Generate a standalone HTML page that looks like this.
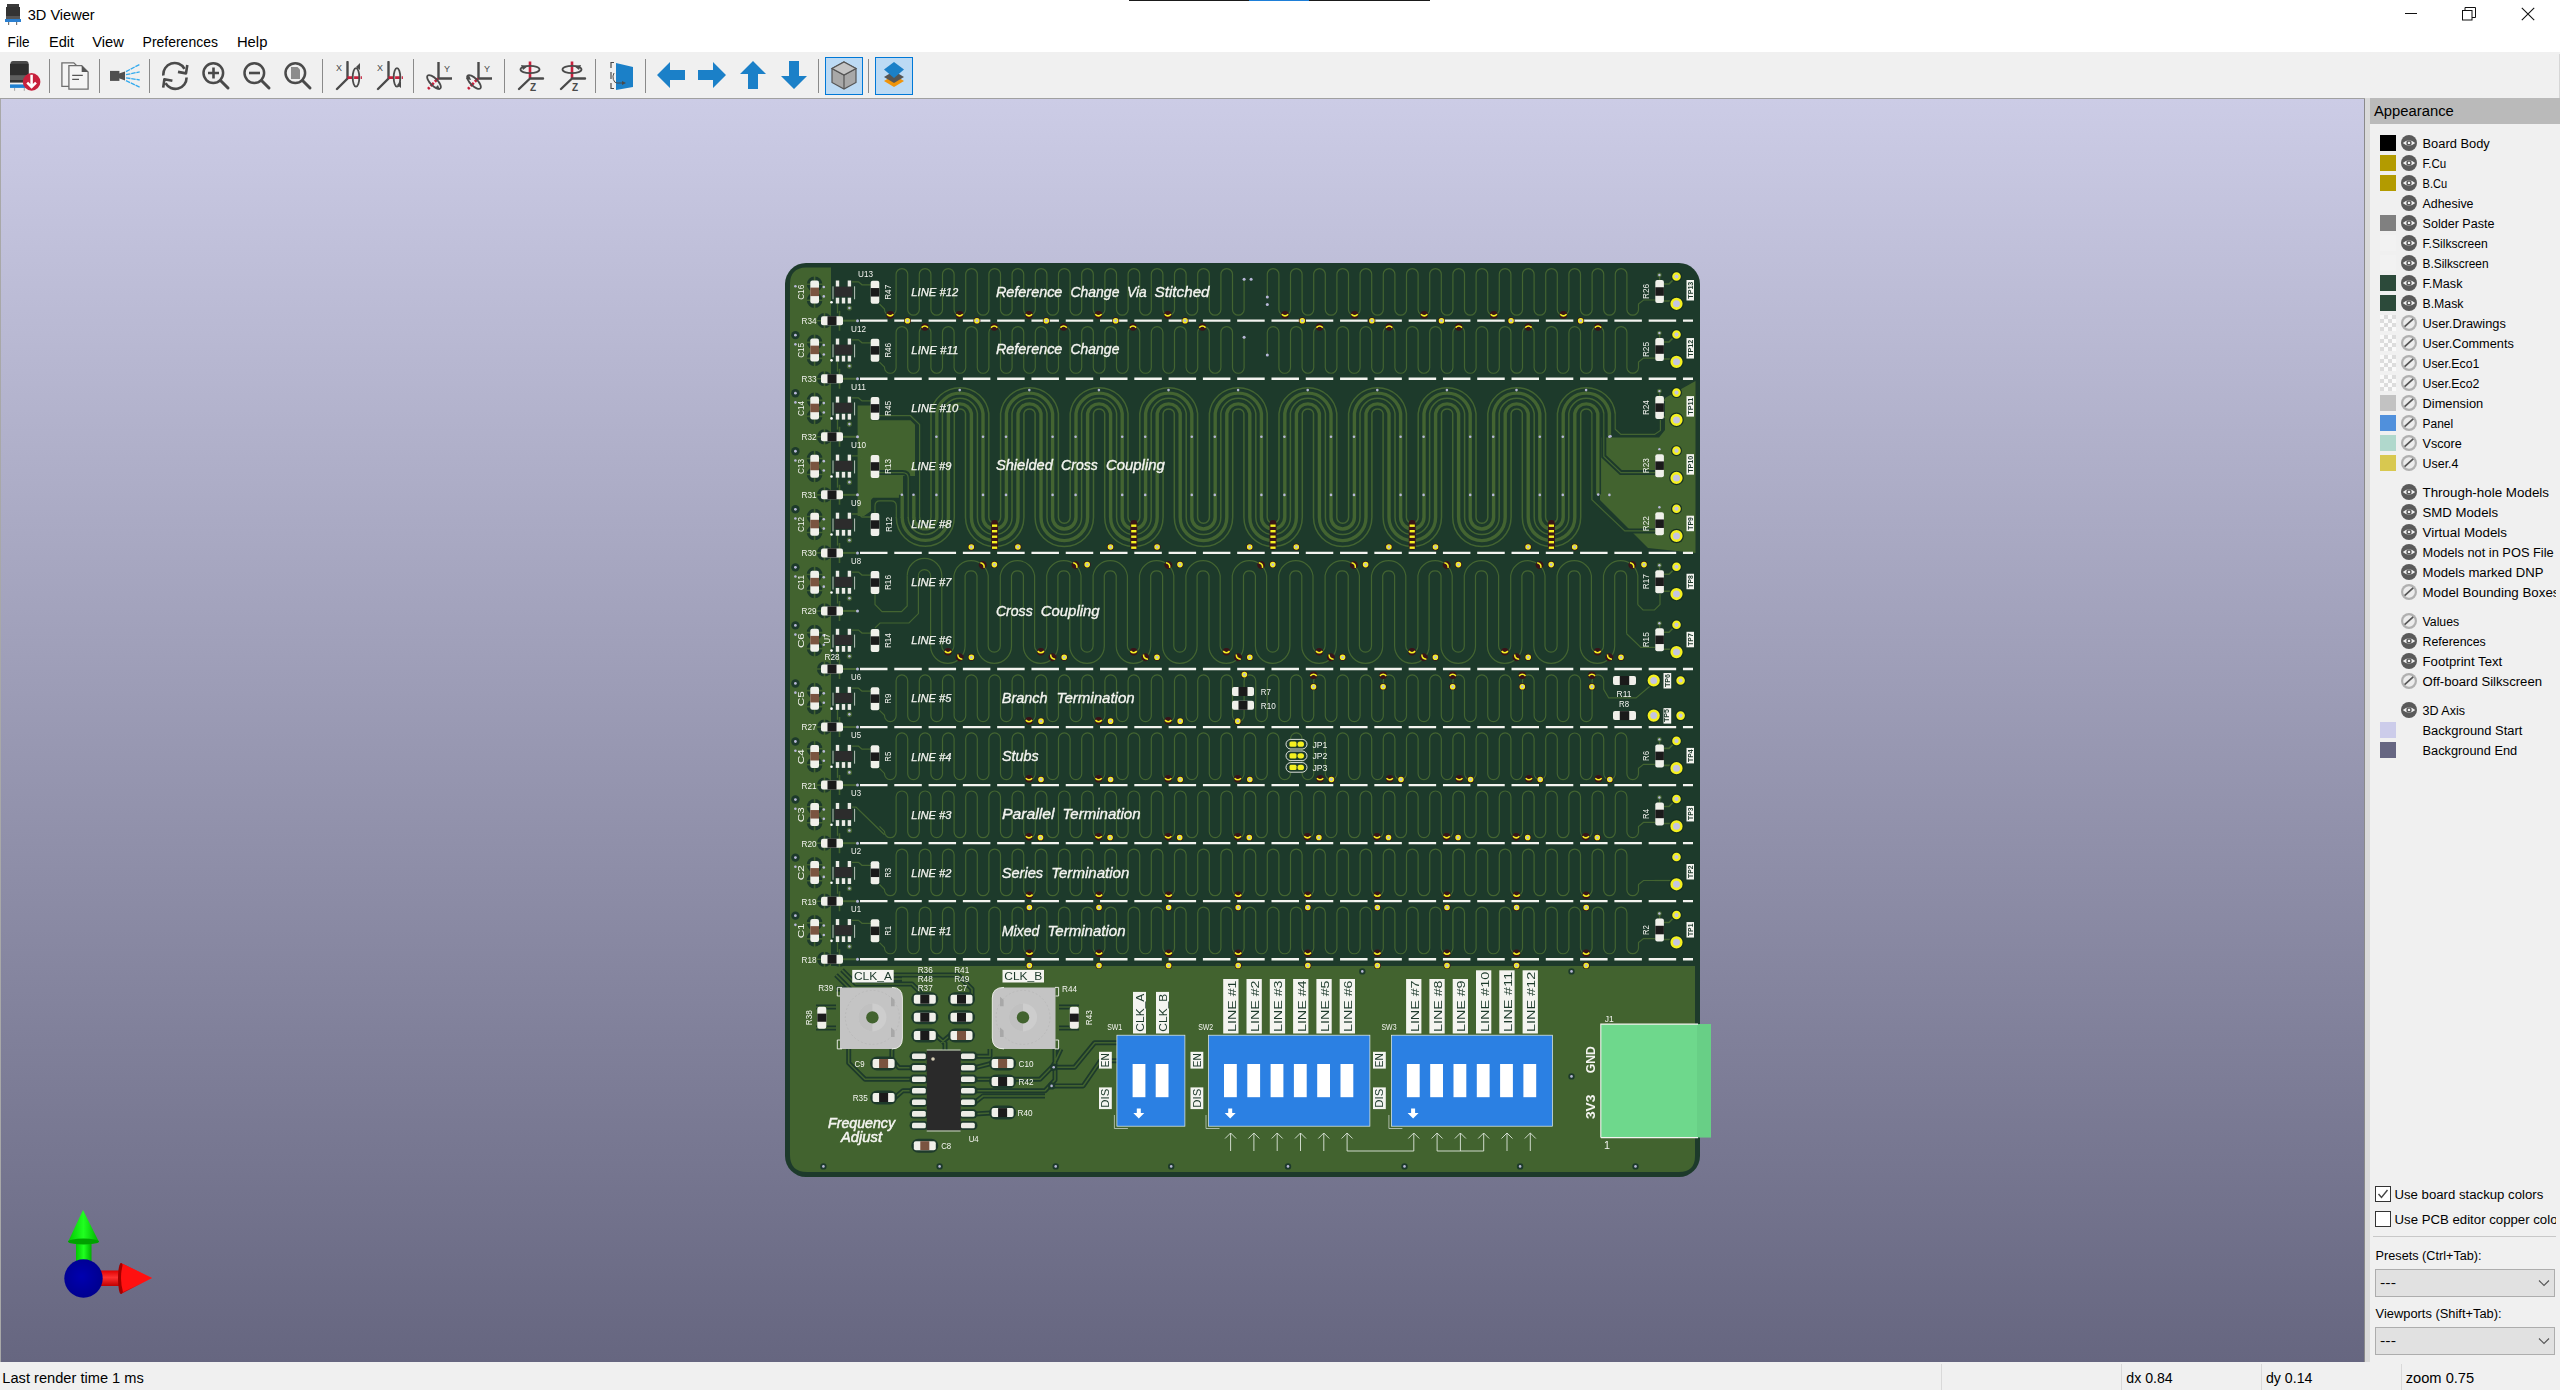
<!DOCTYPE html>
<html><head><meta charset="utf-8"><title>3D Viewer</title>
<style>
html,body{margin:0;padding:0;width:2560px;height:1390px;overflow:hidden;background:#fff}
.ab{position:absolute}
body{font-family:"Liberation Sans", sans-serif;color:#000}
.t16{font-size:16px;line-height:20px;white-space:nowrap}
.t15{font-size:15px;line-height:18px;white-space:nowrap}
</style></head><body>
<div class="ab" style="left:0;top:0;width:2560px;height:52px;background:#fff"></div>
<div class="ab" style="left:1129px;top:0;width:301px;height:1px;background:#1a1a1a"></div>
<div class="ab" style="left:1249px;top:0;width:60px;height:1px;background:#1e7fd8"></div>
<svg class="ab" style="left:4px;top:3px" width="18" height="22" viewBox="0 0 18 22"><rect x="3" y="1" width="12" height="4" fill="#3a3a3a"/><rect x="2" y="4" width="14" height="9" fill="#333"/><rect x="2" y="13" width="14" height="3" fill="#555"/><rect x="1" y="16" width="16" height="3" fill="#2a7fd0"/><rect x="4" y="19" width="1.2" height="3" fill="#777"/><rect x="12" y="19" width="1.2" height="3" fill="#777"/></svg>
<div class="ab" style="left:2405px;top:13px;width:12px;height:1px;background:#111"></div>
<svg class="ab" style="left:2462px;top:7px" width="14" height="14" viewBox="0 0 14 14"><rect x="0.5" y="3.5" width="9.5" height="9.5" fill="none" stroke="#111" stroke-width="1"/><path d="M3,3.5 V0.5 H13.5 V10.5 H10" fill="none" stroke="#111" stroke-width="1"/></svg>
<svg class="ab" style="left:2521px;top:7px" width="14" height="14" viewBox="0 0 14 14"><path d="M0.8,0.8 L13.2,13.2 M13.2,0.8 L0.8,13.2" stroke="#111" stroke-width="1.1"/></svg>
<div class="ab" style="left:0;top:52px;width:2560px;height:46px;background:#f0f0f0"></div>
<div class="ab" style="left:0;top:98px;width:2365px;height:1px;background:#a0a0a0"></div>
<div class="ab" style="left:49px;top:59px;width:1px;height:34px;background:#8a8a8a"></div>
<div class="ab" style="left:99px;top:59px;width:1px;height:34px;background:#8a8a8a"></div>
<div class="ab" style="left:149px;top:59px;width:1px;height:34px;background:#8a8a8a"></div>
<div class="ab" style="left:322px;top:59px;width:1px;height:34px;background:#8a8a8a"></div>
<div class="ab" style="left:413px;top:59px;width:1px;height:34px;background:#8a8a8a"></div>
<div class="ab" style="left:504px;top:59px;width:1px;height:34px;background:#8a8a8a"></div>
<div class="ab" style="left:595px;top:59px;width:1px;height:34px;background:#8a8a8a"></div>
<div class="ab" style="left:645px;top:59px;width:1px;height:34px;background:#8a8a8a"></div>
<div class="ab" style="left:818px;top:59px;width:1px;height:34px;background:#8a8a8a"></div>
<div class="ab" style="left:868px;top:59px;width:1px;height:34px;background:#8a8a8a"></div>
<div class="ab" style="left:2559px;top:54px;width:1px;height:44px;background:#d6d6d6"></div>
<svg class="ab" style="left:10px;top:61px" width="31" height="31" viewBox="0 0 31 31"><path d="M0.5,2.5 Q0.5,0 3,0 H16 Q18.5,0 18.5,2.5 V3 H0.5Z" fill="#4a4a4a"/><rect x="0" y="2.8" width="18.8" height="12" fill="#2e2e2e"/><rect x="0" y="15" width="18.8" height="4.2" fill="#5e5e5e"/><rect x="0" y="19" width="18.8" height="2.6" fill="#333"/><rect x="0" y="23.4" width="18.8" height="3.5" fill="#1f7fd0"/><rect x="4.2" y="27" width="0.9" height="2.8" fill="#999"/><rect x="13.8" y="27" width="0.9" height="2.8" fill="#999"/><circle cx="21.6" cy="20.9" r="8.8" fill="#c8203c"/><path d="M21.6,13.8 V25.8 M17.2,21.6 L21.6,26 L26,21.6" fill="none" stroke="#fff" stroke-width="2.5"/></svg>
<svg class="ab" style="left:61px;top:61px" width="29" height="30" viewBox="0 0 29 30"><path d="M0.9,1.8 H12.8 L15.8,4.8 V25.3 H0.9 Z" fill="#f4f4f4" stroke="#6e6e6e" stroke-width="1.3"/><path d="M7.9,4.6 H20.7 L27.1,11 V28.1 H7.9 Z" fill="#f4f4f4" stroke="#6e6e6e" stroke-width="1.3"/><path d="M20.7,4.6 L27.1,11 H20.7 Z" fill="#555"/><path d="M11.2,14.3 H21.8 M11.2,18.4 H18" stroke="#555" stroke-width="1.2"/></svg>
<svg class="ab" style="left:110px;top:61px" width="30" height="30" viewBox="0 0 30 30"><rect x="0" y="9.9" width="9.4" height="10" fill="#505050"/><path d="M9,12.6 L15,10.6 V19.6 L9,17.2 Z" fill="#505050"/><path d="M16,10.6 L29.7,3.4 M16,13.7 L29.7,10.9 M16,16.8 L29.7,19 M16,19.6 L29.7,26.2" stroke="#33aaee" stroke-width="1.3" stroke-dasharray="4.5,0.8"/></svg>
<svg class="ab" style="left:161px;top:61px" width="29" height="30" viewBox="0 0 29 30"><path d="M2.4,14.5 A11.3,11.3 0 0 1 23.5,7.8" fill="none" stroke="#4a4a4a" stroke-width="2.6"/><path d="M26.3,4 L25,12.4 L17,10.9" fill="none" stroke="#4a4a4a" stroke-width="2.6" stroke-linejoin="round"/><path d="M25.6,16.5 A11.3,11.3 0 0 1 4.5,22.2" fill="none" stroke="#4a4a4a" stroke-width="2.6"/><path d="M2.2,26.6 L3.4,18.2 L11.4,19.7" fill="none" stroke="#4a4a4a" stroke-width="2.6" stroke-linejoin="round"/></svg>
<svg class="ab" style="left:202px;top:62px" width="29" height="29" viewBox="0 0 29 29"><circle cx="11.3" cy="11.1" r="9.8" fill="none" stroke="#4a4a4a" stroke-width="2.5"/><path d="M18.5,18.5 L26,26" stroke="#4a4a4a" stroke-width="3" stroke-linecap="round"/><path d="M11.5,5.5 V16.5 M6,11 H17" stroke="#4a4a4a" stroke-width="2.6"/></svg>
<svg class="ab" style="left:243px;top:62px" width="29" height="29" viewBox="0 0 29 29"><circle cx="11.3" cy="11.1" r="9.8" fill="none" stroke="#4a4a4a" stroke-width="2.5"/><path d="M18.5,18.5 L26,26" stroke="#4a4a4a" stroke-width="3" stroke-linecap="round"/><path d="M6,11 H17" stroke="#4a4a4a" stroke-width="2.6"/></svg>
<svg class="ab" style="left:284px;top:62px" width="29" height="29" viewBox="0 0 29 29"><circle cx="11.3" cy="11.1" r="9.8" fill="none" stroke="#4a4a4a" stroke-width="2.5"/><path d="M18.5,18.5 L26,26" stroke="#4a4a4a" stroke-width="3" stroke-linecap="round"/><path d="M7,5 H13.5 L16,7.5 V17 H7 Z" fill="#8c8c8c"/></svg>
<svg class="ab" style="left:335px;top:61px" width="28" height="30" viewBox="0 0 28 30"><text x="1" y="10" font-family="Liberation Sans" font-size="9" fill="#4a4a4a">X</text><path d="M12.5,1 V17.5 L2,28" fill="none" stroke="#4a4a4a" stroke-width="2.4" stroke-linecap="round"/><path d="M12.5,16.6 H26.9" stroke="#c8203c" stroke-width="2.6" stroke-dasharray="5,1.6"/><ellipse cx="21" cy="16.4" rx="3.3" ry="9.3" fill="none" stroke="#4a4a4a" stroke-width="1.8"/><path d="M21,6 L25,2 L25,9 Z" fill="#4a4a4a"/></svg>
<svg class="ab" style="left:376px;top:61px" width="28" height="30" viewBox="0 0 28 30"><text x="1" y="10" font-family="Liberation Sans" font-size="9" fill="#4a4a4a">X</text><path d="M12.5,1 V17.5 L2,28" fill="none" stroke="#4a4a4a" stroke-width="2.4" stroke-linecap="round"/><path d="M12.5,16.6 H26.9" stroke="#c8203c" stroke-width="2.6" stroke-dasharray="5,1.6"/><ellipse cx="21" cy="16.4" rx="3.3" ry="9.3" fill="none" stroke="#4a4a4a" stroke-width="1.8"/><path d="M21,24 L25,27 L25,20 Z" fill="#4a4a4a"/></svg>
<svg class="ab" style="left:426px;top:61px" width="28" height="30" viewBox="0 0 28 30"><text x="18" y="11" font-family="Liberation Sans" font-size="9" fill="#4a4a4a">Y</text><path d="M12.5,1 V17.5 H26" fill="none" stroke="#4a4a4a" stroke-width="2.4"/><path d="M12,17.5 L2,28" stroke="#c8203c" stroke-width="2.6" stroke-dasharray="4.5,1.6"/><ellipse cx="8" cy="21" rx="9" ry="3.6" transform="rotate(45 8 21)" fill="none" stroke="#4a4a4a" stroke-width="1.8"/><path d="M9,27 L14,29 L12,24 Z" fill="#4a4a4a"/></svg>
<svg class="ab" style="left:466px;top:61px" width="28" height="30" viewBox="0 0 28 30"><text x="18" y="11" font-family="Liberation Sans" font-size="9" fill="#4a4a4a">Y</text><path d="M12.5,1 V17.5 H26" fill="none" stroke="#4a4a4a" stroke-width="2.4"/><path d="M12,17.5 L2,28" stroke="#c8203c" stroke-width="2.6" stroke-dasharray="4.5,1.6"/><ellipse cx="8" cy="21" rx="9" ry="3.6" transform="rotate(45 8 21)" fill="none" stroke="#4a4a4a" stroke-width="1.8"/><path d="M0,18 L3,14 L5,19 Z" fill="#4a4a4a"/></svg>
<svg class="ab" style="left:517px;top:61px" width="28" height="30" viewBox="0 0 28 30"><path d="M13,0.5 V17" stroke="#c8203c" stroke-width="2.6"/><path d="M13,17.5 H26 M13,17.5 L2,28" fill="none" stroke="#4a4a4a" stroke-width="2.4" stroke-linecap="round"/><ellipse cx="13" cy="8.5" rx="9.5" ry="3.6" fill="none" stroke="#4a4a4a" stroke-width="1.8"/><text x="13" y="29.5" font-family="Liberation Sans" font-weight="bold" font-size="10" fill="#4a4a4a">Z</text><path d="M4,4 L11,5 L6,9 Z" fill="#4a4a4a"/></svg>
<svg class="ab" style="left:559px;top:61px" width="28" height="30" viewBox="0 0 28 30"><path d="M13,0.5 V17" stroke="#c8203c" stroke-width="2.6"/><path d="M13,17.5 H26 M13,17.5 L2,28" fill="none" stroke="#4a4a4a" stroke-width="2.4" stroke-linecap="round"/><ellipse cx="13" cy="8.5" rx="9.5" ry="3.6" fill="none" stroke="#4a4a4a" stroke-width="1.8"/><text x="13" y="29.5" font-family="Liberation Sans" font-weight="bold" font-size="10" fill="#4a4a4a">Z</text><path d="M22,4 L15,5 L20,9 Z" fill="#4a4a4a"/></svg>
<svg class="ab" style="left:610px;top:61px" width="24" height="30" viewBox="0 0 24 30"><path d="M6,2 L23,6 V26 L6,29 Z" fill="#1b80c8"/><path d="M4,1.5 H1 V7 M1,11 V18 M1,22 V27.5 H4" fill="none" stroke="#4a4a4a" stroke-width="1.2"/><path d="M4,12 A4,6 0 0 0 7,22 H12" fill="none" stroke="#4a4a4a" stroke-width="1"/><path d="M12,20 L16,22 L12,24Z" fill="#4a4a4a"/></svg>
<svg class="ab" style="left:657px;top:61px" width="28" height="28" viewBox="0 0 28 28"><path d="M0,14 L13,1 V9 H28 V19 H13 V27 Z" fill="#1b80c8"/></svg>
<svg class="ab" style="left:698px;top:61px" width="28" height="28" viewBox="0 0 28 28"><path d="M28,14 L15,1 V9 H0 V19 H15 V27 Z" fill="#1b80c8"/></svg>
<svg class="ab" style="left:739px;top:61px" width="28" height="28" viewBox="0 0 28 28"><path d="M14,0 L27,13 H19 V28 H9 V13 H1 Z" fill="#1b80c8"/></svg>
<svg class="ab" style="left:780px;top:61px" width="28" height="28" viewBox="0 0 28 28"><path d="M14,28 L27,15 H19 V0 H9 V15 H1 Z" fill="#1b80c8"/></svg>
<div class="ab" style="left:825px;top:57px;width:36px;height:36px;background:#bcdaf4;border:1px solid #0078d7"></div>
<div class="ab" style="left:875px;top:57px;width:36px;height:36px;background:#bcdaf4;border:1px solid #0078d7"></div>
<svg class="ab" style="left:830px;top:61px" width="28" height="29" viewBox="0 0 28 29"><path d="M14,1 L26,7.5 V21.5 L14,28 L2,21.5 V7.5 Z" fill="#a8a8a8" stroke="#555" stroke-width="1.2"/><path d="M2,7.5 L14,14 L26,7.5 M14,14 V28" fill="none" stroke="#555" stroke-width="1.2"/><path d="M14,1 L26,7.5 L14,14 L2,7.5 Z" fill="#c4c4c4" stroke="#555" stroke-width="1.2"/></svg>
<svg class="ab" style="left:880px;top:61px" width="28" height="30" viewBox="0 0 28 30"><path d="M14,14 L24,20 L14,26 L4,20 Z" fill="#f0940a"/><path d="M14,10 L24,16 L14,22 L4,16 Z" fill="#555"/><path d="M14,1 L24,8.5 L14,17 L4,8.5 Z" fill="#1b80c8"/></svg>
<div class="ab" style="left:0;top:99px;width:2365px;height:1263px;background:linear-gradient(#cccce6 0px,#666680 100%)"></div>
<div class="ab" style="left:0;top:99px;width:1px;height:1263px;background:#a8a8a8"></div>
<div class="ab" style="left:2364px;top:99px;width:1px;height:1263px;background:#8a8a8a"></div>
<div class="ab" style="left:2365px;top:98px;width:5px;height:1264px;background:#dadada"></div>
<div class="ab" style="left:2370px;top:98px;width:190px;height:1264px;background:#f0f0f0"></div>
<div class="ab" style="left:2370px;top:98px;width:190px;height:26px;background:#bababa"></div>
<div class="ab" style="left:2380px;top:135px;width:16px;height:16px;background:#000000"></div>
<svg class="ab" style="left:2401px;top:135px" width="16" height="16" viewBox="0 0 16 16"><circle cx="8" cy="8" r="8" fill="#5a5a5a"/><path d="M1.8,8 Q8,2.6 14.2,8 Q8,13.4 1.8,8Z" fill="#f0f0f0"/><circle cx="8" cy="7.9" r="2.7" fill="#5a5a5a"/><rect x="6.9" y="6.8" width="2.2" height="2.2" fill="#f0f0f0"/></svg>
<div class="ab" style="left:2380px;top:155px;width:16px;height:16px;background:#b39b00"></div>
<svg class="ab" style="left:2401px;top:155px" width="16" height="16" viewBox="0 0 16 16"><circle cx="8" cy="8" r="8" fill="#5a5a5a"/><path d="M1.8,8 Q8,2.6 14.2,8 Q8,13.4 1.8,8Z" fill="#f0f0f0"/><circle cx="8" cy="7.9" r="2.7" fill="#5a5a5a"/><rect x="6.9" y="6.8" width="2.2" height="2.2" fill="#f0f0f0"/></svg>
<div class="ab" style="left:2380px;top:175px;width:16px;height:16px;background:#b39b00"></div>
<svg class="ab" style="left:2401px;top:175px" width="16" height="16" viewBox="0 0 16 16"><circle cx="8" cy="8" r="8" fill="#5a5a5a"/><path d="M1.8,8 Q8,2.6 14.2,8 Q8,13.4 1.8,8Z" fill="#f0f0f0"/><circle cx="8" cy="7.9" r="2.7" fill="#5a5a5a"/><rect x="6.9" y="6.8" width="2.2" height="2.2" fill="#f0f0f0"/></svg>
<svg class="ab" style="left:2401px;top:195px" width="16" height="16" viewBox="0 0 16 16"><circle cx="8" cy="8" r="8" fill="#5a5a5a"/><path d="M1.8,8 Q8,2.6 14.2,8 Q8,13.4 1.8,8Z" fill="#f0f0f0"/><circle cx="8" cy="7.9" r="2.7" fill="#5a5a5a"/><rect x="6.9" y="6.8" width="2.2" height="2.2" fill="#f0f0f0"/></svg>
<div class="ab" style="left:2380px;top:215px;width:16px;height:16px;background:#808080"></div>
<svg class="ab" style="left:2401px;top:215px" width="16" height="16" viewBox="0 0 16 16"><circle cx="8" cy="8" r="8" fill="#5a5a5a"/><path d="M1.8,8 Q8,2.6 14.2,8 Q8,13.4 1.8,8Z" fill="#f0f0f0"/><circle cx="8" cy="7.9" r="2.7" fill="#5a5a5a"/><rect x="6.9" y="6.8" width="2.2" height="2.2" fill="#f0f0f0"/></svg>
<div class="ab" style="left:2380px;top:235px;width:16px;height:16px;background:#f2f2f2"></div>
<svg class="ab" style="left:2401px;top:235px" width="16" height="16" viewBox="0 0 16 16"><circle cx="8" cy="8" r="8" fill="#5a5a5a"/><path d="M1.8,8 Q8,2.6 14.2,8 Q8,13.4 1.8,8Z" fill="#f0f0f0"/><circle cx="8" cy="7.9" r="2.7" fill="#5a5a5a"/><rect x="6.9" y="6.8" width="2.2" height="2.2" fill="#f0f0f0"/></svg>
<div class="ab" style="left:2380px;top:255px;width:16px;height:16px;background:#f2f2f2"></div>
<svg class="ab" style="left:2401px;top:255px" width="16" height="16" viewBox="0 0 16 16"><circle cx="8" cy="8" r="8" fill="#5a5a5a"/><path d="M1.8,8 Q8,2.6 14.2,8 Q8,13.4 1.8,8Z" fill="#f0f0f0"/><circle cx="8" cy="7.9" r="2.7" fill="#5a5a5a"/><rect x="6.9" y="6.8" width="2.2" height="2.2" fill="#f0f0f0"/></svg>
<div class="ab" style="left:2380px;top:275px;width:16px;height:16px;background:#2c4a3a"></div>
<svg class="ab" style="left:2401px;top:275px" width="16" height="16" viewBox="0 0 16 16"><circle cx="8" cy="8" r="8" fill="#5a5a5a"/><path d="M1.8,8 Q8,2.6 14.2,8 Q8,13.4 1.8,8Z" fill="#f0f0f0"/><circle cx="8" cy="7.9" r="2.7" fill="#5a5a5a"/><rect x="6.9" y="6.8" width="2.2" height="2.2" fill="#f0f0f0"/></svg>
<div class="ab" style="left:2380px;top:295px;width:16px;height:16px;background:#2c4a3a"></div>
<svg class="ab" style="left:2401px;top:295px" width="16" height="16" viewBox="0 0 16 16"><circle cx="8" cy="8" r="8" fill="#5a5a5a"/><path d="M1.8,8 Q8,2.6 14.2,8 Q8,13.4 1.8,8Z" fill="#f0f0f0"/><circle cx="8" cy="7.9" r="2.7" fill="#5a5a5a"/><rect x="6.9" y="6.8" width="2.2" height="2.2" fill="#f0f0f0"/></svg>
<svg class="ab" style="left:2380px;top:315px" width="16" height="16"><rect width="16" height="16" fill="#fafafa"/><rect x="4" y="0" width="4" height="4" fill="#dcdcdc"/><rect x="0" y="4" width="4" height="4" fill="#dcdcdc"/><rect x="8" y="4" width="4" height="4" fill="#dcdcdc"/><rect x="12" y="0" width="4" height="4" fill="#dcdcdc"/><rect x="4" y="8" width="4" height="4" fill="#dcdcdc"/><rect x="12" y="8" width="4" height="4" fill="#dcdcdc"/><rect x="0" y="12" width="4" height="4" fill="#dcdcdc"/><rect x="8" y="12" width="4" height="4" fill="#dcdcdc"/></svg>
<svg class="ab" style="left:2401px;top:315px" width="16" height="16" viewBox="0 0 16 16"><circle cx="8" cy="8" r="8" fill="#b0b0b0"/><circle cx="8" cy="8" r="5.8" fill="#ececec"/><path d="M3.6,11.6 L12.2,3.8" stroke="#555" stroke-width="1.7"/></svg>
<svg class="ab" style="left:2380px;top:335px" width="16" height="16"><rect width="16" height="16" fill="#fafafa"/><rect x="4" y="0" width="4" height="4" fill="#dcdcdc"/><rect x="0" y="4" width="4" height="4" fill="#dcdcdc"/><rect x="8" y="4" width="4" height="4" fill="#dcdcdc"/><rect x="12" y="0" width="4" height="4" fill="#dcdcdc"/><rect x="4" y="8" width="4" height="4" fill="#dcdcdc"/><rect x="12" y="8" width="4" height="4" fill="#dcdcdc"/><rect x="0" y="12" width="4" height="4" fill="#dcdcdc"/><rect x="8" y="12" width="4" height="4" fill="#dcdcdc"/></svg>
<svg class="ab" style="left:2401px;top:335px" width="16" height="16" viewBox="0 0 16 16"><circle cx="8" cy="8" r="8" fill="#b0b0b0"/><circle cx="8" cy="8" r="5.8" fill="#ececec"/><path d="M3.6,11.6 L12.2,3.8" stroke="#555" stroke-width="1.7"/></svg>
<svg class="ab" style="left:2380px;top:355px" width="16" height="16"><rect width="16" height="16" fill="#fafafa"/><rect x="4" y="0" width="4" height="4" fill="#dcdcdc"/><rect x="0" y="4" width="4" height="4" fill="#dcdcdc"/><rect x="8" y="4" width="4" height="4" fill="#dcdcdc"/><rect x="12" y="0" width="4" height="4" fill="#dcdcdc"/><rect x="4" y="8" width="4" height="4" fill="#dcdcdc"/><rect x="12" y="8" width="4" height="4" fill="#dcdcdc"/><rect x="0" y="12" width="4" height="4" fill="#dcdcdc"/><rect x="8" y="12" width="4" height="4" fill="#dcdcdc"/></svg>
<svg class="ab" style="left:2401px;top:355px" width="16" height="16" viewBox="0 0 16 16"><circle cx="8" cy="8" r="8" fill="#b0b0b0"/><circle cx="8" cy="8" r="5.8" fill="#ececec"/><path d="M3.6,11.6 L12.2,3.8" stroke="#555" stroke-width="1.7"/></svg>
<svg class="ab" style="left:2380px;top:375px" width="16" height="16"><rect width="16" height="16" fill="#fafafa"/><rect x="4" y="0" width="4" height="4" fill="#dcdcdc"/><rect x="0" y="4" width="4" height="4" fill="#dcdcdc"/><rect x="8" y="4" width="4" height="4" fill="#dcdcdc"/><rect x="12" y="0" width="4" height="4" fill="#dcdcdc"/><rect x="4" y="8" width="4" height="4" fill="#dcdcdc"/><rect x="12" y="8" width="4" height="4" fill="#dcdcdc"/><rect x="0" y="12" width="4" height="4" fill="#dcdcdc"/><rect x="8" y="12" width="4" height="4" fill="#dcdcdc"/></svg>
<svg class="ab" style="left:2401px;top:375px" width="16" height="16" viewBox="0 0 16 16"><circle cx="8" cy="8" r="8" fill="#b0b0b0"/><circle cx="8" cy="8" r="5.8" fill="#ececec"/><path d="M3.6,11.6 L12.2,3.8" stroke="#555" stroke-width="1.7"/></svg>
<div class="ab" style="left:2380px;top:395px;width:16px;height:16px;background:#c2c2c2"></div>
<svg class="ab" style="left:2401px;top:395px" width="16" height="16" viewBox="0 0 16 16"><circle cx="8" cy="8" r="8" fill="#b0b0b0"/><circle cx="8" cy="8" r="5.8" fill="#ececec"/><path d="M3.6,11.6 L12.2,3.8" stroke="#555" stroke-width="1.7"/></svg>
<div class="ab" style="left:2380px;top:415px;width:16px;height:16px;background:#5090dc"></div>
<svg class="ab" style="left:2401px;top:415px" width="16" height="16" viewBox="0 0 16 16"><circle cx="8" cy="8" r="8" fill="#b0b0b0"/><circle cx="8" cy="8" r="5.8" fill="#ececec"/><path d="M3.6,11.6 L12.2,3.8" stroke="#555" stroke-width="1.7"/></svg>
<div class="ab" style="left:2380px;top:435px;width:16px;height:16px;background:#b0d8cc"></div>
<svg class="ab" style="left:2401px;top:435px" width="16" height="16" viewBox="0 0 16 16"><circle cx="8" cy="8" r="8" fill="#b0b0b0"/><circle cx="8" cy="8" r="5.8" fill="#ececec"/><path d="M3.6,11.6 L12.2,3.8" stroke="#555" stroke-width="1.7"/></svg>
<div class="ab" style="left:2380px;top:455px;width:16px;height:16px;background:#d8c850"></div>
<svg class="ab" style="left:2401px;top:455px" width="16" height="16" viewBox="0 0 16 16"><circle cx="8" cy="8" r="8" fill="#b0b0b0"/><circle cx="8" cy="8" r="5.8" fill="#ececec"/><path d="M3.6,11.6 L12.2,3.8" stroke="#555" stroke-width="1.7"/></svg>
<svg class="ab" style="left:2401px;top:484px" width="16" height="16" viewBox="0 0 16 16"><circle cx="8" cy="8" r="8" fill="#5a5a5a"/><path d="M1.8,8 Q8,2.6 14.2,8 Q8,13.4 1.8,8Z" fill="#f0f0f0"/><circle cx="8" cy="7.9" r="2.7" fill="#5a5a5a"/><rect x="6.9" y="6.8" width="2.2" height="2.2" fill="#f0f0f0"/></svg>
<svg class="ab" style="left:2401px;top:504px" width="16" height="16" viewBox="0 0 16 16"><circle cx="8" cy="8" r="8" fill="#5a5a5a"/><path d="M1.8,8 Q8,2.6 14.2,8 Q8,13.4 1.8,8Z" fill="#f0f0f0"/><circle cx="8" cy="7.9" r="2.7" fill="#5a5a5a"/><rect x="6.9" y="6.8" width="2.2" height="2.2" fill="#f0f0f0"/></svg>
<svg class="ab" style="left:2401px;top:524px" width="16" height="16" viewBox="0 0 16 16"><circle cx="8" cy="8" r="8" fill="#5a5a5a"/><path d="M1.8,8 Q8,2.6 14.2,8 Q8,13.4 1.8,8Z" fill="#f0f0f0"/><circle cx="8" cy="7.9" r="2.7" fill="#5a5a5a"/><rect x="6.9" y="6.8" width="2.2" height="2.2" fill="#f0f0f0"/></svg>
<svg class="ab" style="left:2401px;top:544px" width="16" height="16" viewBox="0 0 16 16"><circle cx="8" cy="8" r="8" fill="#5a5a5a"/><path d="M1.8,8 Q8,2.6 14.2,8 Q8,13.4 1.8,8Z" fill="#f0f0f0"/><circle cx="8" cy="7.9" r="2.7" fill="#5a5a5a"/><rect x="6.9" y="6.8" width="2.2" height="2.2" fill="#f0f0f0"/></svg>
<svg class="ab" style="left:2401px;top:564px" width="16" height="16" viewBox="0 0 16 16"><circle cx="8" cy="8" r="8" fill="#5a5a5a"/><path d="M1.8,8 Q8,2.6 14.2,8 Q8,13.4 1.8,8Z" fill="#f0f0f0"/><circle cx="8" cy="7.9" r="2.7" fill="#5a5a5a"/><rect x="6.9" y="6.8" width="2.2" height="2.2" fill="#f0f0f0"/></svg>
<svg class="ab" style="left:2401px;top:584px" width="16" height="16" viewBox="0 0 16 16"><circle cx="8" cy="8" r="8" fill="#b0b0b0"/><circle cx="8" cy="8" r="5.8" fill="#ececec"/><path d="M3.6,11.6 L12.2,3.8" stroke="#555" stroke-width="1.7"/></svg>
<svg class="ab" style="left:2401px;top:613px" width="16" height="16" viewBox="0 0 16 16"><circle cx="8" cy="8" r="8" fill="#b0b0b0"/><circle cx="8" cy="8" r="5.8" fill="#ececec"/><path d="M3.6,11.6 L12.2,3.8" stroke="#555" stroke-width="1.7"/></svg>
<svg class="ab" style="left:2401px;top:633px" width="16" height="16" viewBox="0 0 16 16"><circle cx="8" cy="8" r="8" fill="#5a5a5a"/><path d="M1.8,8 Q8,2.6 14.2,8 Q8,13.4 1.8,8Z" fill="#f0f0f0"/><circle cx="8" cy="7.9" r="2.7" fill="#5a5a5a"/><rect x="6.9" y="6.8" width="2.2" height="2.2" fill="#f0f0f0"/></svg>
<svg class="ab" style="left:2401px;top:653px" width="16" height="16" viewBox="0 0 16 16"><circle cx="8" cy="8" r="8" fill="#5a5a5a"/><path d="M1.8,8 Q8,2.6 14.2,8 Q8,13.4 1.8,8Z" fill="#f0f0f0"/><circle cx="8" cy="7.9" r="2.7" fill="#5a5a5a"/><rect x="6.9" y="6.8" width="2.2" height="2.2" fill="#f0f0f0"/></svg>
<svg class="ab" style="left:2401px;top:673px" width="16" height="16" viewBox="0 0 16 16"><circle cx="8" cy="8" r="8" fill="#b0b0b0"/><circle cx="8" cy="8" r="5.8" fill="#ececec"/><path d="M3.6,11.6 L12.2,3.8" stroke="#555" stroke-width="1.7"/></svg>
<svg class="ab" style="left:2401px;top:702px" width="16" height="16" viewBox="0 0 16 16"><circle cx="8" cy="8" r="8" fill="#5a5a5a"/><path d="M1.8,8 Q8,2.6 14.2,8 Q8,13.4 1.8,8Z" fill="#f0f0f0"/><circle cx="8" cy="7.9" r="2.7" fill="#5a5a5a"/><rect x="6.9" y="6.8" width="2.2" height="2.2" fill="#f0f0f0"/></svg>
<div class="ab" style="left:2380px;top:722px;width:16px;height:16px;background:#ccccea"></div>
<div class="ab" style="left:2380px;top:742px;width:16px;height:16px;background:#666682"></div>
<div class="ab" style="left:2375px;top:1186px;width:14px;height:14px;border:1px solid #333;background:#fff"></div>
<svg class="ab" style="left:2377px;top:1188px" width="12" height="12" viewBox="0 0 12 12"><path d="M1.5,6 L4.5,9.5 L10.5,2" fill="none" stroke="#444" stroke-width="1.4"/></svg>
<div class="ab" style="left:2375px;top:1211px;width:14px;height:14px;border:1px solid #333;background:#fff"></div>
<div class="ab" style="left:2373px;top:1236px;width:183px;height:1px;background:#c8c8c8"></div>
<div class="ab" style="left:2375px;top:1269px;width:178px;height:26px;border:1px solid #adadad;background:#e1e1e1"></div>
<svg class="ab" style="left:2538px;top:1279px" width="12" height="8" viewBox="0 0 12 8"><path d="M1,1.5 L6,6.5 L11,1.5" fill="none" stroke="#555" stroke-width="1.1"/></svg>
<div class="ab" style="left:2375px;top:1327px;width:178px;height:26px;border:1px solid #adadad;background:#e1e1e1"></div>
<svg class="ab" style="left:2538px;top:1337px" width="12" height="8" viewBox="0 0 12 8"><path d="M1,1.5 L6,6.5 L11,1.5" fill="none" stroke="#555" stroke-width="1.1"/></svg>
<div class="ab" style="left:0;top:1362px;width:2560px;height:28px;background:#f0f0f0"></div>
<div class="ab" style="left:1941px;top:1364px;width:1px;height:26px;background:#d9d9d9"></div>
<div class="ab" style="left:2121px;top:1364px;width:1px;height:26px;background:#d9d9d9"></div>
<div class="ab" style="left:2261px;top:1364px;width:1px;height:26px;background:#d9d9d9"></div>
<div class="ab" style="left:2401px;top:1364px;width:1px;height:26px;background:#d9d9d9"></div>
<svg class="ab" style="left:50px;top:1200px" width="120" height="110" viewBox="50 1200 120 110"><defs><linearGradient id="gsh" x1="0" x2="1"><stop offset="0" stop-color="#00c800"/><stop offset="0.5" stop-color="#20ff20"/><stop offset="1" stop-color="#00b000"/></linearGradient><linearGradient id="rsh" x1="0" x2="0" y1="0" y2="1"><stop offset="0" stop-color="#e00000"/><stop offset="0.45" stop-color="#ff3030"/><stop offset="1" stop-color="#c00000"/></linearGradient><radialGradient id="bsh" cx="0.45" cy="0.45" r="0.6"><stop offset="0" stop-color="#0000b0"/><stop offset="1" stop-color="#00008c"/></radialGradient></defs><rect x="76" y="1239" width="15.5" height="32" fill="url(#gsh)"/><path d="M83,1210 L99,1242 Q83,1247 68,1242 Z" fill="url(#gsh)"/><ellipse cx="83.5" cy="1241.5" rx="15.5" ry="3" fill="#00a000"/><rect x="95" y="1270.5" width="28" height="15.5" fill="url(#rsh)"/><path d="M152,1278 L121,1263 Q117,1278 121,1294 Z" fill="url(#rsh)"/><ellipse cx="121" cy="1278.5" rx="3" ry="15.5" fill="#a00000"/><path d="M152,1278 L123,1264 Q119,1278 123,1292 Z" fill="#ff1010"/><circle cx="83.5" cy="1278.5" r="19.2" fill="url(#bsh)"/></svg>
<svg class="ab" style="left:0;top:0" width="2560" height="1390" font-family="Liberation Sans"><defs><clipPath id="pclip"><rect x="0" y="0" width="2556" height="1390"/></clipPath></defs><g clip-path="url(#pclip)"><text x="27.7" y="20.1" font-size="15.5" fill="#000" textLength="67" lengthAdjust="spacingAndGlyphs">3D Viewer</text><text x="7.6" y="46.8" font-size="15.2" fill="#000" textLength="21.9" lengthAdjust="spacingAndGlyphs">File</text><text x="49" y="46.8" font-size="15.2" fill="#000" textLength="25.1" lengthAdjust="spacingAndGlyphs">Edit</text><text x="92.2" y="46.8" font-size="15.2" fill="#000" textLength="31.7" lengthAdjust="spacingAndGlyphs">View</text><text x="142.6" y="46.8" font-size="15.2" fill="#000" textLength="75.3" lengthAdjust="spacingAndGlyphs">Preferences</text><text x="236.9" y="46.8" font-size="15.2" fill="#000" textLength="30.5" lengthAdjust="spacingAndGlyphs">Help</text><text x="2374" y="115.7" font-size="15.5" fill="#000" textLength="79.8" lengthAdjust="spacingAndGlyphs">Appearance</text><text x="2422.5" y="147.7" font-size="12.5" fill="#000" textLength="67.3" lengthAdjust="spacingAndGlyphs">Board Body</text><text x="2422.5" y="167.7" font-size="12.5" fill="#000" textLength="23.8" lengthAdjust="spacingAndGlyphs">F.Cu</text><text x="2422.5" y="187.7" font-size="12.5" fill="#000" textLength="24.6" lengthAdjust="spacingAndGlyphs">B.Cu</text><text x="2422.5" y="207.7" font-size="12.5" fill="#000" textLength="51" lengthAdjust="spacingAndGlyphs">Adhesive</text><text x="2422.5" y="227.7" font-size="12.5" fill="#000" textLength="72" lengthAdjust="spacingAndGlyphs">Solder Paste</text><text x="2422.5" y="247.7" font-size="12.5" fill="#000" textLength="65.3" lengthAdjust="spacingAndGlyphs">F.Silkscreen</text><text x="2422.5" y="267.7" font-size="12.5" fill="#000" textLength="66" lengthAdjust="spacingAndGlyphs">B.Silkscreen</text><text x="2422.5" y="287.7" font-size="12.5" fill="#000" textLength="40" lengthAdjust="spacingAndGlyphs">F.Mask</text><text x="2422.5" y="307.7" font-size="12.5" fill="#000" textLength="41" lengthAdjust="spacingAndGlyphs">B.Mask</text><text x="2422.5" y="327.7" font-size="12.5" fill="#000" textLength="83.3" lengthAdjust="spacingAndGlyphs">User.Drawings</text><text x="2422.5" y="347.7" font-size="12.5" fill="#000" textLength="91.3" lengthAdjust="spacingAndGlyphs">User.Comments</text><text x="2422.5" y="367.7" font-size="12.5" fill="#000" textLength="57" lengthAdjust="spacingAndGlyphs">User.Eco1</text><text x="2422.5" y="387.7" font-size="12.5" fill="#000" textLength="57" lengthAdjust="spacingAndGlyphs">User.Eco2</text><text x="2422.5" y="407.7" font-size="12.5" fill="#000" textLength="60.7" lengthAdjust="spacingAndGlyphs">Dimension</text><text x="2422.5" y="427.7" font-size="12.5" fill="#000" textLength="30.6" lengthAdjust="spacingAndGlyphs">Panel</text><text x="2422.5" y="447.7" font-size="12.5" fill="#000" textLength="39.3" lengthAdjust="spacingAndGlyphs">Vscore</text><text x="2422.5" y="467.7" font-size="12.5" fill="#000" textLength="36" lengthAdjust="spacingAndGlyphs">User.4</text><text x="2422.5" y="496.7" font-size="12.5" fill="#000" textLength="126.5" lengthAdjust="spacingAndGlyphs">Through-hole Models</text><text x="2422.5" y="516.7" font-size="12.5" fill="#000" textLength="75.6" lengthAdjust="spacingAndGlyphs">SMD Models</text><text x="2422.5" y="536.7" font-size="12.5" fill="#000" textLength="84.5" lengthAdjust="spacingAndGlyphs">Virtual Models</text><text x="2422.5" y="556.7" font-size="12.5" fill="#000" textLength="131.2" lengthAdjust="spacingAndGlyphs">Models not in POS File</text><text x="2422.5" y="576.7" font-size="12.5" fill="#000" textLength="121" lengthAdjust="spacingAndGlyphs">Models marked DNP</text><text x="2422.5" y="596.7" font-size="12.5" fill="#000" textLength="137" lengthAdjust="spacingAndGlyphs">Model Bounding Boxes</text><text x="2422.5" y="625.7" font-size="12.5" fill="#000" textLength="36.7" lengthAdjust="spacingAndGlyphs">Values</text><text x="2422.5" y="645.7" font-size="12.5" fill="#000" textLength="63.3" lengthAdjust="spacingAndGlyphs">References</text><text x="2422.5" y="665.7" font-size="12.5" fill="#000" textLength="79.8" lengthAdjust="spacingAndGlyphs">Footprint Text</text><text x="2422.5" y="685.7" font-size="12.5" fill="#000" textLength="119.5" lengthAdjust="spacingAndGlyphs">Off-board Silkscreen</text><text x="2422.5" y="714.7" font-size="12.5" fill="#000" textLength="42.5" lengthAdjust="spacingAndGlyphs">3D Axis</text><text x="2422.5" y="734.7" font-size="12.5" fill="#000" textLength="99.8" lengthAdjust="spacingAndGlyphs">Background Start</text><text x="2422.5" y="754.7" font-size="12.5" fill="#000" textLength="94.7" lengthAdjust="spacingAndGlyphs">Background End</text><text x="2394.5" y="1198.9" font-size="12.5" fill="#000" textLength="148.8" lengthAdjust="spacingAndGlyphs">Use board stackup colors</text><text x="2394.5" y="1223.8" font-size="12.5" fill="#000" textLength="174" lengthAdjust="spacingAndGlyphs">Use PCB editor copper colors</text><text x="2375.6" y="1259.9" font-size="12.5" fill="#000" textLength="106" lengthAdjust="spacingAndGlyphs">Presets (Ctrl+Tab):</text><text x="2375.6" y="1317.9" font-size="12.5" fill="#000" textLength="126" lengthAdjust="spacingAndGlyphs">Viewports (Shift+Tab):</text><text x="2380" y="1287" font-size="12.5" fill="#000" textLength="16" lengthAdjust="spacingAndGlyphs">---</text><text x="2380" y="1345" font-size="12.5" fill="#000" textLength="16" lengthAdjust="spacingAndGlyphs">---</text><text x="2.3" y="1383" font-size="15.4" fill="#000" textLength="141.5" lengthAdjust="spacingAndGlyphs">Last render time 1 ms</text><text x="2126.3" y="1383" font-size="15.4" fill="#000" textLength="46.4" lengthAdjust="spacingAndGlyphs">dx 0.84</text><text x="2266" y="1383" font-size="15.4" fill="#000" textLength="46.4" lengthAdjust="spacingAndGlyphs">dy 0.14</text><text x="2405.7" y="1383" font-size="15.4" fill="#000" textLength="68.5" lengthAdjust="spacingAndGlyphs">zoom 0.75</text></g></svg>
<svg class="ab" style="left:0;top:0;will-change:transform" width="2560" height="1390" viewBox="0 0 2560 1390">
<rect x="785" y="263" width="915" height="914" rx="21" fill="#1d3a2b"/>
<path d="M790,284 Q790,268 806,267.5 L831,267.5 L831,966 L790,966 Z" fill="#42632f"/>
<path d="M790,966 L790,1155 Q790,1172 807,1172 L1679,1172 Q1695,1172 1695,1156 L1695,966 Z" fill="#42632f"/>
<path d="M857.6,405.6 L871,405.6 L871,420.2 L910.5,420.2 L915,424.7 L915,476 L903,476 L903,497.8 L873,497.8 L871,500 L871,511 L864,516 L857.6,516 Z" fill="#42632f"/>
<path d="M1695.5,381 L1665,398 L1665,430 L1659,437.5 L1600,437.5 L1600,500 L1648,548 L1695.5,553 Z" fill="#42632f"/>
<line x1="860" y1="320.7" x2="1693" y2="320.7" stroke="#f4f4f0" stroke-width="2.3" stroke-dasharray="27.5,6.79"/>
<line x1="860" y1="378.75" x2="1693" y2="378.75" stroke="#f4f4f0" stroke-width="2.3" stroke-dasharray="27.5,6.79"/>
<line x1="860" y1="552.9" x2="1693" y2="552.9" stroke="#f4f4f0" stroke-width="2.3" stroke-dasharray="27.5,6.79"/>
<line x1="860" y1="669" x2="1693" y2="669" stroke="#f4f4f0" stroke-width="2.3" stroke-dasharray="27.5,6.79"/>
<line x1="860" y1="727.05" x2="1693" y2="727.05" stroke="#f4f4f0" stroke-width="2.3" stroke-dasharray="27.5,6.79"/>
<line x1="860" y1="785.1" x2="1693" y2="785.1" stroke="#f4f4f0" stroke-width="2.3" stroke-dasharray="27.5,6.79"/>
<line x1="860" y1="843.15" x2="1693" y2="843.15" stroke="#f4f4f0" stroke-width="2.3" stroke-dasharray="27.5,6.79"/>
<line x1="860" y1="901.2" x2="1693" y2="901.2" stroke="#f4f4f0" stroke-width="2.3" stroke-dasharray="27.5,6.79"/>
<line x1="860" y1="959.25" x2="1693" y2="959.25" stroke="#f4f4f0" stroke-width="2.3" stroke-dasharray="27.5,6.79"/>
<path d="M879.5,304 L884.5,309 L884.5,309.4 A5.8,5.8 0 0 0 896.1,309.4 L896.1,274.35 A5.8,5.8 0 0 1 907.7,274.35 L907.7,309.4 A5.8,5.8 0 0 0 919.3,309.4 L919.3,274.35 A5.8,5.8 0 0 1 930.9,274.35 L930.9,309.4 A5.8,5.8 0 0 0 942.5,309.4 L942.5,274.35 A5.8,5.8 0 0 1 954.1,274.35 L954.1,309.4 A5.8,5.8 0 0 0 965.7,309.4 L965.7,274.35 A5.8,5.8 0 0 1 977.3,274.35 L977.3,309.4 A5.8,5.8 0 0 0 988.9,309.4 L988.9,274.35 A5.8,5.8 0 0 1 1000.5,274.35 L1000.5,309.4 A5.8,5.8 0 0 0 1012.1,309.4 L1012.1,274.35 A5.8,5.8 0 0 1 1023.7,274.35 L1023.7,309.4 A5.8,5.8 0 0 0 1035.3,309.4 L1035.3,274.35 A5.8,5.8 0 0 1 1046.9,274.35 L1046.9,309.4 A5.8,5.8 0 0 0 1058.5,309.4 L1058.5,274.35 A5.8,5.8 0 0 1 1070.1,274.35 L1070.1,309.4 A5.8,5.8 0 0 0 1081.7,309.4 L1081.7,274.35 A5.8,5.8 0 0 1 1093.3,274.35 L1093.3,309.4 A5.8,5.8 0 0 0 1104.9,309.4 L1104.9,274.35 A5.8,5.8 0 0 1 1116.5,274.35 L1116.5,309.4 A5.8,5.8 0 0 0 1128.1,309.4 L1128.1,274.35 A5.8,5.8 0 0 1 1139.7,274.35 L1139.7,309.4 A5.8,5.8 0 0 0 1151.3,309.4 L1151.3,274.35 A5.8,5.8 0 0 1 1162.9,274.35 L1162.9,309.4 A5.8,5.8 0 0 0 1174.5,309.4 L1174.5,274.35 A5.8,5.8 0 0 1 1186.1,274.35 L1186.1,309.4 A5.8,5.8 0 0 0 1197.7,309.4 L1197.7,274.35 A5.8,5.8 0 0 1 1209.3,274.35 L1209.3,309.4 A5.8,5.8 0 0 0 1220.9,309.4 L1220.9,274.35 A5.8,5.8 0 0 1 1232.5,274.35 L1232.5,309.4 A5.8,5.8 0 0 0 1244.1,309.4 L1244.1,279.3 M1267.3,297 L1267.3,274.35 A5.8,5.8 0 0 1 1278.9,274.35 L1278.9,309.4 A5.8,5.8 0 0 0 1290.5,309.4 L1290.5,274.35 A5.8,5.8 0 0 1 1302.1,274.35 L1302.1,309.4 A5.8,5.8 0 0 0 1313.7,309.4 L1313.7,274.35 A5.8,5.8 0 0 1 1325.3,274.35 L1325.3,309.4 A5.8,5.8 0 0 0 1336.9,309.4 L1336.9,274.35 A5.8,5.8 0 0 1 1348.5,274.35 L1348.5,309.4 A5.8,5.8 0 0 0 1360.1,309.4 L1360.1,274.35 A5.8,5.8 0 0 1 1371.7,274.35 L1371.7,309.4 A5.8,5.8 0 0 0 1383.3,309.4 L1383.3,274.35 A5.8,5.8 0 0 1 1394.9,274.35 L1394.9,309.4 A5.8,5.8 0 0 0 1406.5,309.4 L1406.5,274.35 A5.8,5.8 0 0 1 1418.1,274.35 L1418.1,309.4 A5.8,5.8 0 0 0 1429.7,309.4 L1429.7,274.35 A5.8,5.8 0 0 1 1441.3,274.35 L1441.3,309.4 A5.8,5.8 0 0 0 1452.9,309.4 L1452.9,274.35 A5.8,5.8 0 0 1 1464.5,274.35 L1464.5,309.4 A5.8,5.8 0 0 0 1476.1,309.4 L1476.1,274.35 A5.8,5.8 0 0 1 1487.7,274.35 L1487.7,309.4 A5.8,5.8 0 0 0 1499.3,309.4 L1499.3,274.35 A5.8,5.8 0 0 1 1510.9,274.35 L1510.9,309.4 A5.8,5.8 0 0 0 1522.5,309.4 L1522.5,274.35 A5.8,5.8 0 0 1 1534.1,274.35 L1534.1,309.4 A5.8,5.8 0 0 0 1545.7,309.4 L1545.7,274.35 A5.8,5.8 0 0 1 1557.3,274.35 L1557.3,309.4 A5.8,5.8 0 0 0 1568.9,309.4 L1568.9,274.35 A5.8,5.8 0 0 1 1580.5,274.35 L1580.5,309.4 A5.8,5.8 0 0 0 1592.1,309.4 L1592.1,274.35 A5.8,5.8 0 0 1 1603.7,274.35 L1603.7,309.4 A5.8,5.8 0 0 0 1615.3,309.4 L1615.3,274.35 A5.8,5.8 0 0 1 1626.9,274.35 L1626.9,309.4 A5.8,5.8 0 0 0 1638.5,309.4 L1638.5,304 L1643.5,300 L1655.5,300" fill="none" stroke="#436431" stroke-width="1.2"/><circle cx="1244.1" cy="279.3" r="1.5" fill="#b8b8d8"/><circle cx="1251.1" cy="279.3" r="1.5" fill="#b8b8d8"/><circle cx="1267.3" cy="297" r="1.5" fill="#b8b8d8"/><circle cx="1267.3" cy="304.5" r="1.5" fill="#b8b8d8"/>
<path d="M879.5,362.05 L884.5,367.05 L884.5,367.45 A5.8,5.8 0 0 0 896.1,367.45 L896.1,332.4 A5.8,5.8 0 0 1 907.7,332.4 L907.7,367.45 A5.8,5.8 0 0 0 919.3,367.45 L919.3,332.4 A5.8,5.8 0 0 1 930.9,332.4 L930.9,367.45 A5.8,5.8 0 0 0 942.5,367.45 L942.5,332.4 A5.8,5.8 0 0 1 954.1,332.4 L954.1,367.45 A5.8,5.8 0 0 0 965.7,367.45 L965.7,332.4 A5.8,5.8 0 0 1 977.3,332.4 L977.3,367.45 A5.8,5.8 0 0 0 988.9,367.45 L988.9,332.4 A5.8,5.8 0 0 1 1000.5,332.4 L1000.5,367.45 A5.8,5.8 0 0 0 1012.1,367.45 L1012.1,332.4 A5.8,5.8 0 0 1 1023.7,332.4 L1023.7,367.45 A5.8,5.8 0 0 0 1035.3,367.45 L1035.3,332.4 A5.8,5.8 0 0 1 1046.9,332.4 L1046.9,367.45 A5.8,5.8 0 0 0 1058.5,367.45 L1058.5,332.4 A5.8,5.8 0 0 1 1070.1,332.4 L1070.1,367.45 A5.8,5.8 0 0 0 1081.7,367.45 L1081.7,332.4 A5.8,5.8 0 0 1 1093.3,332.4 L1093.3,367.45 A5.8,5.8 0 0 0 1104.9,367.45 L1104.9,332.4 A5.8,5.8 0 0 1 1116.5,332.4 L1116.5,367.45 A5.8,5.8 0 0 0 1128.1,367.45 L1128.1,332.4 A5.8,5.8 0 0 1 1139.7,332.4 L1139.7,367.45 A5.8,5.8 0 0 0 1151.3,367.45 L1151.3,332.4 A5.8,5.8 0 0 1 1162.9,332.4 L1162.9,367.45 A5.8,5.8 0 0 0 1174.5,367.45 L1174.5,332.4 A5.8,5.8 0 0 1 1186.1,332.4 L1186.1,367.45 A5.8,5.8 0 0 0 1197.7,367.45 L1197.7,332.4 A5.8,5.8 0 0 1 1209.3,332.4 L1209.3,367.45 A5.8,5.8 0 0 0 1220.9,367.45 L1220.9,332.4 A5.8,5.8 0 0 1 1232.5,332.4 L1232.5,367.45 A5.8,5.8 0 0 0 1244.1,367.45 L1244.1,337.35 M1267.3,355.05 L1267.3,332.4 A5.8,5.8 0 0 1 1278.9,332.4 L1278.9,367.45 A5.8,5.8 0 0 0 1290.5,367.45 L1290.5,332.4 A5.8,5.8 0 0 1 1302.1,332.4 L1302.1,367.45 A5.8,5.8 0 0 0 1313.7,367.45 L1313.7,332.4 A5.8,5.8 0 0 1 1325.3,332.4 L1325.3,367.45 A5.8,5.8 0 0 0 1336.9,367.45 L1336.9,332.4 A5.8,5.8 0 0 1 1348.5,332.4 L1348.5,367.45 A5.8,5.8 0 0 0 1360.1,367.45 L1360.1,332.4 A5.8,5.8 0 0 1 1371.7,332.4 L1371.7,367.45 A5.8,5.8 0 0 0 1383.3,367.45 L1383.3,332.4 A5.8,5.8 0 0 1 1394.9,332.4 L1394.9,367.45 A5.8,5.8 0 0 0 1406.5,367.45 L1406.5,332.4 A5.8,5.8 0 0 1 1418.1,332.4 L1418.1,367.45 A5.8,5.8 0 0 0 1429.7,367.45 L1429.7,332.4 A5.8,5.8 0 0 1 1441.3,332.4 L1441.3,367.45 A5.8,5.8 0 0 0 1452.9,367.45 L1452.9,332.4 A5.8,5.8 0 0 1 1464.5,332.4 L1464.5,367.45 A5.8,5.8 0 0 0 1476.1,367.45 L1476.1,332.4 A5.8,5.8 0 0 1 1487.7,332.4 L1487.7,367.45 A5.8,5.8 0 0 0 1499.3,367.45 L1499.3,332.4 A5.8,5.8 0 0 1 1510.9,332.4 L1510.9,367.45 A5.8,5.8 0 0 0 1522.5,367.45 L1522.5,332.4 A5.8,5.8 0 0 1 1534.1,332.4 L1534.1,367.45 A5.8,5.8 0 0 0 1545.7,367.45 L1545.7,332.4 A5.8,5.8 0 0 1 1557.3,332.4 L1557.3,367.45 A5.8,5.8 0 0 0 1568.9,367.45 L1568.9,332.4 A5.8,5.8 0 0 1 1580.5,332.4 L1580.5,367.45 A5.8,5.8 0 0 0 1592.1,367.45 L1592.1,332.4 A5.8,5.8 0 0 1 1603.7,332.4 L1603.7,367.45 A5.8,5.8 0 0 0 1615.3,367.45 L1615.3,332.4 A5.8,5.8 0 0 1 1626.9,332.4 L1626.9,367.45 A5.8,5.8 0 0 0 1638.5,367.45 L1638.5,362.05 L1643.5,358.05 L1655.5,358.05" fill="none" stroke="#436431" stroke-width="1.2"/><circle cx="1244.1" cy="337.35" r="1.5" fill="#b8b8d8"/><circle cx="1267.3" cy="355.05" r="1.5" fill="#b8b8d8"/>
<path d="M879.5,768.4 L884.5,773.4 L884.5,773.8 A5.8,5.8 0 0 0 896.1,773.8 L896.1,738.75 A5.8,5.8 0 0 1 907.7,738.75 L907.7,773.8 A5.8,5.8 0 0 0 919.3,773.8 L919.3,738.75 A5.8,5.8 0 0 1 930.9,738.75 L930.9,773.8 A5.8,5.8 0 0 0 942.5,773.8 L942.5,738.75 A5.8,5.8 0 0 1 954.1,738.75 L954.1,773.8 A5.8,5.8 0 0 0 965.7,773.8 L965.7,738.75 A5.8,5.8 0 0 1 977.3,738.75 L977.3,773.8 A5.8,5.8 0 0 0 988.9,773.8 L988.9,738.75 A5.8,5.8 0 0 1 1000.5,738.75 L1000.5,773.8 A5.8,5.8 0 0 0 1012.1,773.8 L1012.1,738.75 A5.8,5.8 0 0 1 1023.7,738.75 L1023.7,773.8 A5.8,5.8 0 0 0 1035.3,773.8 L1035.3,738.75 A5.8,5.8 0 0 1 1046.9,738.75 L1046.9,773.8 A5.8,5.8 0 0 0 1058.5,773.8 L1058.5,738.75 A5.8,5.8 0 0 1 1070.1,738.75 L1070.1,773.8 A5.8,5.8 0 0 0 1081.7,773.8 L1081.7,738.75 A5.8,5.8 0 0 1 1093.3,738.75 L1093.3,773.8 A5.8,5.8 0 0 0 1104.9,773.8 L1104.9,738.75 A5.8,5.8 0 0 1 1116.5,738.75 L1116.5,773.8 A5.8,5.8 0 0 0 1128.1,773.8 L1128.1,738.75 A5.8,5.8 0 0 1 1139.7,738.75 L1139.7,773.8 A5.8,5.8 0 0 0 1151.3,773.8 L1151.3,738.75 A5.8,5.8 0 0 1 1162.9,738.75 L1162.9,773.8 A5.8,5.8 0 0 0 1174.5,773.8 L1174.5,738.75 A5.8,5.8 0 0 1 1186.1,738.75 L1186.1,773.8 A5.8,5.8 0 0 0 1197.7,773.8 L1197.7,738.75 A5.8,5.8 0 0 1 1209.3,738.75 L1209.3,773.8 A5.8,5.8 0 0 0 1220.9,773.8 L1220.9,738.75 A5.8,5.8 0 0 1 1232.5,738.75 L1232.5,773.8 A5.8,5.8 0 0 0 1244.1,773.8 L1244.1,738.75 A5.8,5.8 0 0 1 1255.7,738.75 L1255.7,773.8 A5.8,5.8 0 0 0 1267.3,773.8 L1267.3,738.75 A5.8,5.8 0 0 1 1278.9,738.75 L1278.9,773.8 A5.8,5.8 0 0 0 1290.5,773.8 L1290.5,738.75 A5.8,5.8 0 0 1 1302.1,738.75 L1302.1,773.8 A5.8,5.8 0 0 0 1313.7,773.8 L1313.7,738.75 A5.8,5.8 0 0 1 1325.3,738.75 L1325.3,773.8 A5.8,5.8 0 0 0 1336.9,773.8 L1336.9,738.75 A5.8,5.8 0 0 1 1348.5,738.75 L1348.5,773.8 A5.8,5.8 0 0 0 1360.1,773.8 L1360.1,738.75 A5.8,5.8 0 0 1 1371.7,738.75 L1371.7,773.8 A5.8,5.8 0 0 0 1383.3,773.8 L1383.3,738.75 A5.8,5.8 0 0 1 1394.9,738.75 L1394.9,773.8 A5.8,5.8 0 0 0 1406.5,773.8 L1406.5,738.75 A5.8,5.8 0 0 1 1418.1,738.75 L1418.1,773.8 A5.8,5.8 0 0 0 1429.7,773.8 L1429.7,738.75 A5.8,5.8 0 0 1 1441.3,738.75 L1441.3,773.8 A5.8,5.8 0 0 0 1452.9,773.8 L1452.9,738.75 A5.8,5.8 0 0 1 1464.5,738.75 L1464.5,773.8 A5.8,5.8 0 0 0 1476.1,773.8 L1476.1,738.75 A5.8,5.8 0 0 1 1487.7,738.75 L1487.7,773.8 A5.8,5.8 0 0 0 1499.3,773.8 L1499.3,738.75 A5.8,5.8 0 0 1 1510.9,738.75 L1510.9,773.8 A5.8,5.8 0 0 0 1522.5,773.8 L1522.5,738.75 A5.8,5.8 0 0 1 1534.1,738.75 L1534.1,773.8 A5.8,5.8 0 0 0 1545.7,773.8 L1545.7,738.75 A5.8,5.8 0 0 1 1557.3,738.75 L1557.3,773.8 A5.8,5.8 0 0 0 1568.9,773.8 L1568.9,738.75 A5.8,5.8 0 0 1 1580.5,738.75 L1580.5,773.8 A5.8,5.8 0 0 0 1592.1,773.8 L1592.1,738.75 A5.8,5.8 0 0 1 1603.7,738.75 L1603.7,773.8 A5.8,5.8 0 0 0 1615.3,773.8 L1615.3,738.75 A5.8,5.8 0 0 1 1626.9,738.75 L1626.9,773.8 A5.8,5.8 0 0 0 1638.5,773.8 L1638.5,768.4 L1643.5,764.4 L1655.5,764.4" fill="none" stroke="#436431" stroke-width="1.2"/>
<path d="M879.5,826.45 L884.5,831.45 L884.5,831.85 A5.8,5.8 0 0 0 896.1,831.85 L896.1,796.8 A5.8,5.8 0 0 1 907.7,796.8 L907.7,831.85 A5.8,5.8 0 0 0 919.3,831.85 L919.3,796.8 A5.8,5.8 0 0 1 930.9,796.8 L930.9,831.85 A5.8,5.8 0 0 0 942.5,831.85 L942.5,796.8 A5.8,5.8 0 0 1 954.1,796.8 L954.1,831.85 A5.8,5.8 0 0 0 965.7,831.85 L965.7,796.8 A5.8,5.8 0 0 1 977.3,796.8 L977.3,831.85 A5.8,5.8 0 0 0 988.9,831.85 L988.9,796.8 A5.8,5.8 0 0 1 1000.5,796.8 L1000.5,831.85 A5.8,5.8 0 0 0 1012.1,831.85 L1012.1,796.8 A5.8,5.8 0 0 1 1023.7,796.8 L1023.7,831.85 A5.8,5.8 0 0 0 1035.3,831.85 L1035.3,796.8 A5.8,5.8 0 0 1 1046.9,796.8 L1046.9,831.85 A5.8,5.8 0 0 0 1058.5,831.85 L1058.5,796.8 A5.8,5.8 0 0 1 1070.1,796.8 L1070.1,831.85 A5.8,5.8 0 0 0 1081.7,831.85 L1081.7,796.8 A5.8,5.8 0 0 1 1093.3,796.8 L1093.3,831.85 A5.8,5.8 0 0 0 1104.9,831.85 L1104.9,796.8 A5.8,5.8 0 0 1 1116.5,796.8 L1116.5,831.85 A5.8,5.8 0 0 0 1128.1,831.85 L1128.1,796.8 A5.8,5.8 0 0 1 1139.7,796.8 L1139.7,831.85 A5.8,5.8 0 0 0 1151.3,831.85 L1151.3,796.8 A5.8,5.8 0 0 1 1162.9,796.8 L1162.9,831.85 A5.8,5.8 0 0 0 1174.5,831.85 L1174.5,796.8 A5.8,5.8 0 0 1 1186.1,796.8 L1186.1,831.85 A5.8,5.8 0 0 0 1197.7,831.85 L1197.7,796.8 A5.8,5.8 0 0 1 1209.3,796.8 L1209.3,831.85 A5.8,5.8 0 0 0 1220.9,831.85 L1220.9,796.8 A5.8,5.8 0 0 1 1232.5,796.8 L1232.5,831.85 A5.8,5.8 0 0 0 1244.1,831.85 L1244.1,796.8 A5.8,5.8 0 0 1 1255.7,796.8 L1255.7,831.85 A5.8,5.8 0 0 0 1267.3,831.85 L1267.3,796.8 A5.8,5.8 0 0 1 1278.9,796.8 L1278.9,831.85 A5.8,5.8 0 0 0 1290.5,831.85 L1290.5,796.8 A5.8,5.8 0 0 1 1302.1,796.8 L1302.1,831.85 A5.8,5.8 0 0 0 1313.7,831.85 L1313.7,796.8 A5.8,5.8 0 0 1 1325.3,796.8 L1325.3,831.85 A5.8,5.8 0 0 0 1336.9,831.85 L1336.9,796.8 A5.8,5.8 0 0 1 1348.5,796.8 L1348.5,831.85 A5.8,5.8 0 0 0 1360.1,831.85 L1360.1,796.8 A5.8,5.8 0 0 1 1371.7,796.8 L1371.7,831.85 A5.8,5.8 0 0 0 1383.3,831.85 L1383.3,796.8 A5.8,5.8 0 0 1 1394.9,796.8 L1394.9,831.85 A5.8,5.8 0 0 0 1406.5,831.85 L1406.5,796.8 A5.8,5.8 0 0 1 1418.1,796.8 L1418.1,831.85 A5.8,5.8 0 0 0 1429.7,831.85 L1429.7,796.8 A5.8,5.8 0 0 1 1441.3,796.8 L1441.3,831.85 A5.8,5.8 0 0 0 1452.9,831.85 L1452.9,796.8 A5.8,5.8 0 0 1 1464.5,796.8 L1464.5,831.85 A5.8,5.8 0 0 0 1476.1,831.85 L1476.1,796.8 A5.8,5.8 0 0 1 1487.7,796.8 L1487.7,831.85 A5.8,5.8 0 0 0 1499.3,831.85 L1499.3,796.8 A5.8,5.8 0 0 1 1510.9,796.8 L1510.9,831.85 A5.8,5.8 0 0 0 1522.5,831.85 L1522.5,796.8 A5.8,5.8 0 0 1 1534.1,796.8 L1534.1,831.85 A5.8,5.8 0 0 0 1545.7,831.85 L1545.7,796.8 A5.8,5.8 0 0 1 1557.3,796.8 L1557.3,831.85 A5.8,5.8 0 0 0 1568.9,831.85 L1568.9,796.8 A5.8,5.8 0 0 1 1580.5,796.8 L1580.5,831.85 A5.8,5.8 0 0 0 1592.1,831.85 L1592.1,796.8 A5.8,5.8 0 0 1 1603.7,796.8 L1603.7,831.85 A5.8,5.8 0 0 0 1615.3,831.85 L1615.3,796.8 A5.8,5.8 0 0 1 1626.9,796.8 L1626.9,831.85 A5.8,5.8 0 0 0 1638.5,831.85 L1638.5,826.45 L1643.5,822.45 L1655.5,822.45" fill="none" stroke="#436431" stroke-width="1.2"/>
<path d="M879.5,942.55 L884.5,947.55 L884.5,947.95 A5.8,5.8 0 0 0 896.1,947.95 L896.1,912.9 A5.8,5.8 0 0 1 907.7,912.9 L907.7,947.95 A5.8,5.8 0 0 0 919.3,947.95 L919.3,912.9 A5.8,5.8 0 0 1 930.9,912.9 L930.9,947.95 A5.8,5.8 0 0 0 942.5,947.95 L942.5,912.9 A5.8,5.8 0 0 1 954.1,912.9 L954.1,947.95 A5.8,5.8 0 0 0 965.7,947.95 L965.7,912.9 A5.8,5.8 0 0 1 977.3,912.9 L977.3,947.95 A5.8,5.8 0 0 0 988.9,947.95 L988.9,912.9 A5.8,5.8 0 0 1 1000.5,912.9 L1000.5,947.95 A5.8,5.8 0 0 0 1012.1,947.95 L1012.1,912.9 A5.8,5.8 0 0 1 1023.7,912.9 L1023.7,947.95 A5.8,5.8 0 0 0 1035.3,947.95 L1035.3,912.9 A5.8,5.8 0 0 1 1046.9,912.9 L1046.9,947.95 A5.8,5.8 0 0 0 1058.5,947.95 L1058.5,912.9 A5.8,5.8 0 0 1 1070.1,912.9 L1070.1,947.95 A5.8,5.8 0 0 0 1081.7,947.95 L1081.7,912.9 A5.8,5.8 0 0 1 1093.3,912.9 L1093.3,947.95 A5.8,5.8 0 0 0 1104.9,947.95 L1104.9,912.9 A5.8,5.8 0 0 1 1116.5,912.9 L1116.5,947.95 A5.8,5.8 0 0 0 1128.1,947.95 L1128.1,912.9 A5.8,5.8 0 0 1 1139.7,912.9 L1139.7,947.95 A5.8,5.8 0 0 0 1151.3,947.95 L1151.3,912.9 A5.8,5.8 0 0 1 1162.9,912.9 L1162.9,947.95 A5.8,5.8 0 0 0 1174.5,947.95 L1174.5,912.9 A5.8,5.8 0 0 1 1186.1,912.9 L1186.1,947.95 A5.8,5.8 0 0 0 1197.7,947.95 L1197.7,912.9 A5.8,5.8 0 0 1 1209.3,912.9 L1209.3,947.95 A5.8,5.8 0 0 0 1220.9,947.95 L1220.9,912.9 A5.8,5.8 0 0 1 1232.5,912.9 L1232.5,947.95 A5.8,5.8 0 0 0 1244.1,947.95 L1244.1,912.9 A5.8,5.8 0 0 1 1255.7,912.9 L1255.7,947.95 A5.8,5.8 0 0 0 1267.3,947.95 L1267.3,912.9 A5.8,5.8 0 0 1 1278.9,912.9 L1278.9,947.95 A5.8,5.8 0 0 0 1290.5,947.95 L1290.5,912.9 A5.8,5.8 0 0 1 1302.1,912.9 L1302.1,947.95 A5.8,5.8 0 0 0 1313.7,947.95 L1313.7,912.9 A5.8,5.8 0 0 1 1325.3,912.9 L1325.3,947.95 A5.8,5.8 0 0 0 1336.9,947.95 L1336.9,912.9 A5.8,5.8 0 0 1 1348.5,912.9 L1348.5,947.95 A5.8,5.8 0 0 0 1360.1,947.95 L1360.1,912.9 A5.8,5.8 0 0 1 1371.7,912.9 L1371.7,947.95 A5.8,5.8 0 0 0 1383.3,947.95 L1383.3,912.9 A5.8,5.8 0 0 1 1394.9,912.9 L1394.9,947.95 A5.8,5.8 0 0 0 1406.5,947.95 L1406.5,912.9 A5.8,5.8 0 0 1 1418.1,912.9 L1418.1,947.95 A5.8,5.8 0 0 0 1429.7,947.95 L1429.7,912.9 A5.8,5.8 0 0 1 1441.3,912.9 L1441.3,947.95 A5.8,5.8 0 0 0 1452.9,947.95 L1452.9,912.9 A5.8,5.8 0 0 1 1464.5,912.9 L1464.5,947.95 A5.8,5.8 0 0 0 1476.1,947.95 L1476.1,912.9 A5.8,5.8 0 0 1 1487.7,912.9 L1487.7,947.95 A5.8,5.8 0 0 0 1499.3,947.95 L1499.3,912.9 A5.8,5.8 0 0 1 1510.9,912.9 L1510.9,947.95 A5.8,5.8 0 0 0 1522.5,947.95 L1522.5,912.9 A5.8,5.8 0 0 1 1534.1,912.9 L1534.1,947.95 A5.8,5.8 0 0 0 1545.7,947.95 L1545.7,912.9 A5.8,5.8 0 0 1 1557.3,912.9 L1557.3,947.95 A5.8,5.8 0 0 0 1568.9,947.95 L1568.9,912.9 A5.8,5.8 0 0 1 1580.5,912.9 L1580.5,947.95 A5.8,5.8 0 0 0 1592.1,947.95 L1592.1,912.9 A5.8,5.8 0 0 1 1603.7,912.9 L1603.7,947.95 A5.8,5.8 0 0 0 1615.3,947.95 L1615.3,912.9 A5.8,5.8 0 0 1 1626.9,912.9 L1626.9,947.95 A5.8,5.8 0 0 0 1638.5,947.95 L1638.5,942.55 L1643.5,938.55 L1655.5,938.55" fill="none" stroke="#436431" stroke-width="1.2"/>
<path d="M879.5,884.5 L884.5,889.5 L884.5,889.9 A5.8,5.8 0 0 0 896.1,889.9 L896.1,854.85 A5.8,5.8 0 0 1 907.7,854.85 L907.7,889.9 A5.8,5.8 0 0 0 919.3,889.9 L919.3,854.85 A5.8,5.8 0 0 1 930.9,854.85 L930.9,889.9 A5.8,5.8 0 0 0 942.5,889.9 L942.5,854.85 A5.8,5.8 0 0 1 954.1,854.85 L954.1,889.9 A5.8,5.8 0 0 0 965.7,889.9 L965.7,854.85 A5.8,5.8 0 0 1 977.3,854.85 L977.3,889.9 A5.8,5.8 0 0 0 988.9,889.9 L988.9,854.85 A5.8,5.8 0 0 1 1000.5,854.85 L1000.5,889.9 A5.8,5.8 0 0 0 1012.1,889.9 L1012.1,854.85 A5.8,5.8 0 0 1 1023.7,854.85 L1023.7,889.9 A5.8,5.8 0 0 0 1035.3,889.9 L1035.3,854.85 A5.8,5.8 0 0 1 1046.9,854.85 L1046.9,889.9 A5.8,5.8 0 0 0 1058.5,889.9 L1058.5,854.85 A5.8,5.8 0 0 1 1070.1,854.85 L1070.1,889.9 A5.8,5.8 0 0 0 1081.7,889.9 L1081.7,854.85 A5.8,5.8 0 0 1 1093.3,854.85 L1093.3,889.9 A5.8,5.8 0 0 0 1104.9,889.9 L1104.9,854.85 A5.8,5.8 0 0 1 1116.5,854.85 L1116.5,889.9 A5.8,5.8 0 0 0 1128.1,889.9 L1128.1,854.85 A5.8,5.8 0 0 1 1139.7,854.85 L1139.7,889.9 A5.8,5.8 0 0 0 1151.3,889.9 L1151.3,854.85 A5.8,5.8 0 0 1 1162.9,854.85 L1162.9,889.9 A5.8,5.8 0 0 0 1174.5,889.9 L1174.5,854.85 A5.8,5.8 0 0 1 1186.1,854.85 L1186.1,889.9 A5.8,5.8 0 0 0 1197.7,889.9 L1197.7,854.85 A5.8,5.8 0 0 1 1209.3,854.85 L1209.3,889.9 A5.8,5.8 0 0 0 1220.9,889.9 L1220.9,854.85 A5.8,5.8 0 0 1 1232.5,854.85 L1232.5,889.9 A5.8,5.8 0 0 0 1244.1,889.9 L1244.1,854.85 A5.8,5.8 0 0 1 1255.7,854.85 L1255.7,889.9 A5.8,5.8 0 0 0 1267.3,889.9 L1267.3,854.85 A5.8,5.8 0 0 1 1278.9,854.85 L1278.9,889.9 A5.8,5.8 0 0 0 1290.5,889.9 L1290.5,854.85 A5.8,5.8 0 0 1 1302.1,854.85 L1302.1,889.9 A5.8,5.8 0 0 0 1313.7,889.9 L1313.7,854.85 A5.8,5.8 0 0 1 1325.3,854.85 L1325.3,889.9 A5.8,5.8 0 0 0 1336.9,889.9 L1336.9,854.85 A5.8,5.8 0 0 1 1348.5,854.85 L1348.5,889.9 A5.8,5.8 0 0 0 1360.1,889.9 L1360.1,854.85 A5.8,5.8 0 0 1 1371.7,854.85 L1371.7,889.9 A5.8,5.8 0 0 0 1383.3,889.9 L1383.3,854.85 A5.8,5.8 0 0 1 1394.9,854.85 L1394.9,889.9 A5.8,5.8 0 0 0 1406.5,889.9 L1406.5,854.85 A5.8,5.8 0 0 1 1418.1,854.85 L1418.1,889.9 A5.8,5.8 0 0 0 1429.7,889.9 L1429.7,854.85 A5.8,5.8 0 0 1 1441.3,854.85 L1441.3,889.9 A5.8,5.8 0 0 0 1452.9,889.9 L1452.9,854.85 A5.8,5.8 0 0 1 1464.5,854.85 L1464.5,889.9 A5.8,5.8 0 0 0 1476.1,889.9 L1476.1,854.85 A5.8,5.8 0 0 1 1487.7,854.85 L1487.7,889.9 A5.8,5.8 0 0 0 1499.3,889.9 L1499.3,854.85 A5.8,5.8 0 0 1 1510.9,854.85 L1510.9,889.9 A5.8,5.8 0 0 0 1522.5,889.9 L1522.5,854.85 A5.8,5.8 0 0 1 1534.1,854.85 L1534.1,889.9 A5.8,5.8 0 0 0 1545.7,889.9 L1545.7,854.85 A5.8,5.8 0 0 1 1557.3,854.85 L1557.3,889.9 A5.8,5.8 0 0 0 1568.9,889.9 L1568.9,854.85 A5.8,5.8 0 0 1 1580.5,854.85 L1580.5,889.9 A5.8,5.8 0 0 0 1592.1,889.9 L1592.1,854.85 A5.8,5.8 0 0 1 1603.7,854.85 L1603.7,889.9 A5.8,5.8 0 0 0 1615.3,889.9 L1615.3,854.85 A5.8,5.8 0 0 1 1626.9,854.85 L1626.9,889.9 A5.8,5.8 0 0 0 1638.5,889.9 L1638.5,884.5 L1643.5,880.5 L1655.5,880.5" fill="none" stroke="#436431" stroke-width="1.2"/>
<path d="M1654.5,880.5 H1672" stroke="#436431" stroke-width="1.2"/>
<path d="M879.5,710.35 L884.5,715.35 L884.5,715.75 A5.8,5.8 0 0 0 896.1,715.75 L896.1,680.7 A5.8,5.8 0 0 1 907.7,680.7 L907.7,715.75 A5.8,5.8 0 0 0 919.3,715.75 L919.3,680.7 A5.8,5.8 0 0 1 930.9,680.7 L930.9,715.75 A5.8,5.8 0 0 0 942.5,715.75 L942.5,680.7 A5.8,5.8 0 0 1 954.1,680.7 L954.1,715.75 A5.8,5.8 0 0 0 965.7,715.75 L965.7,680.7 A5.8,5.8 0 0 1 977.3,680.7 L977.3,715.75 A5.8,5.8 0 0 0 988.9,715.75 L988.9,680.7 A5.8,5.8 0 0 1 1000.5,680.7 L1000.5,715.75 A5.8,5.8 0 0 0 1012.1,715.75 L1012.1,680.7 A5.8,5.8 0 0 1 1023.7,680.7 L1023.7,715.75 A5.8,5.8 0 0 0 1035.3,715.75 L1035.3,680.7 A5.8,5.8 0 0 1 1046.9,680.7 L1046.9,715.75 A5.8,5.8 0 0 0 1058.5,715.75 L1058.5,680.7 A5.8,5.8 0 0 1 1070.1,680.7 L1070.1,715.75 A5.8,5.8 0 0 0 1081.7,715.75 L1081.7,680.7 A5.8,5.8 0 0 1 1093.3,680.7 L1093.3,715.75 A5.8,5.8 0 0 0 1104.9,715.75 L1104.9,680.7 A5.8,5.8 0 0 1 1116.5,680.7 L1116.5,715.75 A5.8,5.8 0 0 0 1128.1,715.75 L1128.1,680.7 A5.8,5.8 0 0 1 1139.7,680.7 L1139.7,715.75 A5.8,5.8 0 0 0 1151.3,715.75 L1151.3,680.7 A5.8,5.8 0 0 1 1162.9,680.7 L1162.9,715.75 A5.8,5.8 0 0 0 1174.5,715.75 L1174.5,680.7 A5.8,5.8 0 0 1 1186.1,680.7 L1186.1,715.75 A5.8,5.8 0 0 0 1197.7,715.75 L1197.7,680.7 A5.8,5.8 0 0 1 1209.3,680.7 L1209.3,715.75 A5.8,5.8 0 0 0 1220.9,715.75 L1220.9,680.7 A5.8,5.8 0 0 1 1232.5,680.7 L1232.5,715.75 A5.8,5.8 0 0 0 1244.1,715.75 L1244.1,680.7 A5.8,5.8 0 0 1 1255.7,680.7 L1255.7,715.75 A5.8,5.8 0 0 0 1267.3,715.75 L1267.3,680.7 A5.8,5.8 0 0 1 1278.9,680.7 L1278.9,715.75 A5.8,5.8 0 0 0 1290.5,715.75 L1290.5,680.7 A5.8,5.8 0 0 1 1302.1,680.7 L1302.1,715.75 A5.8,5.8 0 0 0 1313.7,715.75 L1313.7,680.7 A5.8,5.8 0 0 1 1325.3,680.7 L1325.3,715.75 A5.8,5.8 0 0 0 1336.9,715.75 L1336.9,680.7 A5.8,5.8 0 0 1 1348.5,680.7 L1348.5,715.75 A5.8,5.8 0 0 0 1360.1,715.75 L1360.1,680.7 A5.8,5.8 0 0 1 1371.7,680.7 L1371.7,715.75 A5.8,5.8 0 0 0 1383.3,715.75 L1383.3,680.7 A5.8,5.8 0 0 1 1394.9,680.7 L1394.9,715.75 A5.8,5.8 0 0 0 1406.5,715.75 L1406.5,680.7 A5.8,5.8 0 0 1 1418.1,680.7 L1418.1,715.75 A5.8,5.8 0 0 0 1429.7,715.75 L1429.7,680.7 A5.8,5.8 0 0 1 1441.3,680.7 L1441.3,715.75 A5.8,5.8 0 0 0 1452.9,715.75 L1452.9,680.7 A5.8,5.8 0 0 1 1464.5,680.7 L1464.5,715.75 A5.8,5.8 0 0 0 1476.1,715.75 L1476.1,680.7 A5.8,5.8 0 0 1 1487.7,680.7 L1487.7,715.75 A5.8,5.8 0 0 0 1499.3,715.75 L1499.3,680.7 A5.8,5.8 0 0 1 1510.9,680.7 L1510.9,715.75 A5.8,5.8 0 0 0 1522.5,715.75 L1522.5,680.7 A5.8,5.8 0 0 1 1534.1,680.7 L1534.1,715.75 A5.8,5.8 0 0 0 1545.7,715.75 L1545.7,680.7 A5.8,5.8 0 0 1 1557.3,680.7 L1557.3,715.75 A5.8,5.8 0 0 0 1568.9,715.75 L1568.9,680.7 A5.8,5.8 0 0 1 1580.5,680.7 L1580.5,715.75 A5.8,5.8 0 0 0 1592.1,715.75 L1592.1,680.7 A5.8,5.8 0 0 1 1603.7,680.7 L1603.7,689.35 L1608.7,697.95 L1620.7,697.95" fill="none" stroke="#436431" stroke-width="1.2"/>
<path d="M1620,697.95 H1636 L1652,684.5" fill="none" stroke="#436431" stroke-width="1.2"/>
<path d="M875,513 L875,506 Q875,500.8 880,500.8 L891,500.8 Q896.3,500.8 896.3,506 L896.3,518 M879,472.6 L902.5,472.6 Q908.2,472.6 908.2,478 L908.2,518 M879,415.7 L910.5,415.7 L919.6,424.6 L919.6,518 M1615.2,413 L1615.2,429.2 L1620.9,434.4 L1654.6,434.4 L1660.4,430.5 L1660.4,420 M1603.8,413 L1603.8,456.4 L1620.9,472.6 L1655,472.6 M1591.9,413 L1591.9,499.8 L1624.8,530.9 L1655,530.9" fill="none" stroke="#1d3a2b" stroke-width="5"/>
<path d="M875,513 L875,506 Q875,500.8 880,500.8 L891,500.8 Q896.3,500.8 896.3,506 L896.3,518 M879,472.6 L902.5,472.6 Q908.2,472.6 908.2,478 L908.2,518 M879,415.7 L910.5,415.7 L919.6,424.6 L919.6,518 M1615.2,413 L1615.2,429.2 L1620.9,434.4 L1654.6,434.4 L1660.4,430.5 L1660.4,420 M1603.8,413 L1603.8,456.4 L1620.9,472.6 L1655,472.6 M1591.9,413 L1591.9,499.8 L1624.8,530.9 L1655,530.9" fill="none" stroke="#436431" stroke-width="1.2"/>
<path d="M902.2,494.7 V518 M913.8,494.7 V518 M1609.4,436.3 V413 M1597.8,494.6 V413" fill="none" stroke="#1d3a2b" stroke-width="6.5"/>
<path d="M902.2,494.7 V518 M913.8,494.7 V518 M1609.4,436.3 V413 M1597.8,494.6 V413" fill="none" stroke="#436431" stroke-width="3.4"/>
<path d="M919.6,517.3 L919.6,517.3 A5.7,5.7 0 0 0 931,517.3 L931,413.4 A29.1,29.1 0 0 1 988.8,413.4 L988.8,517.3 A5.7,5.7 0 0 0 1000.6,517.3 L1000.6,413.4 A29.1,29.1 0 0 1 1058.4,413.4 L1058.4,517.3 A5.7,5.7 0 0 0 1070.2,517.3 L1070.2,413.4 A29.1,29.1 0 0 1 1128,413.4 L1128,517.3 A5.7,5.7 0 0 0 1139.8,517.3 L1139.8,413.4 A29.1,29.1 0 0 1 1197.6,413.4 L1197.6,517.3 A5.7,5.7 0 0 0 1209.4,517.3 L1209.4,413.4 A29.1,29.1 0 0 1 1267.2,413.4 L1267.2,517.3 A5.7,5.7 0 0 0 1279,517.3 L1279,413.4 A29.1,29.1 0 0 1 1336.8,413.4 L1336.8,517.3 A5.7,5.7 0 0 0 1348.6,517.3 L1348.6,413.4 A29.1,29.1 0 0 1 1406.4,413.4 L1406.4,517.3 A5.7,5.7 0 0 0 1418.2,517.3 L1418.2,413.4 A29.1,29.1 0 0 1 1476,413.4 L1476,517.3 A5.7,5.7 0 0 0 1487.8,517.3 L1487.8,413.4 A29.1,29.1 0 0 1 1545.6,413.4 L1545.6,517.3 A5.7,5.7 0 0 0 1557.4,517.3 L1557.4,413.4 A29.1,29.1 0 0 1 1615.2,413.4 L1615.2,413.4" fill="none" stroke="#436431" stroke-width="1.5"/>
<path d="M913.8,517.3 L913.8,517.3 A11.5,11.5 0 0 0 936.8,517.3 L936.8,413.4 A23.3,23.3 0 0 1 983,413.4 L983,517.3 A11.5,11.5 0 0 0 1006.4,517.3 L1006.4,413.4 A23.3,23.3 0 0 1 1052.6,413.4 L1052.6,517.3 A11.5,11.5 0 0 0 1076,517.3 L1076,413.4 A23.3,23.3 0 0 1 1122.2,413.4 L1122.2,517.3 A11.5,11.5 0 0 0 1145.6,517.3 L1145.6,413.4 A23.3,23.3 0 0 1 1191.8,413.4 L1191.8,517.3 A11.5,11.5 0 0 0 1215.2,517.3 L1215.2,413.4 A23.3,23.3 0 0 1 1261.4,413.4 L1261.4,517.3 A11.5,11.5 0 0 0 1284.8,517.3 L1284.8,413.4 A23.3,23.3 0 0 1 1331,413.4 L1331,517.3 A11.5,11.5 0 0 0 1354.4,517.3 L1354.4,413.4 A23.3,23.3 0 0 1 1400.6,413.4 L1400.6,517.3 A11.5,11.5 0 0 0 1424,517.3 L1424,413.4 A23.3,23.3 0 0 1 1470.2,413.4 L1470.2,517.3 A11.5,11.5 0 0 0 1493.6,517.3 L1493.6,413.4 A23.3,23.3 0 0 1 1539.8,413.4 L1539.8,517.3 A11.5,11.5 0 0 0 1563.2,517.3 L1563.2,413.4 A23.3,23.3 0 0 1 1609.4,413.4 L1609.4,413.4" fill="none" stroke="#436431" stroke-width="3.4"/>
<path d="M908.2,517.3 L908.2,517.3 A17.1,17.1 0 0 0 942.4,517.3 L942.4,413.4 A17.7,17.7 0 0 1 977.4,413.4 L977.4,517.3 A17.1,17.1 0 0 0 1012,517.3 L1012,413.4 A17.7,17.7 0 0 1 1047,413.4 L1047,517.3 A17.1,17.1 0 0 0 1081.6,517.3 L1081.6,413.4 A17.7,17.7 0 0 1 1116.6,413.4 L1116.6,517.3 A17.1,17.1 0 0 0 1151.2,517.3 L1151.2,413.4 A17.7,17.7 0 0 1 1186.2,413.4 L1186.2,517.3 A17.1,17.1 0 0 0 1220.8,517.3 L1220.8,413.4 A17.7,17.7 0 0 1 1255.8,413.4 L1255.8,517.3 A17.1,17.1 0 0 0 1290.4,517.3 L1290.4,413.4 A17.7,17.7 0 0 1 1325.4,413.4 L1325.4,517.3 A17.1,17.1 0 0 0 1360,517.3 L1360,413.4 A17.7,17.7 0 0 1 1395,413.4 L1395,517.3 A17.1,17.1 0 0 0 1429.6,517.3 L1429.6,413.4 A17.7,17.7 0 0 1 1464.6,413.4 L1464.6,517.3 A17.1,17.1 0 0 0 1499.2,517.3 L1499.2,413.4 A17.7,17.7 0 0 1 1534.2,413.4 L1534.2,517.3 A17.1,17.1 0 0 0 1568.8,517.3 L1568.8,413.4 A17.7,17.7 0 0 1 1603.8,413.4 L1603.8,413.4" fill="none" stroke="#436431" stroke-width="1.5"/>
<path d="M902.2,517.3 L902.2,517.3 A23.1,23.1 0 0 0 948.4,517.3 L948.4,413.4 A11.7,11.7 0 0 1 971.4,413.4 L971.4,517.3 A23.1,23.1 0 0 0 1018,517.3 L1018,413.4 A11.7,11.7 0 0 1 1041,413.4 L1041,517.3 A23.1,23.1 0 0 0 1087.6,517.3 L1087.6,413.4 A11.7,11.7 0 0 1 1110.6,413.4 L1110.6,517.3 A23.1,23.1 0 0 0 1157.2,517.3 L1157.2,413.4 A11.7,11.7 0 0 1 1180.2,413.4 L1180.2,517.3 A23.1,23.1 0 0 0 1226.8,517.3 L1226.8,413.4 A11.7,11.7 0 0 1 1249.8,413.4 L1249.8,517.3 A23.1,23.1 0 0 0 1296.4,517.3 L1296.4,413.4 A11.7,11.7 0 0 1 1319.4,413.4 L1319.4,517.3 A23.1,23.1 0 0 0 1366,517.3 L1366,413.4 A11.7,11.7 0 0 1 1389,413.4 L1389,517.3 A23.1,23.1 0 0 0 1435.6,517.3 L1435.6,413.4 A11.7,11.7 0 0 1 1458.6,413.4 L1458.6,517.3 A23.1,23.1 0 0 0 1505.2,517.3 L1505.2,413.4 A11.7,11.7 0 0 1 1528.2,413.4 L1528.2,517.3 A23.1,23.1 0 0 0 1574.8,517.3 L1574.8,413.4 A11.7,11.7 0 0 1 1597.8,413.4 L1597.8,413.4" fill="none" stroke="#436431" stroke-width="3.4"/>
<path d="M896.3,517.3 L896.3,517.3 A29,29 0 0 0 954.3,517.3 L954.3,413.4 A5.8,5.8 0 0 1 965.5,413.4 L965.5,517.3 A29,29 0 0 0 1023.9,517.3 L1023.9,413.4 A5.8,5.8 0 0 1 1035.1,413.4 L1035.1,517.3 A29,29 0 0 0 1093.5,517.3 L1093.5,413.4 A5.8,5.8 0 0 1 1104.7,413.4 L1104.7,517.3 A29,29 0 0 0 1163.1,517.3 L1163.1,413.4 A5.8,5.8 0 0 1 1174.3,413.4 L1174.3,517.3 A29,29 0 0 0 1232.7,517.3 L1232.7,413.4 A5.8,5.8 0 0 1 1243.9,413.4 L1243.9,517.3 A29,29 0 0 0 1302.3,517.3 L1302.3,413.4 A5.8,5.8 0 0 1 1313.5,413.4 L1313.5,517.3 A29,29 0 0 0 1371.9,517.3 L1371.9,413.4 A5.8,5.8 0 0 1 1383.1,413.4 L1383.1,517.3 A29,29 0 0 0 1441.5,517.3 L1441.5,413.4 A5.8,5.8 0 0 1 1452.7,413.4 L1452.7,517.3 A29,29 0 0 0 1511.1,517.3 L1511.1,413.4 A5.8,5.8 0 0 1 1522.3,413.4 L1522.3,517.3 A29,29 0 0 0 1580.7,517.3 L1580.7,413.4 A5.8,5.8 0 0 1 1591.9,413.4 L1591.9,413.4" fill="none" stroke="#436431" stroke-width="1.5"/>
<circle cx="901.9" cy="494.7" r="1.3" fill="#b8b8d8"/><circle cx="913.5" cy="494.7" r="1.3" fill="#b8b8d8"/><circle cx="1610.5" cy="436.3" r="1.3" fill="#b8b8d8"/><circle cx="1598.2" cy="494.6" r="1.3" fill="#b8b8d8"/><circle cx="959.7" cy="390.1" r="1.3" fill="#b8b8d8"/><circle cx="936.4" cy="436.7" r="1.3" fill="#b8b8d8"/><circle cx="983" cy="436.7" r="1.3" fill="#b8b8d8"/><circle cx="936.4" cy="494.9" r="1.3" fill="#b8b8d8"/><circle cx="983" cy="494.9" r="1.3" fill="#b8b8d8"/><circle cx="1029.3" cy="390.1" r="1.3" fill="#b8b8d8"/><circle cx="1006" cy="436.7" r="1.3" fill="#b8b8d8"/><circle cx="1052.6" cy="436.7" r="1.3" fill="#b8b8d8"/><circle cx="1006" cy="494.9" r="1.3" fill="#b8b8d8"/><circle cx="1052.6" cy="494.9" r="1.3" fill="#b8b8d8"/><circle cx="1098.9" cy="390.1" r="1.3" fill="#b8b8d8"/><circle cx="1075.6" cy="436.7" r="1.3" fill="#b8b8d8"/><circle cx="1122.2" cy="436.7" r="1.3" fill="#b8b8d8"/><circle cx="1075.6" cy="494.9" r="1.3" fill="#b8b8d8"/><circle cx="1122.2" cy="494.9" r="1.3" fill="#b8b8d8"/><circle cx="1168.5" cy="390.1" r="1.3" fill="#b8b8d8"/><circle cx="1145.2" cy="436.7" r="1.3" fill="#b8b8d8"/><circle cx="1191.8" cy="436.7" r="1.3" fill="#b8b8d8"/><circle cx="1145.2" cy="494.9" r="1.3" fill="#b8b8d8"/><circle cx="1191.8" cy="494.9" r="1.3" fill="#b8b8d8"/><circle cx="1238.1" cy="390.1" r="1.3" fill="#b8b8d8"/><circle cx="1214.8" cy="436.7" r="1.3" fill="#b8b8d8"/><circle cx="1261.4" cy="436.7" r="1.3" fill="#b8b8d8"/><circle cx="1214.8" cy="494.9" r="1.3" fill="#b8b8d8"/><circle cx="1261.4" cy="494.9" r="1.3" fill="#b8b8d8"/><circle cx="1307.7" cy="390.1" r="1.3" fill="#b8b8d8"/><circle cx="1284.4" cy="436.7" r="1.3" fill="#b8b8d8"/><circle cx="1331" cy="436.7" r="1.3" fill="#b8b8d8"/><circle cx="1284.4" cy="494.9" r="1.3" fill="#b8b8d8"/><circle cx="1331" cy="494.9" r="1.3" fill="#b8b8d8"/><circle cx="1377.3" cy="390.1" r="1.3" fill="#b8b8d8"/><circle cx="1354" cy="436.7" r="1.3" fill="#b8b8d8"/><circle cx="1400.6" cy="436.7" r="1.3" fill="#b8b8d8"/><circle cx="1354" cy="494.9" r="1.3" fill="#b8b8d8"/><circle cx="1400.6" cy="494.9" r="1.3" fill="#b8b8d8"/><circle cx="1446.9" cy="390.1" r="1.3" fill="#b8b8d8"/><circle cx="1423.6" cy="436.7" r="1.3" fill="#b8b8d8"/><circle cx="1470.2" cy="436.7" r="1.3" fill="#b8b8d8"/><circle cx="1423.6" cy="494.9" r="1.3" fill="#b8b8d8"/><circle cx="1470.2" cy="494.9" r="1.3" fill="#b8b8d8"/><circle cx="1516.5" cy="390.1" r="1.3" fill="#b8b8d8"/><circle cx="1493.2" cy="436.7" r="1.3" fill="#b8b8d8"/><circle cx="1539.8" cy="436.7" r="1.3" fill="#b8b8d8"/><circle cx="1493.2" cy="494.9" r="1.3" fill="#b8b8d8"/><circle cx="1539.8" cy="494.9" r="1.3" fill="#b8b8d8"/><circle cx="1586.1" cy="390.1" r="1.3" fill="#b8b8d8"/><circle cx="1562.8" cy="436.7" r="1.3" fill="#b8b8d8"/><circle cx="1609.4" cy="436.7" r="1.3" fill="#b8b8d8"/><circle cx="1562.8" cy="494.9" r="1.3" fill="#b8b8d8"/><circle cx="1609.4" cy="494.9" r="1.3" fill="#b8b8d8"/>
<path d="M907.2,575.7 L907.2,575.7 A17.3,17.3 0 0 1 941.8,575.7 L941.8,646.1 A5.9,5.9 0 0 0 953.9,646.1 L953.9,575.7 A17.3,17.3 0 0 1 988.2,575.7 L988.2,646.1 A5.9,5.9 0 0 0 1000.3,646.1 L1000.3,575.7 A17.3,17.3 0 0 1 1034.6,575.7 L1034.6,646.1 A5.9,5.9 0 0 0 1046.7,646.1 L1046.7,575.7 A17.3,17.3 0 0 1 1081,575.7 L1081,646.1 A5.9,5.9 0 0 0 1093.1,646.1 L1093.1,575.7 A17.3,17.3 0 0 1 1127.4,575.7 L1127.4,646.1 A5.9,5.9 0 0 0 1139.5,646.1 L1139.5,575.7 A17.3,17.3 0 0 1 1173.8,575.7 L1173.8,646.1 A5.9,5.9 0 0 0 1185.9,646.1 L1185.9,575.7 A17.3,17.3 0 0 1 1220.2,575.7 L1220.2,646.1 A5.9,5.9 0 0 0 1232.3,646.1 L1232.3,575.7 A17.3,17.3 0 0 1 1266.6,575.7 L1266.6,646.1 A5.9,5.9 0 0 0 1278.7,646.1 L1278.7,575.7 A17.3,17.3 0 0 1 1313,575.7 L1313,646.1 A5.9,5.9 0 0 0 1325.1,646.1 L1325.1,575.7 A17.3,17.3 0 0 1 1359.4,575.7 L1359.4,646.1 A5.9,5.9 0 0 0 1371.5,646.1 L1371.5,575.7 A17.3,17.3 0 0 1 1405.8,575.7 L1405.8,646.1 A5.9,5.9 0 0 0 1417.9,646.1 L1417.9,575.7 A17.3,17.3 0 0 1 1452.2,575.7 L1452.2,646.1 A5.9,5.9 0 0 0 1464.3,646.1 L1464.3,575.7 A17.3,17.3 0 0 1 1498.6,575.7 L1498.6,646.1 A5.9,5.9 0 0 0 1510.7,646.1 L1510.7,575.7 A17.3,17.3 0 0 1 1545,575.7 L1545,646.1 A5.9,5.9 0 0 0 1557.1,646.1 L1557.1,575.7 A17.3,17.3 0 0 1 1591.4,575.7 L1591.4,646.1 A5.9,5.9 0 0 0 1603.5,646.1 L1603.5,575.7 A17.3,17.3 0 0 1 1637.8,575.7 L1637.8,604.7" fill="none" stroke="#436431" stroke-width="1.2"/>
<path d="M918.4,575.7 L918.4,575.7 A6.1,6.1 0 0 1 930.6,575.7 L930.6,646.1 A17.1,17.1 0 0 0 965.1,646.1 L965.1,575.7 A6.1,6.1 0 0 1 977,575.7 L977,646.1 A17.1,17.1 0 0 0 1011.5,646.1 L1011.5,575.7 A6.1,6.1 0 0 1 1023.4,575.7 L1023.4,646.1 A17.1,17.1 0 0 0 1057.9,646.1 L1057.9,575.7 A6.1,6.1 0 0 1 1069.8,575.7 L1069.8,646.1 A17.1,17.1 0 0 0 1104.3,646.1 L1104.3,575.7 A6.1,6.1 0 0 1 1116.2,575.7 L1116.2,646.1 A17.1,17.1 0 0 0 1150.7,646.1 L1150.7,575.7 A6.1,6.1 0 0 1 1162.6,575.7 L1162.6,646.1 A17.1,17.1 0 0 0 1197.1,646.1 L1197.1,575.7 A6.1,6.1 0 0 1 1209,575.7 L1209,646.1 A17.1,17.1 0 0 0 1243.5,646.1 L1243.5,575.7 A6.1,6.1 0 0 1 1255.4,575.7 L1255.4,646.1 A17.1,17.1 0 0 0 1289.9,646.1 L1289.9,575.7 A6.1,6.1 0 0 1 1301.8,575.7 L1301.8,646.1 A17.1,17.1 0 0 0 1336.3,646.1 L1336.3,575.7 A6.1,6.1 0 0 1 1348.2,575.7 L1348.2,646.1 A17.1,17.1 0 0 0 1382.7,646.1 L1382.7,575.7 A6.1,6.1 0 0 1 1394.6,575.7 L1394.6,646.1 A17.1,17.1 0 0 0 1429.1,646.1 L1429.1,575.7 A6.1,6.1 0 0 1 1441,575.7 L1441,646.1 A17.1,17.1 0 0 0 1475.5,646.1 L1475.5,575.7 A6.1,6.1 0 0 1 1487.4,575.7 L1487.4,646.1 A17.1,17.1 0 0 0 1521.9,646.1 L1521.9,575.7 A6.1,6.1 0 0 1 1533.8,575.7 L1533.8,646.1 A17.1,17.1 0 0 0 1568.3,646.1 L1568.3,575.7 A6.1,6.1 0 0 1 1580.2,575.7 L1580.2,646.1 A17.1,17.1 0 0 0 1614.7,646.1 L1614.7,575.7 A6.1,6.1 0 0 1 1626.6,575.7 L1626.6,633.8" fill="none" stroke="#436431" stroke-width="1.2"/>
<path d="M875,594 L875,604.5 L882,611.7 L901.5,611.7 L907.2,606 L907.2,575.7 M875,628 L880,623 L909,623 L918.4,613.6 L918.4,575.7 M1637.8,604.7 L1643,610 L1654.5,610 L1660,604.5 L1660,594 M1626.6,633.8 L1640.8,647.4 L1655,647.4" fill="none" stroke="#436431" stroke-width="1.2"/>
<g transform="translate(890.2,314.9) rotate(0)"><circle r="3.8" fill="#3a1418"/><path d="M-3.2,-0.6 Q0,2.6 3.2,-0.6" fill="none" stroke="#f4f020" stroke-width="1.5"/></g>
<circle cx="907.5" cy="320.7" r="3.5" fill="#3a1418"/><circle cx="907.5" cy="320.7" r="2.1" fill="#b8b8d8" stroke="#f4f020" stroke-width="1.4"/>
<g transform="translate(924.8,327) rotate(180)"><circle r="3.8" fill="#3a1418"/><path d="M-3.2,-0.6 Q0,2.6 3.2,-0.6" fill="none" stroke="#f4f020" stroke-width="1.5"/></g>
<g transform="translate(959.6,314.9) rotate(0)"><circle r="3.8" fill="#3a1418"/><path d="M-3.2,-0.6 Q0,2.6 3.2,-0.6" fill="none" stroke="#f4f020" stroke-width="1.5"/></g>
<circle cx="976.9" cy="320.7" r="3.5" fill="#3a1418"/><circle cx="976.9" cy="320.7" r="2.1" fill="#b8b8d8" stroke="#f4f020" stroke-width="1.4"/>
<g transform="translate(994.2,327) rotate(180)"><circle r="3.8" fill="#3a1418"/><path d="M-3.2,-0.6 Q0,2.6 3.2,-0.6" fill="none" stroke="#f4f020" stroke-width="1.5"/></g>
<g transform="translate(1029,314.9) rotate(0)"><circle r="3.8" fill="#3a1418"/><path d="M-3.2,-0.6 Q0,2.6 3.2,-0.6" fill="none" stroke="#f4f020" stroke-width="1.5"/></g>
<circle cx="1046.3" cy="320.7" r="3.5" fill="#3a1418"/><circle cx="1046.3" cy="320.7" r="2.1" fill="#b8b8d8" stroke="#f4f020" stroke-width="1.4"/>
<g transform="translate(1063.6,327) rotate(180)"><circle r="3.8" fill="#3a1418"/><path d="M-3.2,-0.6 Q0,2.6 3.2,-0.6" fill="none" stroke="#f4f020" stroke-width="1.5"/></g>
<g transform="translate(1098.4,314.9) rotate(0)"><circle r="3.8" fill="#3a1418"/><path d="M-3.2,-0.6 Q0,2.6 3.2,-0.6" fill="none" stroke="#f4f020" stroke-width="1.5"/></g>
<circle cx="1115.7" cy="320.7" r="3.5" fill="#3a1418"/><circle cx="1115.7" cy="320.7" r="2.1" fill="#b8b8d8" stroke="#f4f020" stroke-width="1.4"/>
<g transform="translate(1133,327) rotate(180)"><circle r="3.8" fill="#3a1418"/><path d="M-3.2,-0.6 Q0,2.6 3.2,-0.6" fill="none" stroke="#f4f020" stroke-width="1.5"/></g>
<g transform="translate(1167.8,314.9) rotate(0)"><circle r="3.8" fill="#3a1418"/><path d="M-3.2,-0.6 Q0,2.6 3.2,-0.6" fill="none" stroke="#f4f020" stroke-width="1.5"/></g>
<circle cx="1185.1" cy="320.7" r="3.5" fill="#3a1418"/><circle cx="1185.1" cy="320.7" r="2.1" fill="#b8b8d8" stroke="#f4f020" stroke-width="1.4"/>
<g transform="translate(1202.4,327) rotate(180)"><circle r="3.8" fill="#3a1418"/><path d="M-3.2,-0.6 Q0,2.6 3.2,-0.6" fill="none" stroke="#f4f020" stroke-width="1.5"/></g>
<g transform="translate(1285,314.9) rotate(0)"><circle r="3.8" fill="#3a1418"/><path d="M-3.2,-0.6 Q0,2.6 3.2,-0.6" fill="none" stroke="#f4f020" stroke-width="1.5"/></g>
<circle cx="1302.3" cy="320.7" r="3.5" fill="#3a1418"/><circle cx="1302.3" cy="320.7" r="2.1" fill="#b8b8d8" stroke="#f4f020" stroke-width="1.4"/>
<g transform="translate(1319.6,327) rotate(180)"><circle r="3.8" fill="#3a1418"/><path d="M-3.2,-0.6 Q0,2.6 3.2,-0.6" fill="none" stroke="#f4f020" stroke-width="1.5"/></g>
<g transform="translate(1354.6,314.9) rotate(0)"><circle r="3.8" fill="#3a1418"/><path d="M-3.2,-0.6 Q0,2.6 3.2,-0.6" fill="none" stroke="#f4f020" stroke-width="1.5"/></g>
<circle cx="1371.9" cy="320.7" r="3.5" fill="#3a1418"/><circle cx="1371.9" cy="320.7" r="2.1" fill="#b8b8d8" stroke="#f4f020" stroke-width="1.4"/>
<g transform="translate(1389.2,327) rotate(180)"><circle r="3.8" fill="#3a1418"/><path d="M-3.2,-0.6 Q0,2.6 3.2,-0.6" fill="none" stroke="#f4f020" stroke-width="1.5"/></g>
<g transform="translate(1424.2,314.9) rotate(0)"><circle r="3.8" fill="#3a1418"/><path d="M-3.2,-0.6 Q0,2.6 3.2,-0.6" fill="none" stroke="#f4f020" stroke-width="1.5"/></g>
<circle cx="1441.5" cy="320.7" r="3.5" fill="#3a1418"/><circle cx="1441.5" cy="320.7" r="2.1" fill="#b8b8d8" stroke="#f4f020" stroke-width="1.4"/>
<g transform="translate(1458.8,327) rotate(180)"><circle r="3.8" fill="#3a1418"/><path d="M-3.2,-0.6 Q0,2.6 3.2,-0.6" fill="none" stroke="#f4f020" stroke-width="1.5"/></g>
<g transform="translate(1493.8,314.9) rotate(0)"><circle r="3.8" fill="#3a1418"/><path d="M-3.2,-0.6 Q0,2.6 3.2,-0.6" fill="none" stroke="#f4f020" stroke-width="1.5"/></g>
<circle cx="1511.1" cy="320.7" r="3.5" fill="#3a1418"/><circle cx="1511.1" cy="320.7" r="2.1" fill="#b8b8d8" stroke="#f4f020" stroke-width="1.4"/>
<g transform="translate(1528.4,327) rotate(180)"><circle r="3.8" fill="#3a1418"/><path d="M-3.2,-0.6 Q0,2.6 3.2,-0.6" fill="none" stroke="#f4f020" stroke-width="1.5"/></g>
<g transform="translate(1563.4,314.9) rotate(0)"><circle r="3.8" fill="#3a1418"/><path d="M-3.2,-0.6 Q0,2.6 3.2,-0.6" fill="none" stroke="#f4f020" stroke-width="1.5"/></g>
<circle cx="1580.7" cy="320.7" r="3.5" fill="#3a1418"/><circle cx="1580.7" cy="320.7" r="2.1" fill="#b8b8d8" stroke="#f4f020" stroke-width="1.4"/>
<g transform="translate(1598,327) rotate(180)"><circle r="3.8" fill="#3a1418"/><path d="M-3.2,-0.6 Q0,2.6 3.2,-0.6" fill="none" stroke="#f4f020" stroke-width="1.5"/></g>
<g transform="translate(1029,720.75) rotate(0)"><circle r="3.8" fill="#3a1418"/><path d="M-3.2,-0.6 Q0,2.6 3.2,-0.6" fill="none" stroke="#f4f020" stroke-width="1.5"/></g>
<circle cx="1041" cy="721.15" r="3.5" fill="#3a1418"/><circle cx="1041" cy="721.15" r="2.1" fill="#b8b8d8" stroke="#f4f020" stroke-width="1.4"/>
<g transform="translate(1098.6,720.75) rotate(0)"><circle r="3.8" fill="#3a1418"/><path d="M-3.2,-0.6 Q0,2.6 3.2,-0.6" fill="none" stroke="#f4f020" stroke-width="1.5"/></g>
<circle cx="1110.6" cy="721.15" r="3.5" fill="#3a1418"/><circle cx="1110.6" cy="721.15" r="2.1" fill="#b8b8d8" stroke="#f4f020" stroke-width="1.4"/>
<g transform="translate(1168.2,720.75) rotate(0)"><circle r="3.8" fill="#3a1418"/><path d="M-3.2,-0.6 Q0,2.6 3.2,-0.6" fill="none" stroke="#f4f020" stroke-width="1.5"/></g>
<circle cx="1180.2" cy="721.15" r="3.5" fill="#3a1418"/><circle cx="1180.2" cy="721.15" r="2.1" fill="#b8b8d8" stroke="#f4f020" stroke-width="1.4"/>
<circle cx="1237.8" cy="721.15" r="3.5" fill="#3a1418"/><circle cx="1237.8" cy="721.15" r="2.1" fill="#b8b8d8" stroke="#f4f020" stroke-width="1.4"/>
<g transform="translate(1313.5,675.3) rotate(180)"><circle r="3.8" fill="#3a1418"/><path d="M-3.2,-0.6 Q0,2.6 3.2,-0.6" fill="none" stroke="#f4f020" stroke-width="1.5"/></g>
<circle cx="1313.5" cy="686.7" r="3.5" fill="#3a1418"/><circle cx="1313.5" cy="686.7" r="2.1" fill="#b8b8d8" stroke="#f4f020" stroke-width="1.4"/>
<g transform="translate(1383.1,675.3) rotate(180)"><circle r="3.8" fill="#3a1418"/><path d="M-3.2,-0.6 Q0,2.6 3.2,-0.6" fill="none" stroke="#f4f020" stroke-width="1.5"/></g>
<circle cx="1383.1" cy="686.7" r="3.5" fill="#3a1418"/><circle cx="1383.1" cy="686.7" r="2.1" fill="#b8b8d8" stroke="#f4f020" stroke-width="1.4"/>
<g transform="translate(1452.7,675.3) rotate(180)"><circle r="3.8" fill="#3a1418"/><path d="M-3.2,-0.6 Q0,2.6 3.2,-0.6" fill="none" stroke="#f4f020" stroke-width="1.5"/></g>
<circle cx="1452.7" cy="686.7" r="3.5" fill="#3a1418"/><circle cx="1452.7" cy="686.7" r="2.1" fill="#b8b8d8" stroke="#f4f020" stroke-width="1.4"/>
<g transform="translate(1522.3,675.3) rotate(180)"><circle r="3.8" fill="#3a1418"/><path d="M-3.2,-0.6 Q0,2.6 3.2,-0.6" fill="none" stroke="#f4f020" stroke-width="1.5"/></g>
<circle cx="1522.3" cy="686.7" r="3.5" fill="#3a1418"/><circle cx="1522.3" cy="686.7" r="2.1" fill="#b8b8d8" stroke="#f4f020" stroke-width="1.4"/>
<g transform="translate(1591.9,675.3) rotate(180)"><circle r="3.8" fill="#3a1418"/><path d="M-3.2,-0.6 Q0,2.6 3.2,-0.6" fill="none" stroke="#f4f020" stroke-width="1.5"/></g>
<circle cx="1591.9" cy="686.7" r="3.5" fill="#3a1418"/><circle cx="1591.9" cy="686.7" r="2.1" fill="#b8b8d8" stroke="#f4f020" stroke-width="1.4"/>
<circle cx="1244.4" cy="674.6" r="3.5" fill="#3a1418"/><circle cx="1244.4" cy="674.6" r="2.1" fill="#b8b8d8" stroke="#f4f020" stroke-width="1.4"/>
<g transform="translate(1029,778.8) rotate(0)"><circle r="3.8" fill="#3a1418"/><path d="M-3.2,-0.6 Q0,2.6 3.2,-0.6" fill="none" stroke="#f4f020" stroke-width="1.5"/></g>
<circle cx="1041" cy="779.5" r="3.5" fill="#3a1418"/><circle cx="1041" cy="779.5" r="2.1" fill="#b8b8d8" stroke="#f4f020" stroke-width="1.4"/>
<g transform="translate(1098.6,778.8) rotate(0)"><circle r="3.8" fill="#3a1418"/><path d="M-3.2,-0.6 Q0,2.6 3.2,-0.6" fill="none" stroke="#f4f020" stroke-width="1.5"/></g>
<circle cx="1110.6" cy="779.5" r="3.5" fill="#3a1418"/><circle cx="1110.6" cy="779.5" r="2.1" fill="#b8b8d8" stroke="#f4f020" stroke-width="1.4"/>
<g transform="translate(1168.2,778.8) rotate(0)"><circle r="3.8" fill="#3a1418"/><path d="M-3.2,-0.6 Q0,2.6 3.2,-0.6" fill="none" stroke="#f4f020" stroke-width="1.5"/></g>
<circle cx="1180.2" cy="779.5" r="3.5" fill="#3a1418"/><circle cx="1180.2" cy="779.5" r="2.1" fill="#b8b8d8" stroke="#f4f020" stroke-width="1.4"/>
<g transform="translate(1237.8,778.8) rotate(0)"><circle r="3.8" fill="#3a1418"/><path d="M-3.2,-0.6 Q0,2.6 3.2,-0.6" fill="none" stroke="#f4f020" stroke-width="1.5"/></g>
<circle cx="1249.8" cy="779.5" r="3.5" fill="#3a1418"/><circle cx="1249.8" cy="779.5" r="2.1" fill="#b8b8d8" stroke="#f4f020" stroke-width="1.4"/>
<g transform="translate(1320.1,778.8) rotate(0)"><circle r="3.8" fill="#3a1418"/><path d="M-3.2,-0.6 Q0,2.6 3.2,-0.6" fill="none" stroke="#f4f020" stroke-width="1.5"/></g>
<circle cx="1331.4" cy="779.5" r="3.5" fill="#3a1418"/><circle cx="1331.4" cy="779.5" r="2.1" fill="#b8b8d8" stroke="#f4f020" stroke-width="1.4"/>
<g transform="translate(1389.7,778.8) rotate(0)"><circle r="3.8" fill="#3a1418"/><path d="M-3.2,-0.6 Q0,2.6 3.2,-0.6" fill="none" stroke="#f4f020" stroke-width="1.5"/></g>
<circle cx="1401" cy="779.5" r="3.5" fill="#3a1418"/><circle cx="1401" cy="779.5" r="2.1" fill="#b8b8d8" stroke="#f4f020" stroke-width="1.4"/>
<g transform="translate(1459.3,778.8) rotate(0)"><circle r="3.8" fill="#3a1418"/><path d="M-3.2,-0.6 Q0,2.6 3.2,-0.6" fill="none" stroke="#f4f020" stroke-width="1.5"/></g>
<circle cx="1470.6" cy="779.5" r="3.5" fill="#3a1418"/><circle cx="1470.6" cy="779.5" r="2.1" fill="#b8b8d8" stroke="#f4f020" stroke-width="1.4"/>
<g transform="translate(1528.9,778.8) rotate(0)"><circle r="3.8" fill="#3a1418"/><path d="M-3.2,-0.6 Q0,2.6 3.2,-0.6" fill="none" stroke="#f4f020" stroke-width="1.5"/></g>
<circle cx="1540.2" cy="779.5" r="3.5" fill="#3a1418"/><circle cx="1540.2" cy="779.5" r="2.1" fill="#b8b8d8" stroke="#f4f020" stroke-width="1.4"/>
<g transform="translate(1598.5,778.8) rotate(0)"><circle r="3.8" fill="#3a1418"/><path d="M-3.2,-0.6 Q0,2.6 3.2,-0.6" fill="none" stroke="#f4f020" stroke-width="1.5"/></g>
<circle cx="1609.8" cy="779.5" r="3.5" fill="#3a1418"/><circle cx="1609.8" cy="779.5" r="2.1" fill="#b8b8d8" stroke="#f4f020" stroke-width="1.4"/>
<g transform="translate(1029,836.85) rotate(0)"><circle r="3.8" fill="#3a1418"/><path d="M-3.2,-0.6 Q0,2.6 3.2,-0.6" fill="none" stroke="#f4f020" stroke-width="1.5"/></g>
<circle cx="1040.5" cy="837.55" r="3.5" fill="#3a1418"/><circle cx="1040.5" cy="837.55" r="2.1" fill="#b8b8d8" stroke="#f4f020" stroke-width="1.4"/>
<g transform="translate(1098.6,836.85) rotate(0)"><circle r="3.8" fill="#3a1418"/><path d="M-3.2,-0.6 Q0,2.6 3.2,-0.6" fill="none" stroke="#f4f020" stroke-width="1.5"/></g>
<circle cx="1110.1" cy="837.55" r="3.5" fill="#3a1418"/><circle cx="1110.1" cy="837.55" r="2.1" fill="#b8b8d8" stroke="#f4f020" stroke-width="1.4"/>
<g transform="translate(1168.2,836.85) rotate(0)"><circle r="3.8" fill="#3a1418"/><path d="M-3.2,-0.6 Q0,2.6 3.2,-0.6" fill="none" stroke="#f4f020" stroke-width="1.5"/></g>
<circle cx="1179.7" cy="837.55" r="3.5" fill="#3a1418"/><circle cx="1179.7" cy="837.55" r="2.1" fill="#b8b8d8" stroke="#f4f020" stroke-width="1.4"/>
<g transform="translate(1237.8,836.85) rotate(0)"><circle r="3.8" fill="#3a1418"/><path d="M-3.2,-0.6 Q0,2.6 3.2,-0.6" fill="none" stroke="#f4f020" stroke-width="1.5"/></g>
<circle cx="1249.3" cy="837.55" r="3.5" fill="#3a1418"/><circle cx="1249.3" cy="837.55" r="2.1" fill="#b8b8d8" stroke="#f4f020" stroke-width="1.4"/>
<g transform="translate(1307.4,836.85) rotate(0)"><circle r="3.8" fill="#3a1418"/><path d="M-3.2,-0.6 Q0,2.6 3.2,-0.6" fill="none" stroke="#f4f020" stroke-width="1.5"/></g>
<circle cx="1318.9" cy="837.55" r="3.5" fill="#3a1418"/><circle cx="1318.9" cy="837.55" r="2.1" fill="#b8b8d8" stroke="#f4f020" stroke-width="1.4"/>
<g transform="translate(1377,836.85) rotate(0)"><circle r="3.8" fill="#3a1418"/><path d="M-3.2,-0.6 Q0,2.6 3.2,-0.6" fill="none" stroke="#f4f020" stroke-width="1.5"/></g>
<circle cx="1388.5" cy="837.55" r="3.5" fill="#3a1418"/><circle cx="1388.5" cy="837.55" r="2.1" fill="#b8b8d8" stroke="#f4f020" stroke-width="1.4"/>
<g transform="translate(1446.6,836.85) rotate(0)"><circle r="3.8" fill="#3a1418"/><path d="M-3.2,-0.6 Q0,2.6 3.2,-0.6" fill="none" stroke="#f4f020" stroke-width="1.5"/></g>
<circle cx="1458.1" cy="837.55" r="3.5" fill="#3a1418"/><circle cx="1458.1" cy="837.55" r="2.1" fill="#b8b8d8" stroke="#f4f020" stroke-width="1.4"/>
<g transform="translate(1516.2,836.85) rotate(0)"><circle r="3.8" fill="#3a1418"/><path d="M-3.2,-0.6 Q0,2.6 3.2,-0.6" fill="none" stroke="#f4f020" stroke-width="1.5"/></g>
<circle cx="1527.7" cy="837.55" r="3.5" fill="#3a1418"/><circle cx="1527.7" cy="837.55" r="2.1" fill="#b8b8d8" stroke="#f4f020" stroke-width="1.4"/>
<g transform="translate(1585.8,836.85) rotate(0)"><circle r="3.8" fill="#3a1418"/><path d="M-3.2,-0.6 Q0,2.6 3.2,-0.6" fill="none" stroke="#f4f020" stroke-width="1.5"/></g>
<circle cx="1597.3" cy="837.55" r="3.5" fill="#3a1418"/><circle cx="1597.3" cy="837.55" r="2.1" fill="#b8b8d8" stroke="#f4f020" stroke-width="1.4"/>
<g transform="translate(1029.4,895.2) rotate(0)"><circle r="3.8" fill="#3a1418"/><path d="M-3.2,-0.6 Q0,2.6 3.2,-0.6" fill="none" stroke="#f4f020" stroke-width="1.5"/></g>
<circle cx="1029.4" cy="907.5" r="3.5" fill="#3a1418"/><circle cx="1029.4" cy="907.5" r="2.1" fill="#b8b8d8" stroke="#f4f020" stroke-width="1.4"/>
<g transform="translate(1099,895.2) rotate(0)"><circle r="3.8" fill="#3a1418"/><path d="M-3.2,-0.6 Q0,2.6 3.2,-0.6" fill="none" stroke="#f4f020" stroke-width="1.5"/></g>
<circle cx="1099" cy="907.5" r="3.5" fill="#3a1418"/><circle cx="1099" cy="907.5" r="2.1" fill="#b8b8d8" stroke="#f4f020" stroke-width="1.4"/>
<g transform="translate(1168.6,895.2) rotate(0)"><circle r="3.8" fill="#3a1418"/><path d="M-3.2,-0.6 Q0,2.6 3.2,-0.6" fill="none" stroke="#f4f020" stroke-width="1.5"/></g>
<circle cx="1168.6" cy="907.5" r="3.5" fill="#3a1418"/><circle cx="1168.6" cy="907.5" r="2.1" fill="#b8b8d8" stroke="#f4f020" stroke-width="1.4"/>
<g transform="translate(1238.2,895.2) rotate(0)"><circle r="3.8" fill="#3a1418"/><path d="M-3.2,-0.6 Q0,2.6 3.2,-0.6" fill="none" stroke="#f4f020" stroke-width="1.5"/></g>
<circle cx="1238.2" cy="907.5" r="3.5" fill="#3a1418"/><circle cx="1238.2" cy="907.5" r="2.1" fill="#b8b8d8" stroke="#f4f020" stroke-width="1.4"/>
<g transform="translate(1307.8,895.2) rotate(0)"><circle r="3.8" fill="#3a1418"/><path d="M-3.2,-0.6 Q0,2.6 3.2,-0.6" fill="none" stroke="#f4f020" stroke-width="1.5"/></g>
<circle cx="1307.8" cy="907.5" r="3.5" fill="#3a1418"/><circle cx="1307.8" cy="907.5" r="2.1" fill="#b8b8d8" stroke="#f4f020" stroke-width="1.4"/>
<g transform="translate(1377.4,895.2) rotate(0)"><circle r="3.8" fill="#3a1418"/><path d="M-3.2,-0.6 Q0,2.6 3.2,-0.6" fill="none" stroke="#f4f020" stroke-width="1.5"/></g>
<circle cx="1377.4" cy="907.5" r="3.5" fill="#3a1418"/><circle cx="1377.4" cy="907.5" r="2.1" fill="#b8b8d8" stroke="#f4f020" stroke-width="1.4"/>
<g transform="translate(1447,895.2) rotate(0)"><circle r="3.8" fill="#3a1418"/><path d="M-3.2,-0.6 Q0,2.6 3.2,-0.6" fill="none" stroke="#f4f020" stroke-width="1.5"/></g>
<circle cx="1447" cy="907.5" r="3.5" fill="#3a1418"/><circle cx="1447" cy="907.5" r="2.1" fill="#b8b8d8" stroke="#f4f020" stroke-width="1.4"/>
<g transform="translate(1516.6,895.2) rotate(0)"><circle r="3.8" fill="#3a1418"/><path d="M-3.2,-0.6 Q0,2.6 3.2,-0.6" fill="none" stroke="#f4f020" stroke-width="1.5"/></g>
<circle cx="1516.6" cy="907.5" r="3.5" fill="#3a1418"/><circle cx="1516.6" cy="907.5" r="2.1" fill="#b8b8d8" stroke="#f4f020" stroke-width="1.4"/>
<g transform="translate(1586.2,895.2) rotate(0)"><circle r="3.8" fill="#3a1418"/><path d="M-3.2,-0.6 Q0,2.6 3.2,-0.6" fill="none" stroke="#f4f020" stroke-width="1.5"/></g>
<circle cx="1586.2" cy="907.5" r="3.5" fill="#3a1418"/><circle cx="1586.2" cy="907.5" r="2.1" fill="#b8b8d8" stroke="#f4f020" stroke-width="1.4"/>
<g transform="translate(1029.4,953.25) rotate(0)"><circle r="3.8" fill="#3a1418"/><path d="M-3.2,-0.6 Q0,2.6 3.2,-0.6" fill="none" stroke="#f4f020" stroke-width="1.5"/></g>
<circle cx="1029.4" cy="965.55" r="3.5" fill="#3a1418"/><circle cx="1029.4" cy="965.55" r="2.1" fill="#b8b8d8" stroke="#f4f020" stroke-width="1.4"/>
<g transform="translate(1099,953.25) rotate(0)"><circle r="3.8" fill="#3a1418"/><path d="M-3.2,-0.6 Q0,2.6 3.2,-0.6" fill="none" stroke="#f4f020" stroke-width="1.5"/></g>
<circle cx="1099" cy="965.55" r="3.5" fill="#3a1418"/><circle cx="1099" cy="965.55" r="2.1" fill="#b8b8d8" stroke="#f4f020" stroke-width="1.4"/>
<g transform="translate(1168.6,953.25) rotate(0)"><circle r="3.8" fill="#3a1418"/><path d="M-3.2,-0.6 Q0,2.6 3.2,-0.6" fill="none" stroke="#f4f020" stroke-width="1.5"/></g>
<circle cx="1168.6" cy="965.55" r="3.5" fill="#3a1418"/><circle cx="1168.6" cy="965.55" r="2.1" fill="#b8b8d8" stroke="#f4f020" stroke-width="1.4"/>
<g transform="translate(1238.2,953.25) rotate(0)"><circle r="3.8" fill="#3a1418"/><path d="M-3.2,-0.6 Q0,2.6 3.2,-0.6" fill="none" stroke="#f4f020" stroke-width="1.5"/></g>
<circle cx="1238.2" cy="965.55" r="3.5" fill="#3a1418"/><circle cx="1238.2" cy="965.55" r="2.1" fill="#b8b8d8" stroke="#f4f020" stroke-width="1.4"/>
<g transform="translate(1307.8,953.25) rotate(0)"><circle r="3.8" fill="#3a1418"/><path d="M-3.2,-0.6 Q0,2.6 3.2,-0.6" fill="none" stroke="#f4f020" stroke-width="1.5"/></g>
<circle cx="1307.8" cy="965.55" r="3.5" fill="#3a1418"/><circle cx="1307.8" cy="965.55" r="2.1" fill="#b8b8d8" stroke="#f4f020" stroke-width="1.4"/>
<g transform="translate(1377.4,953.25) rotate(0)"><circle r="3.8" fill="#3a1418"/><path d="M-3.2,-0.6 Q0,2.6 3.2,-0.6" fill="none" stroke="#f4f020" stroke-width="1.5"/></g>
<circle cx="1377.4" cy="965.55" r="3.5" fill="#3a1418"/><circle cx="1377.4" cy="965.55" r="2.1" fill="#b8b8d8" stroke="#f4f020" stroke-width="1.4"/>
<g transform="translate(1447,953.25) rotate(0)"><circle r="3.8" fill="#3a1418"/><path d="M-3.2,-0.6 Q0,2.6 3.2,-0.6" fill="none" stroke="#f4f020" stroke-width="1.5"/></g>
<circle cx="1447" cy="965.55" r="3.5" fill="#3a1418"/><circle cx="1447" cy="965.55" r="2.1" fill="#b8b8d8" stroke="#f4f020" stroke-width="1.4"/>
<g transform="translate(1516.6,953.25) rotate(0)"><circle r="3.8" fill="#3a1418"/><path d="M-3.2,-0.6 Q0,2.6 3.2,-0.6" fill="none" stroke="#f4f020" stroke-width="1.5"/></g>
<circle cx="1516.6" cy="965.55" r="3.5" fill="#3a1418"/><circle cx="1516.6" cy="965.55" r="2.1" fill="#b8b8d8" stroke="#f4f020" stroke-width="1.4"/>
<g transform="translate(1586.2,953.25) rotate(0)"><circle r="3.8" fill="#3a1418"/><path d="M-3.2,-0.6 Q0,2.6 3.2,-0.6" fill="none" stroke="#f4f020" stroke-width="1.5"/></g>
<circle cx="1586.2" cy="965.55" r="3.5" fill="#3a1418"/><circle cx="1586.2" cy="965.55" r="2.1" fill="#b8b8d8" stroke="#f4f020" stroke-width="1.4"/>
<g transform="translate(982.7,565) rotate(235)"><circle r="3.8" fill="#3a1418"/><path d="M-3.2,-0.6 Q0,2.6 3.2,-0.6" fill="none" stroke="#f4f020" stroke-width="1.5"/></g>
<circle cx="994.4" cy="564.6" r="3.5" fill="#3a1418"/><circle cx="994.4" cy="564.6" r="2.1" fill="#b8b8d8" stroke="#f4f020" stroke-width="1.4"/>
<g transform="translate(1075.5,565) rotate(235)"><circle r="3.8" fill="#3a1418"/><path d="M-3.2,-0.6 Q0,2.6 3.2,-0.6" fill="none" stroke="#f4f020" stroke-width="1.5"/></g>
<circle cx="1087.2" cy="564.6" r="3.5" fill="#3a1418"/><circle cx="1087.2" cy="564.6" r="2.1" fill="#b8b8d8" stroke="#f4f020" stroke-width="1.4"/>
<g transform="translate(1168.3,565) rotate(235)"><circle r="3.8" fill="#3a1418"/><path d="M-3.2,-0.6 Q0,2.6 3.2,-0.6" fill="none" stroke="#f4f020" stroke-width="1.5"/></g>
<circle cx="1180" cy="564.6" r="3.5" fill="#3a1418"/><circle cx="1180" cy="564.6" r="2.1" fill="#b8b8d8" stroke="#f4f020" stroke-width="1.4"/>
<g transform="translate(1261.1,565) rotate(235)"><circle r="3.8" fill="#3a1418"/><path d="M-3.2,-0.6 Q0,2.6 3.2,-0.6" fill="none" stroke="#f4f020" stroke-width="1.5"/></g>
<circle cx="1272.8" cy="564.6" r="3.5" fill="#3a1418"/><circle cx="1272.8" cy="564.6" r="2.1" fill="#b8b8d8" stroke="#f4f020" stroke-width="1.4"/>
<g transform="translate(1353.9,565) rotate(235)"><circle r="3.8" fill="#3a1418"/><path d="M-3.2,-0.6 Q0,2.6 3.2,-0.6" fill="none" stroke="#f4f020" stroke-width="1.5"/></g>
<circle cx="1365.6" cy="564.6" r="3.5" fill="#3a1418"/><circle cx="1365.6" cy="564.6" r="2.1" fill="#b8b8d8" stroke="#f4f020" stroke-width="1.4"/>
<g transform="translate(1446.7,565) rotate(235)"><circle r="3.8" fill="#3a1418"/><path d="M-3.2,-0.6 Q0,2.6 3.2,-0.6" fill="none" stroke="#f4f020" stroke-width="1.5"/></g>
<circle cx="1458.4" cy="564.6" r="3.5" fill="#3a1418"/><circle cx="1458.4" cy="564.6" r="2.1" fill="#b8b8d8" stroke="#f4f020" stroke-width="1.4"/>
<g transform="translate(1539.5,565) rotate(235)"><circle r="3.8" fill="#3a1418"/><path d="M-3.2,-0.6 Q0,2.6 3.2,-0.6" fill="none" stroke="#f4f020" stroke-width="1.5"/></g>
<circle cx="1551.2" cy="564.6" r="3.5" fill="#3a1418"/><circle cx="1551.2" cy="564.6" r="2.1" fill="#b8b8d8" stroke="#f4f020" stroke-width="1.4"/>
<g transform="translate(1632.3,565) rotate(235)"><circle r="3.8" fill="#3a1418"/><path d="M-3.2,-0.6 Q0,2.6 3.2,-0.6" fill="none" stroke="#f4f020" stroke-width="1.5"/></g>
<circle cx="1644" cy="564.6" r="3.5" fill="#3a1418"/><circle cx="1644" cy="564.6" r="2.1" fill="#b8b8d8" stroke="#f4f020" stroke-width="1.4"/>
<g transform="translate(948,651.7) rotate(0)"><circle r="3.8" fill="#3a1418"/><path d="M-3.2,-0.6 Q0,2.6 3.2,-0.6" fill="none" stroke="#f4f020" stroke-width="1.5"/></g>
<g transform="translate(959.7,657.3) rotate(45)"><circle r="3.8" fill="#3a1418"/><path d="M-3.2,-0.6 Q0,2.6 3.2,-0.6" fill="none" stroke="#f4f020" stroke-width="1.5"/></g>
<circle cx="971.4" cy="657.3" r="3.5" fill="#3a1418"/><circle cx="971.4" cy="657.3" r="2.1" fill="#b8b8d8" stroke="#f4f020" stroke-width="1.4"/>
<g transform="translate(1040.8,651.7) rotate(0)"><circle r="3.8" fill="#3a1418"/><path d="M-3.2,-0.6 Q0,2.6 3.2,-0.6" fill="none" stroke="#f4f020" stroke-width="1.5"/></g>
<g transform="translate(1052.5,657.3) rotate(45)"><circle r="3.8" fill="#3a1418"/><path d="M-3.2,-0.6 Q0,2.6 3.2,-0.6" fill="none" stroke="#f4f020" stroke-width="1.5"/></g>
<circle cx="1064.2" cy="657.3" r="3.5" fill="#3a1418"/><circle cx="1064.2" cy="657.3" r="2.1" fill="#b8b8d8" stroke="#f4f020" stroke-width="1.4"/>
<g transform="translate(1133.6,651.7) rotate(0)"><circle r="3.8" fill="#3a1418"/><path d="M-3.2,-0.6 Q0,2.6 3.2,-0.6" fill="none" stroke="#f4f020" stroke-width="1.5"/></g>
<g transform="translate(1145.3,657.3) rotate(45)"><circle r="3.8" fill="#3a1418"/><path d="M-3.2,-0.6 Q0,2.6 3.2,-0.6" fill="none" stroke="#f4f020" stroke-width="1.5"/></g>
<circle cx="1157" cy="657.3" r="3.5" fill="#3a1418"/><circle cx="1157" cy="657.3" r="2.1" fill="#b8b8d8" stroke="#f4f020" stroke-width="1.4"/>
<g transform="translate(1226.4,651.7) rotate(0)"><circle r="3.8" fill="#3a1418"/><path d="M-3.2,-0.6 Q0,2.6 3.2,-0.6" fill="none" stroke="#f4f020" stroke-width="1.5"/></g>
<g transform="translate(1238.1,657.3) rotate(45)"><circle r="3.8" fill="#3a1418"/><path d="M-3.2,-0.6 Q0,2.6 3.2,-0.6" fill="none" stroke="#f4f020" stroke-width="1.5"/></g>
<circle cx="1249.8" cy="657.3" r="3.5" fill="#3a1418"/><circle cx="1249.8" cy="657.3" r="2.1" fill="#b8b8d8" stroke="#f4f020" stroke-width="1.4"/>
<g transform="translate(1319.2,651.7) rotate(0)"><circle r="3.8" fill="#3a1418"/><path d="M-3.2,-0.6 Q0,2.6 3.2,-0.6" fill="none" stroke="#f4f020" stroke-width="1.5"/></g>
<g transform="translate(1330.9,657.3) rotate(45)"><circle r="3.8" fill="#3a1418"/><path d="M-3.2,-0.6 Q0,2.6 3.2,-0.6" fill="none" stroke="#f4f020" stroke-width="1.5"/></g>
<circle cx="1342.6" cy="657.3" r="3.5" fill="#3a1418"/><circle cx="1342.6" cy="657.3" r="2.1" fill="#b8b8d8" stroke="#f4f020" stroke-width="1.4"/>
<g transform="translate(1412,651.7) rotate(0)"><circle r="3.8" fill="#3a1418"/><path d="M-3.2,-0.6 Q0,2.6 3.2,-0.6" fill="none" stroke="#f4f020" stroke-width="1.5"/></g>
<g transform="translate(1423.7,657.3) rotate(45)"><circle r="3.8" fill="#3a1418"/><path d="M-3.2,-0.6 Q0,2.6 3.2,-0.6" fill="none" stroke="#f4f020" stroke-width="1.5"/></g>
<circle cx="1435.4" cy="657.3" r="3.5" fill="#3a1418"/><circle cx="1435.4" cy="657.3" r="2.1" fill="#b8b8d8" stroke="#f4f020" stroke-width="1.4"/>
<g transform="translate(1504.8,651.7) rotate(0)"><circle r="3.8" fill="#3a1418"/><path d="M-3.2,-0.6 Q0,2.6 3.2,-0.6" fill="none" stroke="#f4f020" stroke-width="1.5"/></g>
<g transform="translate(1516.5,657.3) rotate(45)"><circle r="3.8" fill="#3a1418"/><path d="M-3.2,-0.6 Q0,2.6 3.2,-0.6" fill="none" stroke="#f4f020" stroke-width="1.5"/></g>
<circle cx="1528.2" cy="657.3" r="3.5" fill="#3a1418"/><circle cx="1528.2" cy="657.3" r="2.1" fill="#b8b8d8" stroke="#f4f020" stroke-width="1.4"/>
<g transform="translate(1597.6,651.7) rotate(0)"><circle r="3.8" fill="#3a1418"/><path d="M-3.2,-0.6 Q0,2.6 3.2,-0.6" fill="none" stroke="#f4f020" stroke-width="1.5"/></g>
<g transform="translate(1609.3,657.3) rotate(45)"><circle r="3.8" fill="#3a1418"/><path d="M-3.2,-0.6 Q0,2.6 3.2,-0.6" fill="none" stroke="#f4f020" stroke-width="1.5"/></g>
<circle cx="1621" cy="657.3" r="3.5" fill="#3a1418"/><circle cx="1621" cy="657.3" r="2.1" fill="#b8b8d8" stroke="#f4f020" stroke-width="1.4"/>
<rect x="991.2" y="520" width="6.8" height="30" rx="3.4" fill="#3a1418"/>
<rect x="992" y="524.5" width="5.2" height="2.4" fill="#f4f020"/>
<rect x="992" y="530" width="5.2" height="2.4" fill="#f4f020"/>
<rect x="992" y="535.5" width="5.2" height="2.4" fill="#f4f020"/>
<rect x="992" y="541" width="5.2" height="2.4" fill="#f4f020"/>
<rect x="992" y="546.5" width="5.2" height="2.4" fill="#f4f020"/>
<circle cx="971.3" cy="547" r="3.5" fill="#3a1418"/><circle cx="971.3" cy="547" r="2.1" fill="#b8b8d8" stroke="#f4f020" stroke-width="1.4"/>
<circle cx="1017.9" cy="547" r="3.5" fill="#3a1418"/><circle cx="1017.9" cy="547" r="2.1" fill="#b8b8d8" stroke="#f4f020" stroke-width="1.4"/>
<rect x="1130.4" y="520" width="6.8" height="30" rx="3.4" fill="#3a1418"/>
<rect x="1131.2" y="524.5" width="5.2" height="2.4" fill="#f4f020"/>
<rect x="1131.2" y="530" width="5.2" height="2.4" fill="#f4f020"/>
<rect x="1131.2" y="535.5" width="5.2" height="2.4" fill="#f4f020"/>
<rect x="1131.2" y="541" width="5.2" height="2.4" fill="#f4f020"/>
<rect x="1131.2" y="546.5" width="5.2" height="2.4" fill="#f4f020"/>
<circle cx="1110.5" cy="547" r="3.5" fill="#3a1418"/><circle cx="1110.5" cy="547" r="2.1" fill="#b8b8d8" stroke="#f4f020" stroke-width="1.4"/>
<circle cx="1157.1" cy="547" r="3.5" fill="#3a1418"/><circle cx="1157.1" cy="547" r="2.1" fill="#b8b8d8" stroke="#f4f020" stroke-width="1.4"/>
<rect x="1269.6" y="520" width="6.8" height="30" rx="3.4" fill="#3a1418"/>
<rect x="1270.4" y="524.5" width="5.2" height="2.4" fill="#f4f020"/>
<rect x="1270.4" y="530" width="5.2" height="2.4" fill="#f4f020"/>
<rect x="1270.4" y="535.5" width="5.2" height="2.4" fill="#f4f020"/>
<rect x="1270.4" y="541" width="5.2" height="2.4" fill="#f4f020"/>
<rect x="1270.4" y="546.5" width="5.2" height="2.4" fill="#f4f020"/>
<circle cx="1249.7" cy="547" r="3.5" fill="#3a1418"/><circle cx="1249.7" cy="547" r="2.1" fill="#b8b8d8" stroke="#f4f020" stroke-width="1.4"/>
<circle cx="1296.3" cy="547" r="3.5" fill="#3a1418"/><circle cx="1296.3" cy="547" r="2.1" fill="#b8b8d8" stroke="#f4f020" stroke-width="1.4"/>
<rect x="1408.8" y="520" width="6.8" height="30" rx="3.4" fill="#3a1418"/>
<rect x="1409.6" y="524.5" width="5.2" height="2.4" fill="#f4f020"/>
<rect x="1409.6" y="530" width="5.2" height="2.4" fill="#f4f020"/>
<rect x="1409.6" y="535.5" width="5.2" height="2.4" fill="#f4f020"/>
<rect x="1409.6" y="541" width="5.2" height="2.4" fill="#f4f020"/>
<rect x="1409.6" y="546.5" width="5.2" height="2.4" fill="#f4f020"/>
<circle cx="1388.9" cy="547" r="3.5" fill="#3a1418"/><circle cx="1388.9" cy="547" r="2.1" fill="#b8b8d8" stroke="#f4f020" stroke-width="1.4"/>
<circle cx="1435.5" cy="547" r="3.5" fill="#3a1418"/><circle cx="1435.5" cy="547" r="2.1" fill="#b8b8d8" stroke="#f4f020" stroke-width="1.4"/>
<rect x="1548" y="520" width="6.8" height="30" rx="3.4" fill="#3a1418"/>
<rect x="1548.8" y="524.5" width="5.2" height="2.4" fill="#f4f020"/>
<rect x="1548.8" y="530" width="5.2" height="2.4" fill="#f4f020"/>
<rect x="1548.8" y="535.5" width="5.2" height="2.4" fill="#f4f020"/>
<rect x="1548.8" y="541" width="5.2" height="2.4" fill="#f4f020"/>
<rect x="1548.8" y="546.5" width="5.2" height="2.4" fill="#f4f020"/>
<circle cx="1528.1" cy="547" r="3.5" fill="#3a1418"/><circle cx="1528.1" cy="547" r="2.1" fill="#b8b8d8" stroke="#f4f020" stroke-width="1.4"/>
<circle cx="1574.7" cy="547" r="3.5" fill="#3a1418"/><circle cx="1574.7" cy="547" r="2.1" fill="#b8b8d8" stroke="#f4f020" stroke-width="1.4"/>
<circle cx="814.6" cy="284.3" r="7.8" fill="#1d3a2b"/><circle cx="814.6" cy="300.3" r="7.8" fill="#1d3a2b"/>
<path d="M814.6,275.3 V309.3 M805,284.3 H824 M805,300.3 H824" stroke="#42632f" stroke-width="1.6"/>
<rect x="810.3" y="280.5" width="8.7" height="23" rx="2" fill="#f0f0ea"/>
<rect x="810.3" y="287.6" width="8.7" height="8.5" fill="#7a5440"/>
<text x="803.6" y="292.3" font-size="8.5" fill="#f4f4f0" font-family="Liberation Sans" text-anchor="middle" textLength="15" lengthAdjust="spacingAndGlyphs" transform="rotate(-90 803.6 292.3)">C16</text>
<path d="M837.5,303.3 V316.2 M852,281.8 H858.5 L862,284.8 H871" fill="none" stroke="#436431" stroke-width="1.3"/>
<circle cx="849.4" cy="308" r="2.6" fill="#436431"/><circle cx="849.4" cy="308" r="1.3" fill="#b8b8d8"/>
<circle cx="795.4" cy="286.3" r="1.3" fill="#b8b8d8"/>
<circle cx="823.8" cy="287" r="1.3" fill="#b8b8d8"/>
<circle cx="823.8" cy="296.4" r="1.3" fill="#b8b8d8"/>
<rect x="834.5" y="286.7" width="18" height="10" fill="#2c2c2c"/>
<rect x="835.8" y="280.5" width="3.4" height="6" fill="#eaeae4"/>
<rect x="847.7" y="280.5" width="3.4" height="6" fill="#eaeae4"/>
<rect x="835.8" y="297.7" width="3.4" height="5.8" fill="#eaeae4"/>
<rect x="841.8" y="297.7" width="3.4" height="5.8" fill="#eaeae4"/>
<rect x="847.7" y="297.7" width="3.4" height="5.8" fill="#eaeae4"/>
<path d="M833,286.3 V299.3 M854.6,286.3 V299.3" stroke="#c8d0c8" stroke-width="0.9"/>
<circle cx="831.5" cy="302.3" r="1.3" fill="#fff"/>
<text x="858" y="276.5" font-size="8.5" fill="#f4f4f0" font-family="Liberation Sans" textLength="15" lengthAdjust="spacingAndGlyphs">U13</text>
<rect x="870.7" y="280.8" width="8.6" height="23" rx="2" fill="#f0f0ea"/><rect x="870.7" y="288.05" width="8.6" height="8.51" fill="#1a1a1a"/>
<text x="891.5" y="292.3" font-size="8.5" fill="#f4f4f0" font-family="Liberation Sans" text-anchor="middle" textLength="15" lengthAdjust="spacingAndGlyphs" transform="rotate(-90 891.5 292.3)">R47</text>
<circle cx="824.5" cy="320.7" r="7.6" fill="#1d3a2b"/><circle cx="839.5" cy="320.7" r="7.6" fill="#1d3a2b"/>
<path d="M813,320.7 H823 M824.5,310.7 V330.7 M839.5,310.7 V330.7" stroke="#42632f" stroke-width="1.6"/>
<line x1="843" y1="320.7" x2="857.5" y2="320.7" stroke="#436431" stroke-width="2"/>
<rect x="821" y="316.2" width="22" height="9" rx="2" fill="#f0f0ea"/><rect x="827.49" y="316.2" width="9.02" height="9" fill="#1a1a1a"/>
<text x="816.5" y="324.1" font-size="8.5" fill="#f4f4f0" font-family="Liberation Sans" text-anchor="end" textLength="15" lengthAdjust="spacingAndGlyphs">R34</text>
<circle cx="857.5" cy="320.7" r="1.5" fill="#b8b8d8"/>
<circle cx="814.6" cy="342.35" r="7.8" fill="#1d3a2b"/><circle cx="814.6" cy="358.35" r="7.8" fill="#1d3a2b"/>
<path d="M814.6,333.35 V367.35 M805,342.35 H824 M805,358.35 H824" stroke="#42632f" stroke-width="1.6"/>
<rect x="810.3" y="338.55" width="8.7" height="23" rx="2" fill="#f0f0ea"/>
<rect x="810.3" y="345.65" width="8.7" height="8.5" fill="#7a5440"/>
<text x="803.6" y="350.35" font-size="8.5" fill="#f4f4f0" font-family="Liberation Sans" text-anchor="middle" textLength="15" lengthAdjust="spacingAndGlyphs" transform="rotate(-90 803.6 350.35)">C15</text>
<path d="M837.5,361.35 V374.25 M852,339.85 H858.5 L862,342.85 H871" fill="none" stroke="#436431" stroke-width="1.3"/>
<circle cx="849.4" cy="366.05" r="2.6" fill="#436431"/><circle cx="849.4" cy="366.05" r="1.3" fill="#b8b8d8"/>
<circle cx="795.4" cy="335.15" r="4.2" fill="#1d3a2b"/><circle cx="795.4" cy="335.15" r="1.4" fill="#b8b8d8"/>
<circle cx="795.4" cy="344.35" r="1.3" fill="#b8b8d8"/>
<circle cx="823.8" cy="345.05" r="1.3" fill="#b8b8d8"/>
<circle cx="823.8" cy="354.45" r="1.3" fill="#b8b8d8"/>
<rect x="834.5" y="344.75" width="18" height="10" fill="#2c2c2c"/>
<rect x="835.8" y="338.55" width="3.4" height="6" fill="#eaeae4"/>
<rect x="847.7" y="338.55" width="3.4" height="6" fill="#eaeae4"/>
<rect x="835.8" y="355.75" width="3.4" height="5.8" fill="#eaeae4"/>
<rect x="841.8" y="355.75" width="3.4" height="5.8" fill="#eaeae4"/>
<rect x="847.7" y="355.75" width="3.4" height="5.8" fill="#eaeae4"/>
<path d="M833,344.35 V357.35 M854.6,344.35 V357.35" stroke="#c8d0c8" stroke-width="0.9"/>
<circle cx="831.5" cy="360.35" r="1.3" fill="#fff"/>
<text x="851" y="331.85" font-size="8.5" fill="#f4f4f0" font-family="Liberation Sans" textLength="15" lengthAdjust="spacingAndGlyphs">U12</text>
<rect x="870.7" y="338.85" width="8.6" height="23" rx="2" fill="#f0f0ea"/><rect x="870.7" y="346.1" width="8.6" height="8.51" fill="#1a1a1a"/>
<text x="891.5" y="350.35" font-size="8.5" fill="#f4f4f0" font-family="Liberation Sans" text-anchor="middle" textLength="15" lengthAdjust="spacingAndGlyphs" transform="rotate(-90 891.5 350.35)">R46</text>
<circle cx="824.5" cy="378.75" r="7.6" fill="#1d3a2b"/><circle cx="839.5" cy="378.75" r="7.6" fill="#1d3a2b"/>
<path d="M813,378.75 H823 M824.5,368.75 V388.75 M839.5,368.75 V388.75" stroke="#42632f" stroke-width="1.6"/>
<line x1="843" y1="378.75" x2="857.5" y2="378.75" stroke="#436431" stroke-width="2"/>
<rect x="821" y="374.25" width="22" height="9" rx="2" fill="#f0f0ea"/><rect x="827.49" y="374.25" width="9.02" height="9" fill="#1a1a1a"/>
<text x="816.5" y="382.15" font-size="8.5" fill="#f4f4f0" font-family="Liberation Sans" text-anchor="end" textLength="15" lengthAdjust="spacingAndGlyphs">R33</text>
<circle cx="857.5" cy="378.75" r="1.5" fill="#b8b8d8"/>
<circle cx="814.6" cy="400.4" r="7.8" fill="#1d3a2b"/><circle cx="814.6" cy="416.4" r="7.8" fill="#1d3a2b"/>
<path d="M814.6,391.4 V425.4 M805,400.4 H824 M805,416.4 H824" stroke="#42632f" stroke-width="1.6"/>
<rect x="810.3" y="396.6" width="8.7" height="23" rx="2" fill="#f0f0ea"/>
<rect x="810.3" y="403.7" width="8.7" height="8.5" fill="#7a5440"/>
<text x="803.6" y="408.4" font-size="8.5" fill="#f4f4f0" font-family="Liberation Sans" text-anchor="middle" textLength="15" lengthAdjust="spacingAndGlyphs" transform="rotate(-90 803.6 408.4)">C14</text>
<path d="M837.5,419.4 V432.3 M852,397.9 H858.5 L862,400.9 H871" fill="none" stroke="#436431" stroke-width="1.3"/>
<circle cx="849.4" cy="424.1" r="2.6" fill="#436431"/><circle cx="849.4" cy="424.1" r="1.3" fill="#b8b8d8"/>
<circle cx="795.4" cy="393.2" r="4.2" fill="#1d3a2b"/><circle cx="795.4" cy="393.2" r="1.4" fill="#b8b8d8"/>
<circle cx="795.4" cy="402.4" r="1.3" fill="#b8b8d8"/>
<circle cx="823.8" cy="403.1" r="1.3" fill="#b8b8d8"/>
<circle cx="823.8" cy="412.5" r="1.3" fill="#b8b8d8"/>
<rect x="834.5" y="402.8" width="18" height="10" fill="#2c2c2c"/>
<rect x="835.8" y="396.6" width="3.4" height="6" fill="#eaeae4"/>
<rect x="847.7" y="396.6" width="3.4" height="6" fill="#eaeae4"/>
<rect x="835.8" y="413.8" width="3.4" height="5.8" fill="#eaeae4"/>
<rect x="841.8" y="413.8" width="3.4" height="5.8" fill="#eaeae4"/>
<rect x="847.7" y="413.8" width="3.4" height="5.8" fill="#eaeae4"/>
<path d="M833,402.4 V415.4 M854.6,402.4 V415.4" stroke="#c8d0c8" stroke-width="0.9"/>
<circle cx="831.5" cy="418.4" r="1.3" fill="#fff"/>
<text x="851" y="389.9" font-size="8.5" fill="#f4f4f0" font-family="Liberation Sans" textLength="15" lengthAdjust="spacingAndGlyphs">U11</text>
<rect x="870.7" y="396.9" width="8.6" height="23" rx="2" fill="#f0f0ea"/><rect x="870.7" y="404.15" width="8.6" height="8.51" fill="#1a1a1a"/>
<text x="891.5" y="408.4" font-size="8.5" fill="#f4f4f0" font-family="Liberation Sans" text-anchor="middle" textLength="15" lengthAdjust="spacingAndGlyphs" transform="rotate(-90 891.5 408.4)">R45</text>
<circle cx="824.5" cy="436.8" r="7.6" fill="#1d3a2b"/><circle cx="839.5" cy="436.8" r="7.6" fill="#1d3a2b"/>
<path d="M813,436.8 H823 M824.5,426.8 V446.8 M839.5,426.8 V446.8" stroke="#42632f" stroke-width="1.6"/>
<line x1="843" y1="436.8" x2="857.5" y2="436.8" stroke="#436431" stroke-width="2"/>
<rect x="821" y="432.3" width="22" height="9" rx="2" fill="#f0f0ea"/><rect x="827.49" y="432.3" width="9.02" height="9" fill="#1a1a1a"/>
<text x="816.5" y="440.2" font-size="8.5" fill="#f4f4f0" font-family="Liberation Sans" text-anchor="end" textLength="15" lengthAdjust="spacingAndGlyphs">R32</text>
<circle cx="857.5" cy="436.8" r="1.5" fill="#b8b8d8"/>
<circle cx="814.6" cy="458.45" r="7.8" fill="#1d3a2b"/><circle cx="814.6" cy="474.45" r="7.8" fill="#1d3a2b"/>
<path d="M814.6,449.45 V483.45 M805,458.45 H824 M805,474.45 H824" stroke="#42632f" stroke-width="1.6"/>
<rect x="810.3" y="454.65" width="8.7" height="23" rx="2" fill="#f0f0ea"/>
<rect x="810.3" y="461.75" width="8.7" height="8.5" fill="#7a5440"/>
<text x="803.6" y="466.45" font-size="8.5" fill="#f4f4f0" font-family="Liberation Sans" text-anchor="middle" textLength="15" lengthAdjust="spacingAndGlyphs" transform="rotate(-90 803.6 466.45)">C13</text>
<path d="M837.5,477.45 V490.35 M852,455.95 H858.5 L862,458.95 H871" fill="none" stroke="#436431" stroke-width="1.3"/>
<circle cx="849.4" cy="482.15" r="2.6" fill="#436431"/><circle cx="849.4" cy="482.15" r="1.3" fill="#b8b8d8"/>
<circle cx="795.4" cy="451.25" r="4.2" fill="#1d3a2b"/><circle cx="795.4" cy="451.25" r="1.4" fill="#b8b8d8"/>
<circle cx="795.4" cy="460.45" r="1.3" fill="#b8b8d8"/>
<circle cx="823.8" cy="461.15" r="1.3" fill="#b8b8d8"/>
<circle cx="823.8" cy="470.55" r="1.3" fill="#b8b8d8"/>
<rect x="834.5" y="460.85" width="18" height="10" fill="#2c2c2c"/>
<rect x="835.8" y="454.65" width="3.4" height="6" fill="#eaeae4"/>
<rect x="847.7" y="454.65" width="3.4" height="6" fill="#eaeae4"/>
<rect x="835.8" y="471.85" width="3.4" height="5.8" fill="#eaeae4"/>
<rect x="841.8" y="471.85" width="3.4" height="5.8" fill="#eaeae4"/>
<rect x="847.7" y="471.85" width="3.4" height="5.8" fill="#eaeae4"/>
<path d="M833,460.45 V473.45 M854.6,460.45 V473.45" stroke="#c8d0c8" stroke-width="0.9"/>
<circle cx="831.5" cy="476.45" r="1.3" fill="#fff"/>
<text x="851" y="447.95" font-size="8.5" fill="#f4f4f0" font-family="Liberation Sans" textLength="15" lengthAdjust="spacingAndGlyphs">U10</text>
<rect x="870.7" y="454.95" width="8.6" height="23" rx="2" fill="#f0f0ea"/><rect x="870.7" y="462.19" width="8.6" height="8.51" fill="#1a1a1a"/>
<text x="891.5" y="466.45" font-size="8.5" fill="#f4f4f0" font-family="Liberation Sans" text-anchor="middle" textLength="15" lengthAdjust="spacingAndGlyphs" transform="rotate(-90 891.5 466.45)">R13</text>
<circle cx="824.5" cy="494.85" r="7.6" fill="#1d3a2b"/><circle cx="839.5" cy="494.85" r="7.6" fill="#1d3a2b"/>
<path d="M813,494.85 H823 M824.5,484.85 V504.85 M839.5,484.85 V504.85" stroke="#42632f" stroke-width="1.6"/>
<line x1="843" y1="494.85" x2="857.5" y2="494.85" stroke="#436431" stroke-width="2"/>
<rect x="821" y="490.35" width="22" height="9" rx="2" fill="#f0f0ea"/><rect x="827.49" y="490.35" width="9.02" height="9" fill="#1a1a1a"/>
<text x="816.5" y="498.25" font-size="8.5" fill="#f4f4f0" font-family="Liberation Sans" text-anchor="end" textLength="15" lengthAdjust="spacingAndGlyphs">R31</text>
<circle cx="857.5" cy="494.85" r="1.5" fill="#b8b8d8"/>
<circle cx="814.6" cy="516.5" r="7.8" fill="#1d3a2b"/><circle cx="814.6" cy="532.5" r="7.8" fill="#1d3a2b"/>
<path d="M814.6,507.5 V541.5 M805,516.5 H824 M805,532.5 H824" stroke="#42632f" stroke-width="1.6"/>
<rect x="810.3" y="512.7" width="8.7" height="23" rx="2" fill="#f0f0ea"/>
<rect x="810.3" y="519.8" width="8.7" height="8.5" fill="#7a5440"/>
<text x="803.6" y="524.5" font-size="8.5" fill="#f4f4f0" font-family="Liberation Sans" text-anchor="middle" textLength="15" lengthAdjust="spacingAndGlyphs" transform="rotate(-90 803.6 524.5)">C12</text>
<path d="M837.5,535.5 V548.4 M852,514 H858.5 L862,517 H871" fill="none" stroke="#436431" stroke-width="1.3"/>
<circle cx="849.4" cy="540.2" r="2.6" fill="#436431"/><circle cx="849.4" cy="540.2" r="1.3" fill="#b8b8d8"/>
<circle cx="795.4" cy="509.3" r="4.2" fill="#1d3a2b"/><circle cx="795.4" cy="509.3" r="1.4" fill="#b8b8d8"/>
<circle cx="795.4" cy="518.5" r="1.3" fill="#b8b8d8"/>
<circle cx="823.8" cy="519.2" r="1.3" fill="#b8b8d8"/>
<circle cx="823.8" cy="528.6" r="1.3" fill="#b8b8d8"/>
<rect x="834.5" y="518.9" width="18" height="10" fill="#2c2c2c"/>
<rect x="835.8" y="512.7" width="3.4" height="6" fill="#eaeae4"/>
<rect x="847.7" y="512.7" width="3.4" height="6" fill="#eaeae4"/>
<rect x="835.8" y="529.9" width="3.4" height="5.8" fill="#eaeae4"/>
<rect x="841.8" y="529.9" width="3.4" height="5.8" fill="#eaeae4"/>
<rect x="847.7" y="529.9" width="3.4" height="5.8" fill="#eaeae4"/>
<path d="M833,518.5 V531.5 M854.6,518.5 V531.5" stroke="#c8d0c8" stroke-width="0.9"/>
<circle cx="831.5" cy="534.5" r="1.3" fill="#fff"/>
<text x="851" y="506" font-size="8.5" fill="#f4f4f0" font-family="Liberation Sans" textLength="10" lengthAdjust="spacingAndGlyphs">U9</text>
<rect x="870.7" y="513" width="8.6" height="23" rx="2" fill="#f0f0ea"/><rect x="870.7" y="520.25" width="8.6" height="8.51" fill="#1a1a1a"/>
<text x="891.5" y="524.5" font-size="8.5" fill="#f4f4f0" font-family="Liberation Sans" text-anchor="middle" textLength="15" lengthAdjust="spacingAndGlyphs" transform="rotate(-90 891.5 524.5)">R12</text>
<circle cx="824.5" cy="552.9" r="7.6" fill="#1d3a2b"/><circle cx="839.5" cy="552.9" r="7.6" fill="#1d3a2b"/>
<path d="M813,552.9 H823 M824.5,542.9 V562.9 M839.5,542.9 V562.9" stroke="#42632f" stroke-width="1.6"/>
<line x1="843" y1="552.9" x2="857.5" y2="552.9" stroke="#436431" stroke-width="2"/>
<rect x="821" y="548.4" width="22" height="9" rx="2" fill="#f0f0ea"/><rect x="827.49" y="548.4" width="9.02" height="9" fill="#1a1a1a"/>
<text x="816.5" y="556.3" font-size="8.5" fill="#f4f4f0" font-family="Liberation Sans" text-anchor="end" textLength="15" lengthAdjust="spacingAndGlyphs">R30</text>
<circle cx="857.5" cy="552.9" r="1.5" fill="#b8b8d8"/>
<circle cx="814.6" cy="574.55" r="7.8" fill="#1d3a2b"/><circle cx="814.6" cy="590.55" r="7.8" fill="#1d3a2b"/>
<path d="M814.6,565.55 V599.55 M805,574.55 H824 M805,590.55 H824" stroke="#42632f" stroke-width="1.6"/>
<rect x="810.3" y="570.75" width="8.7" height="23" rx="2" fill="#f0f0ea"/>
<rect x="810.3" y="577.85" width="8.7" height="8.5" fill="#7a5440"/>
<text x="803.6" y="582.55" font-size="8.5" fill="#f4f4f0" font-family="Liberation Sans" text-anchor="middle" textLength="15" lengthAdjust="spacingAndGlyphs" transform="rotate(-90 803.6 582.55)">C11</text>
<path d="M837.5,593.55 V606.45 M852,572.05 H858.5 L862,575.05 H871" fill="none" stroke="#436431" stroke-width="1.3"/>
<circle cx="849.4" cy="598.25" r="2.6" fill="#436431"/><circle cx="849.4" cy="598.25" r="1.3" fill="#b8b8d8"/>
<circle cx="795.4" cy="567.35" r="4.2" fill="#1d3a2b"/><circle cx="795.4" cy="567.35" r="1.4" fill="#b8b8d8"/>
<circle cx="795.4" cy="576.55" r="1.3" fill="#b8b8d8"/>
<circle cx="823.8" cy="577.25" r="1.3" fill="#b8b8d8"/>
<circle cx="823.8" cy="586.65" r="1.3" fill="#b8b8d8"/>
<rect x="834.5" y="576.95" width="18" height="10" fill="#2c2c2c"/>
<rect x="835.8" y="570.75" width="3.4" height="6" fill="#eaeae4"/>
<rect x="847.7" y="570.75" width="3.4" height="6" fill="#eaeae4"/>
<rect x="835.8" y="587.95" width="3.4" height="5.8" fill="#eaeae4"/>
<rect x="841.8" y="587.95" width="3.4" height="5.8" fill="#eaeae4"/>
<rect x="847.7" y="587.95" width="3.4" height="5.8" fill="#eaeae4"/>
<path d="M833,576.55 V589.55 M854.6,576.55 V589.55" stroke="#c8d0c8" stroke-width="0.9"/>
<circle cx="831.5" cy="592.55" r="1.3" fill="#fff"/>
<text x="851" y="564.05" font-size="8.5" fill="#f4f4f0" font-family="Liberation Sans" textLength="10" lengthAdjust="spacingAndGlyphs">U8</text>
<rect x="870.7" y="571.05" width="8.6" height="23" rx="2" fill="#f0f0ea"/><rect x="870.7" y="578.29" width="8.6" height="8.51" fill="#1a1a1a"/>
<text x="891.5" y="582.55" font-size="8.5" fill="#f4f4f0" font-family="Liberation Sans" text-anchor="middle" textLength="15" lengthAdjust="spacingAndGlyphs" transform="rotate(-90 891.5 582.55)">R16</text>
<circle cx="824.5" cy="610.95" r="7.6" fill="#1d3a2b"/><circle cx="839.5" cy="610.95" r="7.6" fill="#1d3a2b"/>
<path d="M813,610.95 H823 M824.5,600.95 V620.95 M839.5,600.95 V620.95" stroke="#42632f" stroke-width="1.6"/>
<line x1="843" y1="610.95" x2="857.5" y2="610.95" stroke="#436431" stroke-width="2"/>
<rect x="821" y="606.45" width="22" height="9" rx="2" fill="#f0f0ea"/><rect x="827.49" y="606.45" width="9.02" height="9" fill="#1a1a1a"/>
<text x="816.5" y="614.35" font-size="8.5" fill="#f4f4f0" font-family="Liberation Sans" text-anchor="end" textLength="15" lengthAdjust="spacingAndGlyphs">R29</text>
<circle cx="857.5" cy="610.95" r="1.5" fill="#b8b8d8"/>
<circle cx="814.6" cy="632.6" r="7.8" fill="#1d3a2b"/><circle cx="814.6" cy="648.6" r="7.8" fill="#1d3a2b"/>
<path d="M814.6,623.6 V657.6 M805,632.6 H824 M805,648.6 H824" stroke="#42632f" stroke-width="1.6"/>
<rect x="810.3" y="628.8" width="8.7" height="23" rx="2" fill="#f0f0ea"/>
<rect x="810.3" y="635.9" width="8.7" height="8.5" fill="#7a5440"/>
<text x="803.6" y="640.6" font-size="8.5" fill="#f4f4f0" font-family="Liberation Sans" text-anchor="middle" textLength="15" lengthAdjust="spacingAndGlyphs" transform="rotate(-90 803.6 640.6)">C6</text>
<path d="M837.5,651.6 V664.5 M852,630.1 H858.5 L862,633.1 H871" fill="none" stroke="#436431" stroke-width="1.3"/>
<circle cx="849.4" cy="656.3" r="2.6" fill="#436431"/><circle cx="849.4" cy="656.3" r="1.3" fill="#b8b8d8"/>
<circle cx="795.4" cy="625.4" r="4.2" fill="#1d3a2b"/><circle cx="795.4" cy="625.4" r="1.4" fill="#b8b8d8"/>
<circle cx="795.4" cy="634.6" r="1.3" fill="#b8b8d8"/>
<circle cx="823.8" cy="635.3" r="1.3" fill="#b8b8d8"/>
<circle cx="823.8" cy="644.7" r="1.3" fill="#b8b8d8"/>
<rect x="834.5" y="635" width="18" height="10" fill="#2c2c2c"/>
<rect x="835.8" y="628.8" width="3.4" height="6" fill="#eaeae4"/>
<rect x="847.7" y="628.8" width="3.4" height="6" fill="#eaeae4"/>
<rect x="835.8" y="646" width="3.4" height="5.8" fill="#eaeae4"/>
<rect x="841.8" y="646" width="3.4" height="5.8" fill="#eaeae4"/>
<rect x="847.7" y="646" width="3.4" height="5.8" fill="#eaeae4"/>
<path d="M833,634.6 V647.6 M854.6,634.6 V647.6" stroke="#c8d0c8" stroke-width="0.9"/>
<circle cx="831.5" cy="650.6" r="1.3" fill="#fff"/>
<text x="830.5" y="638.6" font-size="8.5" fill="#f4f4f0" font-family="Liberation Sans" text-anchor="middle" textLength="10" lengthAdjust="spacingAndGlyphs" transform="rotate(-90 830.5 638.6)">U7</text>
<rect x="870.7" y="629.1" width="8.6" height="23" rx="2" fill="#f0f0ea"/><rect x="870.7" y="636.34" width="8.6" height="8.51" fill="#1a1a1a"/>
<text x="891.5" y="640.6" font-size="8.5" fill="#f4f4f0" font-family="Liberation Sans" text-anchor="middle" textLength="15" lengthAdjust="spacingAndGlyphs" transform="rotate(-90 891.5 640.6)">R14</text>
<circle cx="824.5" cy="669" r="7.6" fill="#1d3a2b"/><circle cx="839.5" cy="669" r="7.6" fill="#1d3a2b"/>
<path d="M813,669 H823 M824.5,659 V679 M839.5,659 V679" stroke="#42632f" stroke-width="1.6"/>
<line x1="843" y1="669" x2="857.5" y2="669" stroke="#436431" stroke-width="2"/>
<rect x="821" y="664.5" width="22" height="9" rx="2" fill="#f0f0ea"/><rect x="827.49" y="664.5" width="9.02" height="9" fill="#1a1a1a"/>
<text x="832" y="659.7" font-size="8.5" fill="#f4f4f0" font-family="Liberation Sans" text-anchor="middle" textLength="15" lengthAdjust="spacingAndGlyphs">R28</text>
<circle cx="857.5" cy="669" r="1.5" fill="#b8b8d8"/>
<circle cx="814.6" cy="690.65" r="7.8" fill="#1d3a2b"/><circle cx="814.6" cy="706.65" r="7.8" fill="#1d3a2b"/>
<path d="M814.6,681.65 V715.65 M805,690.65 H824 M805,706.65 H824" stroke="#42632f" stroke-width="1.6"/>
<rect x="810.3" y="686.85" width="8.7" height="23" rx="2" fill="#f0f0ea"/>
<rect x="810.3" y="693.95" width="8.7" height="8.5" fill="#7a5440"/>
<text x="803.6" y="698.65" font-size="8.5" fill="#f4f4f0" font-family="Liberation Sans" text-anchor="middle" textLength="15" lengthAdjust="spacingAndGlyphs" transform="rotate(-90 803.6 698.65)">C5</text>
<path d="M837.5,709.65 V722.55 M852,688.15 H858.5 L862,691.15 H871" fill="none" stroke="#436431" stroke-width="1.3"/>
<circle cx="849.4" cy="714.35" r="2.6" fill="#436431"/><circle cx="849.4" cy="714.35" r="1.3" fill="#b8b8d8"/>
<circle cx="795.4" cy="683.45" r="4.2" fill="#1d3a2b"/><circle cx="795.4" cy="683.45" r="1.4" fill="#b8b8d8"/>
<circle cx="795.4" cy="692.65" r="1.3" fill="#b8b8d8"/>
<circle cx="823.8" cy="693.35" r="1.3" fill="#b8b8d8"/>
<circle cx="823.8" cy="702.75" r="1.3" fill="#b8b8d8"/>
<rect x="834.5" y="693.05" width="18" height="10" fill="#2c2c2c"/>
<rect x="835.8" y="686.85" width="3.4" height="6" fill="#eaeae4"/>
<rect x="847.7" y="686.85" width="3.4" height="6" fill="#eaeae4"/>
<rect x="835.8" y="704.05" width="3.4" height="5.8" fill="#eaeae4"/>
<rect x="841.8" y="704.05" width="3.4" height="5.8" fill="#eaeae4"/>
<rect x="847.7" y="704.05" width="3.4" height="5.8" fill="#eaeae4"/>
<path d="M833,692.65 V705.65 M854.6,692.65 V705.65" stroke="#c8d0c8" stroke-width="0.9"/>
<circle cx="831.5" cy="708.65" r="1.3" fill="#fff"/>
<text x="851" y="680.15" font-size="8.5" fill="#f4f4f0" font-family="Liberation Sans" textLength="10" lengthAdjust="spacingAndGlyphs">U6</text>
<rect x="870.7" y="687.15" width="8.6" height="23" rx="2" fill="#f0f0ea"/><rect x="870.7" y="694.39" width="8.6" height="8.51" fill="#1a1a1a"/>
<text x="891.5" y="698.65" font-size="8.5" fill="#f4f4f0" font-family="Liberation Sans" text-anchor="middle" textLength="10" lengthAdjust="spacingAndGlyphs" transform="rotate(-90 891.5 698.65)">R9</text>
<circle cx="824.5" cy="727.05" r="7.6" fill="#1d3a2b"/><circle cx="839.5" cy="727.05" r="7.6" fill="#1d3a2b"/>
<path d="M813,727.05 H823 M824.5,717.05 V737.05 M839.5,717.05 V737.05" stroke="#42632f" stroke-width="1.6"/>
<line x1="843" y1="727.05" x2="857.5" y2="727.05" stroke="#436431" stroke-width="2"/>
<rect x="821" y="722.55" width="22" height="9" rx="2" fill="#f0f0ea"/><rect x="827.49" y="722.55" width="9.02" height="9" fill="#1a1a1a"/>
<text x="816.5" y="730.45" font-size="8.5" fill="#f4f4f0" font-family="Liberation Sans" text-anchor="end" textLength="15" lengthAdjust="spacingAndGlyphs">R27</text>
<circle cx="857.5" cy="727.05" r="1.5" fill="#b8b8d8"/>
<circle cx="814.6" cy="748.7" r="7.8" fill="#1d3a2b"/><circle cx="814.6" cy="764.7" r="7.8" fill="#1d3a2b"/>
<path d="M814.6,739.7 V773.7 M805,748.7 H824 M805,764.7 H824" stroke="#42632f" stroke-width="1.6"/>
<rect x="810.3" y="744.9" width="8.7" height="23" rx="2" fill="#f0f0ea"/>
<rect x="810.3" y="752" width="8.7" height="8.5" fill="#7a5440"/>
<text x="803.6" y="756.7" font-size="8.5" fill="#f4f4f0" font-family="Liberation Sans" text-anchor="middle" textLength="15" lengthAdjust="spacingAndGlyphs" transform="rotate(-90 803.6 756.7)">C4</text>
<path d="M837.5,767.7 V780.6 M852,746.2 H858.5 L862,749.2 H871" fill="none" stroke="#436431" stroke-width="1.3"/>
<circle cx="849.4" cy="772.4" r="2.6" fill="#436431"/><circle cx="849.4" cy="772.4" r="1.3" fill="#b8b8d8"/>
<circle cx="795.4" cy="741.5" r="4.2" fill="#1d3a2b"/><circle cx="795.4" cy="741.5" r="1.4" fill="#b8b8d8"/>
<circle cx="795.4" cy="750.7" r="1.3" fill="#b8b8d8"/>
<circle cx="823.8" cy="751.4" r="1.3" fill="#b8b8d8"/>
<circle cx="823.8" cy="760.8" r="1.3" fill="#b8b8d8"/>
<rect x="834.5" y="751.1" width="18" height="10" fill="#2c2c2c"/>
<rect x="835.8" y="744.9" width="3.4" height="6" fill="#eaeae4"/>
<rect x="847.7" y="744.9" width="3.4" height="6" fill="#eaeae4"/>
<rect x="835.8" y="762.1" width="3.4" height="5.8" fill="#eaeae4"/>
<rect x="841.8" y="762.1" width="3.4" height="5.8" fill="#eaeae4"/>
<rect x="847.7" y="762.1" width="3.4" height="5.8" fill="#eaeae4"/>
<path d="M833,750.7 V763.7 M854.6,750.7 V763.7" stroke="#c8d0c8" stroke-width="0.9"/>
<circle cx="831.5" cy="766.7" r="1.3" fill="#fff"/>
<text x="851" y="738.2" font-size="8.5" fill="#f4f4f0" font-family="Liberation Sans" textLength="10" lengthAdjust="spacingAndGlyphs">U5</text>
<rect x="870.7" y="745.2" width="8.6" height="23" rx="2" fill="#f0f0ea"/><rect x="870.7" y="752.44" width="8.6" height="8.51" fill="#1a1a1a"/>
<text x="891.5" y="756.7" font-size="8.5" fill="#f4f4f0" font-family="Liberation Sans" text-anchor="middle" textLength="10" lengthAdjust="spacingAndGlyphs" transform="rotate(-90 891.5 756.7)">R5</text>
<circle cx="824.5" cy="785.1" r="7.6" fill="#1d3a2b"/><circle cx="839.5" cy="785.1" r="7.6" fill="#1d3a2b"/>
<path d="M813,785.1 H823 M824.5,775.1 V795.1 M839.5,775.1 V795.1" stroke="#42632f" stroke-width="1.6"/>
<line x1="843" y1="785.1" x2="857.5" y2="785.1" stroke="#436431" stroke-width="2"/>
<rect x="821" y="780.6" width="22" height="9" rx="2" fill="#f0f0ea"/><rect x="827.49" y="780.6" width="9.02" height="9" fill="#1a1a1a"/>
<text x="816.5" y="788.5" font-size="8.5" fill="#f4f4f0" font-family="Liberation Sans" text-anchor="end" textLength="15" lengthAdjust="spacingAndGlyphs">R21</text>
<circle cx="857.5" cy="785.1" r="1.5" fill="#b8b8d8"/>
<circle cx="814.6" cy="806.75" r="7.8" fill="#1d3a2b"/><circle cx="814.6" cy="822.75" r="7.8" fill="#1d3a2b"/>
<path d="M814.6,797.75 V831.75 M805,806.75 H824 M805,822.75 H824" stroke="#42632f" stroke-width="1.6"/>
<rect x="810.3" y="802.95" width="8.7" height="23" rx="2" fill="#f0f0ea"/>
<rect x="810.3" y="810.05" width="8.7" height="8.5" fill="#7a5440"/>
<text x="803.6" y="814.75" font-size="8.5" fill="#f4f4f0" font-family="Liberation Sans" text-anchor="middle" textLength="15" lengthAdjust="spacingAndGlyphs" transform="rotate(-90 803.6 814.75)">C3</text>
<path d="M837.5,825.75 V838.65 M852,807.15 H856 L884.5,834.75" fill="none" stroke="#436431" stroke-width="1.3"/>
<circle cx="849.4" cy="830.45" r="2.6" fill="#436431"/><circle cx="849.4" cy="830.45" r="1.3" fill="#b8b8d8"/>
<circle cx="795.4" cy="799.55" r="4.2" fill="#1d3a2b"/><circle cx="795.4" cy="799.55" r="1.4" fill="#b8b8d8"/>
<circle cx="795.4" cy="808.75" r="1.3" fill="#b8b8d8"/>
<circle cx="823.8" cy="809.45" r="1.3" fill="#b8b8d8"/>
<circle cx="823.8" cy="818.85" r="1.3" fill="#b8b8d8"/>
<rect x="834.5" y="809.15" width="18" height="10" fill="#2c2c2c"/>
<rect x="835.8" y="802.95" width="3.4" height="6" fill="#eaeae4"/>
<rect x="847.7" y="802.95" width="3.4" height="6" fill="#eaeae4"/>
<rect x="835.8" y="820.15" width="3.4" height="5.8" fill="#eaeae4"/>
<rect x="841.8" y="820.15" width="3.4" height="5.8" fill="#eaeae4"/>
<rect x="847.7" y="820.15" width="3.4" height="5.8" fill="#eaeae4"/>
<path d="M833,808.75 V821.75 M854.6,808.75 V821.75" stroke="#c8d0c8" stroke-width="0.9"/>
<circle cx="831.5" cy="824.75" r="1.3" fill="#fff"/>
<text x="851" y="796.25" font-size="8.5" fill="#f4f4f0" font-family="Liberation Sans" textLength="10" lengthAdjust="spacingAndGlyphs">U3</text>
<circle cx="824.5" cy="843.15" r="7.6" fill="#1d3a2b"/><circle cx="839.5" cy="843.15" r="7.6" fill="#1d3a2b"/>
<path d="M813,843.15 H823 M824.5,833.15 V853.15 M839.5,833.15 V853.15" stroke="#42632f" stroke-width="1.6"/>
<line x1="843" y1="843.15" x2="857.5" y2="843.15" stroke="#436431" stroke-width="2"/>
<rect x="821" y="838.65" width="22" height="9" rx="2" fill="#f0f0ea"/><rect x="827.49" y="838.65" width="9.02" height="9" fill="#1a1a1a"/>
<text x="816.5" y="846.55" font-size="8.5" fill="#f4f4f0" font-family="Liberation Sans" text-anchor="end" textLength="15" lengthAdjust="spacingAndGlyphs">R20</text>
<circle cx="857.5" cy="843.15" r="1.5" fill="#b8b8d8"/>
<circle cx="814.6" cy="864.8" r="7.8" fill="#1d3a2b"/><circle cx="814.6" cy="880.8" r="7.8" fill="#1d3a2b"/>
<path d="M814.6,855.8 V889.8 M805,864.8 H824 M805,880.8 H824" stroke="#42632f" stroke-width="1.6"/>
<rect x="810.3" y="861" width="8.7" height="23" rx="2" fill="#f0f0ea"/>
<rect x="810.3" y="868.1" width="8.7" height="8.5" fill="#7a5440"/>
<text x="803.6" y="872.8" font-size="8.5" fill="#f4f4f0" font-family="Liberation Sans" text-anchor="middle" textLength="15" lengthAdjust="spacingAndGlyphs" transform="rotate(-90 803.6 872.8)">C2</text>
<path d="M837.5,883.8 V896.7 M852,862.3 H858.5 L862,865.3 H871" fill="none" stroke="#436431" stroke-width="1.3"/>
<circle cx="849.4" cy="888.5" r="2.6" fill="#436431"/><circle cx="849.4" cy="888.5" r="1.3" fill="#b8b8d8"/>
<circle cx="795.4" cy="857.6" r="4.2" fill="#1d3a2b"/><circle cx="795.4" cy="857.6" r="1.4" fill="#b8b8d8"/>
<circle cx="795.4" cy="866.8" r="1.3" fill="#b8b8d8"/>
<circle cx="823.8" cy="867.5" r="1.3" fill="#b8b8d8"/>
<circle cx="823.8" cy="876.9" r="1.3" fill="#b8b8d8"/>
<rect x="834.5" y="867.2" width="18" height="10" fill="#2c2c2c"/>
<rect x="835.8" y="861" width="3.4" height="6" fill="#eaeae4"/>
<rect x="847.7" y="861" width="3.4" height="6" fill="#eaeae4"/>
<rect x="835.8" y="878.2" width="3.4" height="5.8" fill="#eaeae4"/>
<rect x="841.8" y="878.2" width="3.4" height="5.8" fill="#eaeae4"/>
<rect x="847.7" y="878.2" width="3.4" height="5.8" fill="#eaeae4"/>
<path d="M833,866.8 V879.8 M854.6,866.8 V879.8" stroke="#c8d0c8" stroke-width="0.9"/>
<circle cx="831.5" cy="882.8" r="1.3" fill="#fff"/>
<text x="851" y="854.3" font-size="8.5" fill="#f4f4f0" font-family="Liberation Sans" textLength="10" lengthAdjust="spacingAndGlyphs">U2</text>
<rect x="870.7" y="861.3" width="8.6" height="23" rx="2" fill="#f0f0ea"/><rect x="870.7" y="868.54" width="8.6" height="8.51" fill="#1a1a1a"/>
<text x="891.5" y="872.8" font-size="8.5" fill="#f4f4f0" font-family="Liberation Sans" text-anchor="middle" textLength="10" lengthAdjust="spacingAndGlyphs" transform="rotate(-90 891.5 872.8)">R3</text>
<circle cx="824.5" cy="901.2" r="7.6" fill="#1d3a2b"/><circle cx="839.5" cy="901.2" r="7.6" fill="#1d3a2b"/>
<path d="M813,901.2 H823 M824.5,891.2 V911.2 M839.5,891.2 V911.2" stroke="#42632f" stroke-width="1.6"/>
<line x1="843" y1="901.2" x2="857.5" y2="901.2" stroke="#436431" stroke-width="2"/>
<rect x="821" y="896.7" width="22" height="9" rx="2" fill="#f0f0ea"/><rect x="827.49" y="896.7" width="9.02" height="9" fill="#1a1a1a"/>
<text x="816.5" y="904.6" font-size="8.5" fill="#f4f4f0" font-family="Liberation Sans" text-anchor="end" textLength="15" lengthAdjust="spacingAndGlyphs">R19</text>
<circle cx="857.5" cy="901.2" r="1.5" fill="#b8b8d8"/>
<circle cx="814.6" cy="922.85" r="7.8" fill="#1d3a2b"/><circle cx="814.6" cy="938.85" r="7.8" fill="#1d3a2b"/>
<path d="M814.6,913.85 V947.85 M805,922.85 H824 M805,938.85 H824" stroke="#42632f" stroke-width="1.6"/>
<rect x="810.3" y="919.05" width="8.7" height="23" rx="2" fill="#f0f0ea"/>
<rect x="810.3" y="926.15" width="8.7" height="8.5" fill="#7a5440"/>
<text x="803.6" y="930.85" font-size="8.5" fill="#f4f4f0" font-family="Liberation Sans" text-anchor="middle" textLength="15" lengthAdjust="spacingAndGlyphs" transform="rotate(-90 803.6 930.85)">C1</text>
<path d="M837.5,941.85 V954.75 M852,920.35 H858.5 L862,923.35 H871" fill="none" stroke="#436431" stroke-width="1.3"/>
<circle cx="849.4" cy="946.55" r="2.6" fill="#436431"/><circle cx="849.4" cy="946.55" r="1.3" fill="#b8b8d8"/>
<circle cx="795.4" cy="915.65" r="4.2" fill="#1d3a2b"/><circle cx="795.4" cy="915.65" r="1.4" fill="#b8b8d8"/>
<circle cx="795.4" cy="924.85" r="1.3" fill="#b8b8d8"/>
<circle cx="823.8" cy="925.55" r="1.3" fill="#b8b8d8"/>
<circle cx="823.8" cy="934.95" r="1.3" fill="#b8b8d8"/>
<rect x="834.5" y="925.25" width="18" height="10" fill="#2c2c2c"/>
<rect x="835.8" y="919.05" width="3.4" height="6" fill="#eaeae4"/>
<rect x="847.7" y="919.05" width="3.4" height="6" fill="#eaeae4"/>
<rect x="835.8" y="936.25" width="3.4" height="5.8" fill="#eaeae4"/>
<rect x="841.8" y="936.25" width="3.4" height="5.8" fill="#eaeae4"/>
<rect x="847.7" y="936.25" width="3.4" height="5.8" fill="#eaeae4"/>
<path d="M833,924.85 V937.85 M854.6,924.85 V937.85" stroke="#c8d0c8" stroke-width="0.9"/>
<circle cx="831.5" cy="940.85" r="1.3" fill="#fff"/>
<text x="851" y="912.35" font-size="8.5" fill="#f4f4f0" font-family="Liberation Sans" textLength="10" lengthAdjust="spacingAndGlyphs">U1</text>
<rect x="870.7" y="919.35" width="8.6" height="23" rx="2" fill="#f0f0ea"/><rect x="870.7" y="926.59" width="8.6" height="8.51" fill="#1a1a1a"/>
<text x="891.5" y="930.85" font-size="8.5" fill="#f4f4f0" font-family="Liberation Sans" text-anchor="middle" textLength="10" lengthAdjust="spacingAndGlyphs" transform="rotate(-90 891.5 930.85)">R1</text>
<circle cx="824.5" cy="959.25" r="7.6" fill="#1d3a2b"/><circle cx="839.5" cy="959.25" r="7.6" fill="#1d3a2b"/>
<path d="M813,959.25 H823 M824.5,949.25 V969.25 M839.5,949.25 V969.25" stroke="#42632f" stroke-width="1.6"/>
<line x1="843" y1="959.25" x2="857.5" y2="959.25" stroke="#436431" stroke-width="2"/>
<rect x="821" y="954.75" width="22" height="9" rx="2" fill="#f0f0ea"/><rect x="827.49" y="954.75" width="9.02" height="9" fill="#1a1a1a"/>
<text x="816.5" y="962.65" font-size="8.5" fill="#f4f4f0" font-family="Liberation Sans" text-anchor="end" textLength="15" lengthAdjust="spacingAndGlyphs">R18</text>
<circle cx="857.5" cy="959.25" r="1.5" fill="#b8b8d8"/>
<path d="M1664,284 L1669,284 L1676,277 M1664,301 L1676,301" fill="none" stroke="#436431" stroke-width="1.6"/>
<path d="M1659.6,275 V282" stroke="#436431" stroke-width="1.4"/><circle cx="1659.4" cy="275" r="2.4" fill="#436431"/><circle cx="1659.4" cy="275" r="1.2" fill="#b8b8d8"/>
<rect x="1655.3" y="280" width="8.6" height="23" rx="2" fill="#f0f0ea"/><rect x="1655.3" y="287.25" width="8.6" height="8.51" fill="#1a1a1a"/>
<text x="1648.8" y="291.5" font-size="8.5" fill="#f4f4f0" font-family="Liberation Sans" text-anchor="middle" textLength="15" lengthAdjust="spacingAndGlyphs" transform="rotate(-90 1648.8 291.5)">R26</text>
<circle cx="1676.5" cy="276.5" r="5.5" fill="#163022"/><circle cx="1676.5" cy="276.5" r="3.2" fill="#c4c4e0" stroke="#f4f020" stroke-width="2.2"/>
<circle cx="1676.5" cy="303.8" r="7.3" fill="#163022"/><circle cx="1676.5" cy="303.8" r="4.8" fill="#c4c4e0" stroke="#f4f020" stroke-width="2.6"/>
<rect x="1686.5" y="280" width="7.5" height="20.5" fill="#f4f4f0"/>
<text x="1692.6" y="290.2" font-size="7" fill="#1d3a2b" font-family="Liberation Sans" text-anchor="middle" font-weight="bold" textLength="17" lengthAdjust="spacingAndGlyphs" transform="rotate(-90 1692.6 290.2)">TP13</text>
<path d="M1664,342.05 L1669,342.05 L1676,335.05 M1664,359.05 L1676,359.05" fill="none" stroke="#436431" stroke-width="1.6"/>
<path d="M1659.6,333.05 V340.05" stroke="#436431" stroke-width="1.4"/><circle cx="1659.4" cy="333.05" r="2.4" fill="#436431"/><circle cx="1659.4" cy="333.05" r="1.2" fill="#b8b8d8"/>
<rect x="1655.3" y="338.05" width="8.6" height="23" rx="2" fill="#f0f0ea"/><rect x="1655.3" y="345.3" width="8.6" height="8.51" fill="#1a1a1a"/>
<text x="1648.8" y="349.55" font-size="8.5" fill="#f4f4f0" font-family="Liberation Sans" text-anchor="middle" textLength="15" lengthAdjust="spacingAndGlyphs" transform="rotate(-90 1648.8 349.55)">R25</text>
<circle cx="1676.5" cy="334.55" r="5.5" fill="#163022"/><circle cx="1676.5" cy="334.55" r="3.2" fill="#c4c4e0" stroke="#f4f020" stroke-width="2.2"/>
<circle cx="1676.5" cy="361.85" r="7.3" fill="#163022"/><circle cx="1676.5" cy="361.85" r="4.8" fill="#c4c4e0" stroke="#f4f020" stroke-width="2.6"/>
<rect x="1686.5" y="338.05" width="7.5" height="20.5" fill="#f4f4f0"/>
<text x="1692.6" y="348.25" font-size="7" fill="#1d3a2b" font-family="Liberation Sans" text-anchor="middle" font-weight="bold" textLength="17" lengthAdjust="spacingAndGlyphs" transform="rotate(-90 1692.6 348.25)">TP12</text>
<path d="M1664,400.1 L1669,400.1 L1676,393.1 M1664,417.1 L1676,417.1" fill="none" stroke="#436431" stroke-width="1.6"/>
<path d="M1659.6,391.1 V398.1" stroke="#436431" stroke-width="1.4"/><circle cx="1659.4" cy="391.1" r="2.4" fill="#436431"/><circle cx="1659.4" cy="391.1" r="1.2" fill="#b8b8d8"/>
<rect x="1655.3" y="396.1" width="8.6" height="23" rx="2" fill="#f0f0ea"/><rect x="1655.3" y="403.35" width="8.6" height="8.51" fill="#1a1a1a"/>
<text x="1648.8" y="407.6" font-size="8.5" fill="#f4f4f0" font-family="Liberation Sans" text-anchor="middle" textLength="15" lengthAdjust="spacingAndGlyphs" transform="rotate(-90 1648.8 407.6)">R24</text>
<circle cx="1676.5" cy="392.6" r="5.5" fill="#163022"/><circle cx="1676.5" cy="392.6" r="3.2" fill="#c4c4e0" stroke="#f4f020" stroke-width="2.2"/>
<circle cx="1676.5" cy="419.9" r="7.3" fill="#163022"/><circle cx="1676.5" cy="419.9" r="4.8" fill="#c4c4e0" stroke="#f4f020" stroke-width="2.6"/>
<rect x="1686.5" y="396.1" width="7.5" height="20.5" fill="#f4f4f0"/>
<text x="1692.6" y="406.3" font-size="7" fill="#1d3a2b" font-family="Liberation Sans" text-anchor="middle" font-weight="bold" textLength="17" lengthAdjust="spacingAndGlyphs" transform="rotate(-90 1692.6 406.3)">TP11</text>
<path d="M1664,458.15 L1669,458.15 L1676,451.15 M1664,475.15 L1676,475.15" fill="none" stroke="#436431" stroke-width="1.6"/>
<path d="M1659.6,449.15 V456.15" stroke="#436431" stroke-width="1.4"/><circle cx="1659.4" cy="449.15" r="2.4" fill="#436431"/><circle cx="1659.4" cy="449.15" r="1.2" fill="#b8b8d8"/>
<rect x="1655.3" y="454.15" width="8.6" height="23" rx="2" fill="#f0f0ea"/><rect x="1655.3" y="461.39" width="8.6" height="8.51" fill="#1a1a1a"/>
<text x="1648.8" y="465.65" font-size="8.5" fill="#f4f4f0" font-family="Liberation Sans" text-anchor="middle" textLength="15" lengthAdjust="spacingAndGlyphs" transform="rotate(-90 1648.8 465.65)">R23</text>
<circle cx="1676.5" cy="450.65" r="5.5" fill="#163022"/><circle cx="1676.5" cy="450.65" r="3.2" fill="#c4c4e0" stroke="#f4f020" stroke-width="2.2"/>
<circle cx="1676.5" cy="477.95" r="7.3" fill="#163022"/><circle cx="1676.5" cy="477.95" r="4.8" fill="#c4c4e0" stroke="#f4f020" stroke-width="2.6"/>
<rect x="1686.5" y="454.15" width="7.5" height="20.5" fill="#f4f4f0"/>
<text x="1692.6" y="464.35" font-size="7" fill="#1d3a2b" font-family="Liberation Sans" text-anchor="middle" font-weight="bold" textLength="17" lengthAdjust="spacingAndGlyphs" transform="rotate(-90 1692.6 464.35)">TP10</text>
<path d="M1664,516.2 L1669,516.2 L1676,509.2 M1664,533.2 L1676,533.2" fill="none" stroke="#436431" stroke-width="1.6"/>
<path d="M1659.6,507.2 V514.2" stroke="#436431" stroke-width="1.4"/><circle cx="1659.4" cy="507.2" r="2.4" fill="#436431"/><circle cx="1659.4" cy="507.2" r="1.2" fill="#b8b8d8"/>
<rect x="1655.3" y="512.2" width="8.6" height="23" rx="2" fill="#f0f0ea"/><rect x="1655.3" y="519.45" width="8.6" height="8.51" fill="#1a1a1a"/>
<text x="1648.8" y="523.7" font-size="8.5" fill="#f4f4f0" font-family="Liberation Sans" text-anchor="middle" textLength="15" lengthAdjust="spacingAndGlyphs" transform="rotate(-90 1648.8 523.7)">R22</text>
<circle cx="1676.5" cy="508.7" r="5.5" fill="#163022"/><circle cx="1676.5" cy="508.7" r="3.2" fill="#c4c4e0" stroke="#f4f020" stroke-width="2.2"/>
<circle cx="1676.5" cy="536" r="7.3" fill="#163022"/><circle cx="1676.5" cy="536" r="4.8" fill="#c4c4e0" stroke="#f4f020" stroke-width="2.6"/>
<rect x="1686.5" y="515.7" width="7.5" height="15.5" fill="#f4f4f0"/>
<text x="1692.6" y="523.45" font-size="7" fill="#1d3a2b" font-family="Liberation Sans" text-anchor="middle" font-weight="bold" textLength="12.5" lengthAdjust="spacingAndGlyphs" transform="rotate(-90 1692.6 523.45)">TP9</text>
<path d="M1664,574.25 L1669,574.25 L1676,567.25 M1664,591.25 L1676,591.25" fill="none" stroke="#436431" stroke-width="1.6"/>
<path d="M1659.6,565.25 V572.25" stroke="#436431" stroke-width="1.4"/><circle cx="1659.4" cy="565.25" r="2.4" fill="#436431"/><circle cx="1659.4" cy="565.25" r="1.2" fill="#b8b8d8"/>
<rect x="1655.3" y="570.25" width="8.6" height="23" rx="2" fill="#f0f0ea"/><rect x="1655.3" y="577.5" width="8.6" height="8.51" fill="#1a1a1a"/>
<text x="1648.8" y="581.75" font-size="8.5" fill="#f4f4f0" font-family="Liberation Sans" text-anchor="middle" textLength="15" lengthAdjust="spacingAndGlyphs" transform="rotate(-90 1648.8 581.75)">R17</text>
<circle cx="1676.5" cy="566.75" r="5.5" fill="#163022"/><circle cx="1676.5" cy="566.75" r="3.2" fill="#c4c4e0" stroke="#f4f020" stroke-width="2.2"/>
<circle cx="1676.5" cy="594.05" r="7.3" fill="#163022"/><circle cx="1676.5" cy="594.05" r="4.8" fill="#c4c4e0" stroke="#f4f020" stroke-width="2.6"/>
<rect x="1686.5" y="573.75" width="7.5" height="15.5" fill="#f4f4f0"/>
<text x="1692.6" y="581.5" font-size="7" fill="#1d3a2b" font-family="Liberation Sans" text-anchor="middle" font-weight="bold" textLength="12.5" lengthAdjust="spacingAndGlyphs" transform="rotate(-90 1692.6 581.5)">TP8</text>
<path d="M1664,632.3 L1669,632.3 L1676,625.3 M1664,649.3 L1676,649.3" fill="none" stroke="#436431" stroke-width="1.6"/>
<path d="M1659.6,623.3 V630.3" stroke="#436431" stroke-width="1.4"/><circle cx="1659.4" cy="623.3" r="2.4" fill="#436431"/><circle cx="1659.4" cy="623.3" r="1.2" fill="#b8b8d8"/>
<rect x="1655.3" y="628.3" width="8.6" height="23" rx="2" fill="#f0f0ea"/><rect x="1655.3" y="635.54" width="8.6" height="8.51" fill="#1a1a1a"/>
<text x="1648.8" y="639.8" font-size="8.5" fill="#f4f4f0" font-family="Liberation Sans" text-anchor="middle" textLength="15" lengthAdjust="spacingAndGlyphs" transform="rotate(-90 1648.8 639.8)">R15</text>
<circle cx="1676.5" cy="624.8" r="5.5" fill="#163022"/><circle cx="1676.5" cy="624.8" r="3.2" fill="#c4c4e0" stroke="#f4f020" stroke-width="2.2"/>
<circle cx="1676.5" cy="652.1" r="7.3" fill="#163022"/><circle cx="1676.5" cy="652.1" r="4.8" fill="#c4c4e0" stroke="#f4f020" stroke-width="2.6"/>
<rect x="1686.5" y="631.8" width="7.5" height="15.5" fill="#f4f4f0"/>
<text x="1692.6" y="639.55" font-size="7" fill="#1d3a2b" font-family="Liberation Sans" text-anchor="middle" font-weight="bold" textLength="12.5" lengthAdjust="spacingAndGlyphs" transform="rotate(-90 1692.6 639.55)">TP7</text>
<path d="M1664,748.4 L1669,748.4 L1676,741.4 M1664,765.4 L1676,765.4" fill="none" stroke="#436431" stroke-width="1.6"/>
<path d="M1659.6,739.4 V746.4" stroke="#436431" stroke-width="1.4"/><circle cx="1659.4" cy="739.4" r="2.4" fill="#436431"/><circle cx="1659.4" cy="739.4" r="1.2" fill="#b8b8d8"/>
<rect x="1655.3" y="744.4" width="8.6" height="23" rx="2" fill="#f0f0ea"/><rect x="1655.3" y="751.64" width="8.6" height="8.51" fill="#1a1a1a"/>
<text x="1648.8" y="755.9" font-size="8.5" fill="#f4f4f0" font-family="Liberation Sans" text-anchor="middle" textLength="10" lengthAdjust="spacingAndGlyphs" transform="rotate(-90 1648.8 755.9)">R6</text>
<circle cx="1676.5" cy="740.9" r="5.5" fill="#163022"/><circle cx="1676.5" cy="740.9" r="3.2" fill="#c4c4e0" stroke="#f4f020" stroke-width="2.2"/>
<circle cx="1676.5" cy="768.2" r="7.3" fill="#163022"/><circle cx="1676.5" cy="768.2" r="4.8" fill="#c4c4e0" stroke="#f4f020" stroke-width="2.6"/>
<rect x="1686.5" y="747.9" width="7.5" height="15.5" fill="#f4f4f0"/>
<text x="1692.6" y="755.65" font-size="7" fill="#1d3a2b" font-family="Liberation Sans" text-anchor="middle" font-weight="bold" textLength="12.5" lengthAdjust="spacingAndGlyphs" transform="rotate(-90 1692.6 755.65)">TP4</text>
<path d="M1664,806.45 L1669,806.45 L1676,799.45 M1664,823.45 L1676,823.45" fill="none" stroke="#436431" stroke-width="1.6"/>
<path d="M1659.6,797.45 V804.45" stroke="#436431" stroke-width="1.4"/><circle cx="1659.4" cy="797.45" r="2.4" fill="#436431"/><circle cx="1659.4" cy="797.45" r="1.2" fill="#b8b8d8"/>
<rect x="1655.3" y="802.45" width="8.6" height="23" rx="2" fill="#f0f0ea"/><rect x="1655.3" y="809.69" width="8.6" height="8.51" fill="#1a1a1a"/>
<text x="1648.8" y="813.95" font-size="8.5" fill="#f4f4f0" font-family="Liberation Sans" text-anchor="middle" textLength="10" lengthAdjust="spacingAndGlyphs" transform="rotate(-90 1648.8 813.95)">R4</text>
<circle cx="1676.5" cy="798.95" r="5.5" fill="#163022"/><circle cx="1676.5" cy="798.95" r="3.2" fill="#c4c4e0" stroke="#f4f020" stroke-width="2.2"/>
<circle cx="1676.5" cy="826.25" r="7.3" fill="#163022"/><circle cx="1676.5" cy="826.25" r="4.8" fill="#c4c4e0" stroke="#f4f020" stroke-width="2.6"/>
<rect x="1686.5" y="805.95" width="7.5" height="15.5" fill="#f4f4f0"/>
<text x="1692.6" y="813.7" font-size="7" fill="#1d3a2b" font-family="Liberation Sans" text-anchor="middle" font-weight="bold" textLength="12.5" lengthAdjust="spacingAndGlyphs" transform="rotate(-90 1692.6 813.7)">TP3</text>
<circle cx="1676.5" cy="857" r="5.5" fill="#163022"/><circle cx="1676.5" cy="857" r="3.2" fill="#c4c4e0" stroke="#f4f020" stroke-width="2.2"/>
<circle cx="1676.5" cy="884.3" r="7.3" fill="#163022"/><circle cx="1676.5" cy="884.3" r="4.8" fill="#c4c4e0" stroke="#f4f020" stroke-width="2.6"/>
<rect x="1686.5" y="864" width="7.5" height="15.5" fill="#f4f4f0"/>
<text x="1692.6" y="871.75" font-size="7" fill="#1d3a2b" font-family="Liberation Sans" text-anchor="middle" font-weight="bold" textLength="12.5" lengthAdjust="spacingAndGlyphs" transform="rotate(-90 1692.6 871.75)">TP2</text>
<path d="M1664,922.55 L1669,922.55 L1676,915.55 M1664,939.55 L1676,939.55" fill="none" stroke="#436431" stroke-width="1.6"/>
<path d="M1659.6,913.55 V920.55" stroke="#436431" stroke-width="1.4"/><circle cx="1659.4" cy="913.55" r="2.4" fill="#436431"/><circle cx="1659.4" cy="913.55" r="1.2" fill="#b8b8d8"/>
<rect x="1655.3" y="918.55" width="8.6" height="23" rx="2" fill="#f0f0ea"/><rect x="1655.3" y="925.79" width="8.6" height="8.51" fill="#1a1a1a"/>
<text x="1648.8" y="930.05" font-size="8.5" fill="#f4f4f0" font-family="Liberation Sans" text-anchor="middle" textLength="10" lengthAdjust="spacingAndGlyphs" transform="rotate(-90 1648.8 930.05)">R2</text>
<circle cx="1676.5" cy="915.05" r="5.5" fill="#163022"/><circle cx="1676.5" cy="915.05" r="3.2" fill="#c4c4e0" stroke="#f4f020" stroke-width="2.2"/>
<circle cx="1676.5" cy="942.35" r="7.3" fill="#163022"/><circle cx="1676.5" cy="942.35" r="4.8" fill="#c4c4e0" stroke="#f4f020" stroke-width="2.6"/>
<rect x="1686.5" y="922.05" width="7.5" height="15.5" fill="#f4f4f0"/>
<text x="1692.6" y="929.8" font-size="7" fill="#1d3a2b" font-family="Liberation Sans" text-anchor="middle" font-weight="bold" textLength="12.5" lengthAdjust="spacingAndGlyphs" transform="rotate(-90 1692.6 929.8)">TP1</text>
<rect x="1613" y="676" width="23" height="9" rx="2" fill="#f0f0ea"/><rect x="1619.79" y="676" width="9.43" height="9" fill="#1a1a1a"/>
<circle cx="1653.7" cy="680.5" r="7.3" fill="#163022"/><circle cx="1653.7" cy="680.5" r="4.8" fill="#c4c4e0" stroke="#f4f020" stroke-width="2.6"/>
<circle cx="1680.6" cy="680.5" r="5.5" fill="#163022"/><circle cx="1680.6" cy="680.5" r="3.2" fill="#c4c4e0" stroke="#f4f020" stroke-width="2.2"/>
<rect x="1663.5" y="673" width="7.7" height="15.5" fill="#f4f4f0"/>
<text x="1669.5" y="680.5" font-size="6.5" fill="#1d3a2b" font-family="Liberation Sans" text-anchor="middle" font-weight="bold" textLength="13" lengthAdjust="spacingAndGlyphs" transform="rotate(-90 1669.5 680.5)">TP6</text>
<rect x="1613" y="711.1" width="23" height="9" rx="2" fill="#f0f0ea"/><rect x="1619.79" y="711.1" width="9.43" height="9" fill="#1a1a1a"/>
<circle cx="1653.7" cy="715.6" r="7.3" fill="#163022"/><circle cx="1653.7" cy="715.6" r="4.8" fill="#c4c4e0" stroke="#f4f020" stroke-width="2.6"/>
<circle cx="1680.6" cy="715.6" r="5.5" fill="#163022"/><circle cx="1680.6" cy="715.6" r="3.2" fill="#c4c4e0" stroke="#f4f020" stroke-width="2.2"/>
<rect x="1663.5" y="708.1" width="7.7" height="15.5" fill="#f4f4f0"/>
<text x="1669.5" y="715.6" font-size="6.5" fill="#1d3a2b" font-family="Liberation Sans" text-anchor="middle" font-weight="bold" textLength="13" lengthAdjust="spacingAndGlyphs" transform="rotate(-90 1669.5 715.6)">TP5</text>
<text x="1624" y="697" font-size="8.5" fill="#f4f4f0" font-family="Liberation Sans" text-anchor="middle" textLength="15" lengthAdjust="spacingAndGlyphs">R11</text>
<text x="1624" y="707" font-size="8.5" fill="#f4f4f0" font-family="Liberation Sans" text-anchor="middle" textLength="10" lengthAdjust="spacingAndGlyphs">R8</text>
<rect x="1232" y="687" width="22" height="9" rx="2" fill="#f0f0ea"/><rect x="1238.49" y="687" width="9.02" height="9" fill="#1a1a1a"/>
<text x="1260.8" y="694.9" font-size="8.5" fill="#f4f4f0" font-family="Liberation Sans" textLength="10" lengthAdjust="spacingAndGlyphs">R7</text>
<rect x="1232" y="700.8" width="22" height="9" rx="2" fill="#f0f0ea"/><rect x="1238.49" y="700.8" width="9.02" height="9" fill="#1a1a1a"/>
<text x="1260.8" y="708.7" font-size="8.5" fill="#f4f4f0" font-family="Liberation Sans" textLength="15" lengthAdjust="spacingAndGlyphs">R10</text>
<rect x="1286" y="739.4" width="21" height="9.6" rx="4.8" fill="#1d3a2b" stroke="#f4f4f0" stroke-width="0.9"/>
<rect x="1289.5" y="741.6" width="7" height="5.2" rx="1.5" fill="#f4f020"/>
<rect x="1297.5" y="741.6" width="6.5" height="5.2" rx="2.6" fill="#f4f020"/>
<text x="1312.4" y="747.6" font-size="8.5" fill="#f4f4f0" font-family="Liberation Sans" textLength="15" lengthAdjust="spacingAndGlyphs">JP1</text>
<rect x="1286" y="751" width="21" height="9.6" rx="4.8" fill="#1d3a2b" stroke="#f4f4f0" stroke-width="0.9"/>
<rect x="1289.5" y="753.2" width="7" height="5.2" rx="1.5" fill="#f4f020"/>
<rect x="1297.5" y="753.2" width="6.5" height="5.2" rx="2.6" fill="#f4f020"/>
<text x="1312.4" y="759.2" font-size="8.5" fill="#f4f4f0" font-family="Liberation Sans" textLength="15" lengthAdjust="spacingAndGlyphs">JP2</text>
<rect x="1286" y="762.6" width="21" height="9.6" rx="4.8" fill="#1d3a2b" stroke="#f4f4f0" stroke-width="0.9"/>
<rect x="1289.5" y="764.8" width="7" height="5.2" rx="1.5" fill="#f4f020"/>
<rect x="1297.5" y="764.8" width="6.5" height="5.2" rx="2.6" fill="#f4f020"/>
<text x="1312.4" y="770.8" font-size="8.5" fill="#f4f4f0" font-family="Liberation Sans" textLength="15" lengthAdjust="spacingAndGlyphs">JP3</text>
<text x="911.3" y="296.1" font-size="10.5" fill="#f4f4f0" font-family="Liberation Sans" font-style="italic" textLength="47" lengthAdjust="spacingAndGlyphs" stroke="#f4f4f0" stroke-width="0.25">LINE #12</text>
<text x="911.3" y="354.15" font-size="10.5" fill="#f4f4f0" font-family="Liberation Sans" font-style="italic" textLength="47" lengthAdjust="spacingAndGlyphs" stroke="#f4f4f0" stroke-width="0.25">LINE #11</text>
<text x="911.3" y="412.2" font-size="10.5" fill="#f4f4f0" font-family="Liberation Sans" font-style="italic" textLength="47" lengthAdjust="spacingAndGlyphs" stroke="#f4f4f0" stroke-width="0.25">LINE #10</text>
<text x="911.3" y="470.25" font-size="10.5" fill="#f4f4f0" font-family="Liberation Sans" font-style="italic" textLength="40" lengthAdjust="spacingAndGlyphs" stroke="#f4f4f0" stroke-width="0.25">LINE #9</text>
<text x="911.3" y="528.3" font-size="10.5" fill="#f4f4f0" font-family="Liberation Sans" font-style="italic" textLength="40" lengthAdjust="spacingAndGlyphs" stroke="#f4f4f0" stroke-width="0.25">LINE #8</text>
<text x="911.3" y="586.35" font-size="10.5" fill="#f4f4f0" font-family="Liberation Sans" font-style="italic" textLength="40" lengthAdjust="spacingAndGlyphs" stroke="#f4f4f0" stroke-width="0.25">LINE #7</text>
<text x="911.3" y="644.4" font-size="10.5" fill="#f4f4f0" font-family="Liberation Sans" font-style="italic" textLength="40" lengthAdjust="spacingAndGlyphs" stroke="#f4f4f0" stroke-width="0.25">LINE #6</text>
<text x="911.3" y="702.45" font-size="10.5" fill="#f4f4f0" font-family="Liberation Sans" font-style="italic" textLength="40" lengthAdjust="spacingAndGlyphs" stroke="#f4f4f0" stroke-width="0.25">LINE #5</text>
<text x="911.3" y="760.5" font-size="10.5" fill="#f4f4f0" font-family="Liberation Sans" font-style="italic" textLength="40" lengthAdjust="spacingAndGlyphs" stroke="#f4f4f0" stroke-width="0.25">LINE #4</text>
<text x="911.3" y="818.55" font-size="10.5" fill="#f4f4f0" font-family="Liberation Sans" font-style="italic" textLength="40" lengthAdjust="spacingAndGlyphs" stroke="#f4f4f0" stroke-width="0.25">LINE #3</text>
<text x="911.3" y="876.6" font-size="10.5" fill="#f4f4f0" font-family="Liberation Sans" font-style="italic" textLength="40" lengthAdjust="spacingAndGlyphs" stroke="#f4f4f0" stroke-width="0.25">LINE #2</text>
<text x="911.3" y="934.65" font-size="10.5" fill="#f4f4f0" font-family="Liberation Sans" font-style="italic" textLength="40" lengthAdjust="spacingAndGlyphs" stroke="#f4f4f0" stroke-width="0.25">LINE #1</text>
<text x="995.9" y="296.7" font-size="15" fill="#f4f4f0" font-family="Liberation Sans" font-style="italic" textLength="66.5" lengthAdjust="spacingAndGlyphs" stroke="#f4f4f0" stroke-width="0.35">Reference</text>
<text x="1070.5" y="296.7" font-size="15" fill="#f4f4f0" font-family="Liberation Sans" font-style="italic" textLength="48.9" lengthAdjust="spacingAndGlyphs" stroke="#f4f4f0" stroke-width="0.35">Change</text>
<text x="1127.1" y="296.7" font-size="15" fill="#f4f4f0" font-family="Liberation Sans" font-style="italic" textLength="19.7" lengthAdjust="spacingAndGlyphs" stroke="#f4f4f0" stroke-width="0.35">Via</text>
<text x="1154.5" y="296.7" font-size="15" fill="#f4f4f0" font-family="Liberation Sans" font-style="italic" textLength="55.1" lengthAdjust="spacingAndGlyphs" stroke="#f4f4f0" stroke-width="0.35">Stitched</text>
<text x="995.9" y="354.3" font-size="15" fill="#f4f4f0" font-family="Liberation Sans" font-style="italic" textLength="66.5" lengthAdjust="spacingAndGlyphs" stroke="#f4f4f0" stroke-width="0.35">Reference</text>
<text x="1070.5" y="354.3" font-size="15" fill="#f4f4f0" font-family="Liberation Sans" font-style="italic" textLength="48.9" lengthAdjust="spacingAndGlyphs" stroke="#f4f4f0" stroke-width="0.35">Change</text>
<text x="995.9" y="470.3" font-size="15" fill="#f4f4f0" font-family="Liberation Sans" font-style="italic" textLength="57" lengthAdjust="spacingAndGlyphs" stroke="#f4f4f0" stroke-width="0.35">Shielded</text>
<text x="1061.1" y="470.3" font-size="15" fill="#f4f4f0" font-family="Liberation Sans" font-style="italic" textLength="36.8" lengthAdjust="spacingAndGlyphs" stroke="#f4f4f0" stroke-width="0.35">Cross</text>
<text x="1106" y="470.3" font-size="15" fill="#f4f4f0" font-family="Liberation Sans" font-style="italic" textLength="58.8" lengthAdjust="spacingAndGlyphs" stroke="#f4f4f0" stroke-width="0.35">Coupling</text>
<text x="995.9" y="615.6" font-size="15" fill="#f4f4f0" font-family="Liberation Sans" font-style="italic" textLength="36.8" lengthAdjust="spacingAndGlyphs" stroke="#f4f4f0" stroke-width="0.35">Cross</text>
<text x="1040.8" y="615.6" font-size="15" fill="#f4f4f0" font-family="Liberation Sans" font-style="italic" textLength="58.8" lengthAdjust="spacingAndGlyphs" stroke="#f4f4f0" stroke-width="0.35">Coupling</text>
<text x="1001.8" y="702.9" font-size="15" fill="#f4f4f0" font-family="Liberation Sans" font-style="italic" textLength="45.8" lengthAdjust="spacingAndGlyphs" stroke="#f4f4f0" stroke-width="0.35">Branch</text>
<text x="1056.6" y="702.9" font-size="15" fill="#f4f4f0" font-family="Liberation Sans" font-style="italic" textLength="78.1" lengthAdjust="spacingAndGlyphs" stroke="#f4f4f0" stroke-width="0.35">Termination</text>
<text x="1001.9" y="761" font-size="15" fill="#f4f4f0" font-family="Liberation Sans" font-style="italic" textLength="36.7" lengthAdjust="spacingAndGlyphs" stroke="#f4f4f0" stroke-width="0.35">Stubs</text>
<text x="1001.9" y="819.1" font-size="15" fill="#f4f4f0" font-family="Liberation Sans" font-style="italic" textLength="52.5" lengthAdjust="spacingAndGlyphs" stroke="#f4f4f0" stroke-width="0.35">Parallel</text>
<text x="1062.5" y="819.1" font-size="15" fill="#f4f4f0" font-family="Liberation Sans" font-style="italic" textLength="78.1" lengthAdjust="spacingAndGlyphs" stroke="#f4f4f0" stroke-width="0.35">Termination</text>
<text x="1001.7" y="877.6" font-size="15" fill="#f4f4f0" font-family="Liberation Sans" font-style="italic" textLength="41.4" lengthAdjust="spacingAndGlyphs" stroke="#f4f4f0" stroke-width="0.35">Series</text>
<text x="1051.2" y="877.6" font-size="15" fill="#f4f4f0" font-family="Liberation Sans" font-style="italic" textLength="78.1" lengthAdjust="spacingAndGlyphs" stroke="#f4f4f0" stroke-width="0.35">Termination</text>
<text x="1001.7" y="935.6" font-size="15" fill="#f4f4f0" font-family="Liberation Sans" font-style="italic" textLength="37.7" lengthAdjust="spacingAndGlyphs" stroke="#f4f4f0" stroke-width="0.35">Mixed</text>
<text x="1047.5" y="935.6" font-size="15" fill="#f4f4f0" font-family="Liberation Sans" font-style="italic" textLength="78.1" lengthAdjust="spacingAndGlyphs" stroke="#f4f4f0" stroke-width="0.35">Termination</text>
<path d="M842,970 L856,984 L912,984 L921,993 M836,975 L850,989 L836,989 M893,975 L958,975 L972,989 L972,999 M893,979 L902,979 M848.7,1049 L848.7,1063 L865,1079.2 L912,1079.2 M891.9,1049 L891.9,1060 L899,1067.7 L912,1067.7 M895,1097.5 L903,1090.7 L912,1090.7 M936,1035.5 L945,1043 L945,1050 M950,1035.5 L941,1043 M975,1056.2 L990,1056.2 L990,1049 M975,1067.7 L991,1063.5 M975,1079.2 L1040,1079.2 L1053,1066 L1061,1049 M975,1090.7 L1045,1090.7 L1055,1080 L1055,1049 M975,1102.3 L983,1096 L1045,1096 M975,1113.9 L991,1113 M1053.7,1067.2 L1074.6,1067.2 L1094.7,1042.7 L1117,1042.7 M1051.6,1085.9 L1083.2,1085.9 L1100.5,1060.7 L1117,1060.7 M816,1007 L836,1007 M816,1028 L836,1028 M1059,1007 L1079,1007 M1059,1028 L1079,1028" fill="none" stroke="#1d3a2b" stroke-width="5" stroke-linejoin="round"/>
<path d="M842,970 L856,984 L912,984 L921,993 M836,975 L850,989 L836,989 M893,975 L958,975 L972,989 L972,999 M893,979 L902,979 M848.7,1049 L848.7,1063 L865,1079.2 L912,1079.2 M891.9,1049 L891.9,1060 L899,1067.7 L912,1067.7 M895,1097.5 L903,1090.7 L912,1090.7 M936,1035.5 L945,1043 L945,1050 M950,1035.5 L941,1043 M975,1056.2 L990,1056.2 L990,1049 M975,1067.7 L991,1063.5 M975,1079.2 L1040,1079.2 L1053,1066 L1061,1049 M975,1090.7 L1045,1090.7 L1055,1080 L1055,1049 M975,1102.3 L983,1096 L1045,1096 M975,1113.9 L991,1113 M1053.7,1067.2 L1074.6,1067.2 L1094.7,1042.7 L1117,1042.7 M1051.6,1085.9 L1083.2,1085.9 L1100.5,1060.7 L1117,1060.7 M816,1007 L836,1007 M816,1028 L836,1028 M1059,1007 L1079,1007 M1059,1028 L1079,1028" fill="none" stroke="#42632f" stroke-width="1.6" stroke-linejoin="round"/>
<circle cx="1053.7" cy="1067.2" r="3.6" fill="#1d3a2b"/><circle cx="1053.7" cy="1067.2" r="1.3" fill="#b8b8d8"/>
<circle cx="1051.6" cy="1085.9" r="3.6" fill="#1d3a2b"/><circle cx="1051.6" cy="1085.9" r="1.3" fill="#b8b8d8"/>
<rect x="911.3" y="992.2" width="27" height="14" rx="7" fill="#1d3a2b"/>
<rect x="911.3" y="1010.3" width="27" height="14" rx="7" fill="#1d3a2b"/>
<rect x="911.3" y="1028.5" width="27" height="14" rx="7" fill="#1d3a2b"/>
<rect x="948" y="992.2" width="27" height="14" rx="7" fill="#1d3a2b"/>
<rect x="948" y="1010.3" width="27" height="14" rx="7" fill="#1d3a2b"/>
<rect x="948" y="1028.5" width="27" height="14" rx="7" fill="#1d3a2b"/>
<rect x="870.1" y="1056.5" width="27" height="14" rx="7" fill="#1d3a2b"/>
<rect x="870.1" y="1090.5" width="27" height="14" rx="7" fill="#1d3a2b"/>
<rect x="911.3" y="1138.7" width="27" height="14" rx="7" fill="#1d3a2b"/>
<rect x="989.1" y="1056.5" width="27" height="14" rx="7" fill="#1d3a2b"/>
<rect x="989.1" y="1074.5" width="27" height="14" rx="7" fill="#1d3a2b"/>
<rect x="989.1" y="1105.6" width="27" height="14" rx="7" fill="#1d3a2b"/>
<rect x="909.5" y="1051.6" width="19" height="9.2" rx="4.6" fill="#1d3a2b"/><rect x="958.5" y="1051.6" width="19" height="9.2" rx="4.6" fill="#1d3a2b"/>
<rect x="909.5" y="1063.1" width="19" height="9.2" rx="4.6" fill="#1d3a2b"/><rect x="958.5" y="1063.1" width="19" height="9.2" rx="4.6" fill="#1d3a2b"/>
<rect x="909.5" y="1074.6" width="19" height="9.2" rx="4.6" fill="#1d3a2b"/><rect x="958.5" y="1074.6" width="19" height="9.2" rx="4.6" fill="#1d3a2b"/>
<rect x="909.5" y="1086.1" width="19" height="9.2" rx="4.6" fill="#1d3a2b"/><rect x="958.5" y="1086.1" width="19" height="9.2" rx="4.6" fill="#1d3a2b"/>
<rect x="909.5" y="1097.7" width="19" height="9.2" rx="4.6" fill="#1d3a2b"/><rect x="958.5" y="1097.7" width="19" height="9.2" rx="4.6" fill="#1d3a2b"/>
<rect x="909.5" y="1109.3" width="19" height="9.2" rx="4.6" fill="#1d3a2b"/><rect x="958.5" y="1109.3" width="19" height="9.2" rx="4.6" fill="#1d3a2b"/>
<rect x="909.5" y="1120.9" width="19" height="9.2" rx="4.6" fill="#1d3a2b"/><rect x="958.5" y="1120.9" width="19" height="9.2" rx="4.6" fill="#1d3a2b"/>
<path d="M840,987.4 H892 Q902.4,987.4 902.4,998 V1038 Q902.4,1048.9 892,1048.9 H840 Z" fill="#c4c4c4"/>
<path d="M842,987.4 H837.3 V996 H840 M840,1040 H837.3 V1048.9 H842 M892,987.4 Q902.4,987.4 902.4,998 V1038 Q902.4,1048.9 892,1048.9" fill="none" stroke="#f4f4f0" stroke-width="0.9"/>
<circle cx="872.4" cy="1017.4" r="27" fill="none" stroke="#b4b4b4" stroke-width="0.6" stroke-dasharray="2,2"/>
<circle cx="872.4" cy="1017.4" r="14" fill="#cdcdcd"/>
<path d="M858.4,1017.4 A14,14 0 0 1 872.4,1003.4 V1031.4 A14,14 0 0 1 858.4,1017.4Z" fill="#c0c0c0"/>
<path d="M891,996.7 l3.6,3 v6.5 h-3.6 z" fill="#a8a8a8"/>
<path d="M891,1027.5 l3.6,3 v6.5 h-3.6 z" fill="#a8a8a8"/>
<circle cx="872.4" cy="1017.4" r="6.2" fill="#42632f"/>
<rect x="852.2" y="969.9" width="41.5" height="12.6" fill="#f4f4f0"/>
<text x="872.95" y="979.6" font-size="11.5" fill="#1d3a2b" font-family="Liberation Sans" text-anchor="middle" textLength="38" lengthAdjust="spacingAndGlyphs">CLK_A</text>
<path d="M1004,987.4 H1055.5 V1048.9 H1004 Q992.3,1048.9 992.3,1038 V998 Q992.3,987.4 1004,987.4 Z" fill="#c4c4c4"/>
<path d="M1055,987.4 H1058.6 V996 H1055.5 M1055.5,1040 H1058.6 V1048.9 H1055 M1004,987.4 Q992.3,987.4 992.3,998 V1038 Q992.3,1048.9 1004,1048.9" fill="none" stroke="#f4f4f0" stroke-width="0.9"/>
<circle cx="1023" cy="1017.4" r="27" fill="none" stroke="#b4b4b4" stroke-width="0.6" stroke-dasharray="2,2"/>
<circle cx="1023" cy="1017.4" r="14" fill="#cdcdcd"/>
<path d="M1009,1017.4 A14,14 0 0 1 1023,1003.4 V1031.4 A14,14 0 0 1 1009,1017.4Z" fill="#c0c0c0"/>
<path d="M1000,996.7 l3.6,3 v6.5 h-3.6 z" fill="#a8a8a8"/>
<path d="M1000,1027.5 l3.6,3 v6.5 h-3.6 z" fill="#a8a8a8"/>
<circle cx="1023" cy="1017.4" r="6.2" fill="#42632f"/>
<rect x="1002.5" y="969.9" width="41.5" height="12.6" fill="#f4f4f0"/>
<text x="1023.25" y="979.6" font-size="11.5" fill="#1d3a2b" font-family="Liberation Sans" text-anchor="middle" textLength="38" lengthAdjust="spacingAndGlyphs">CLK_B</text>
<rect x="926.7" y="1050.5" width="34" height="80" fill="#2a2a2a"/>
<circle cx="933" cy="1059" r="1.8" fill="#d8d0b8"/>
<path d="M926.7,1050 H960.6 M926.7,1131 H960.6" stroke="#f4f4f0" stroke-width="0.8"/>
<rect x="912" y="1053.4" width="13.8" height="5.6" rx="1.5" fill="#ecece6"/>
<rect x="961" y="1053.4" width="13.8" height="5.6" rx="1.5" fill="#ecece6"/>
<rect x="912" y="1064.9" width="13.8" height="5.6" rx="1.5" fill="#ecece6"/>
<rect x="961" y="1064.9" width="13.8" height="5.6" rx="1.5" fill="#ecece6"/>
<rect x="912" y="1076.4" width="13.8" height="5.6" rx="1.5" fill="#ecece6"/>
<rect x="961" y="1076.4" width="13.8" height="5.6" rx="1.5" fill="#ecece6"/>
<rect x="912" y="1087.9" width="13.8" height="5.6" rx="1.5" fill="#ecece6"/>
<rect x="961" y="1087.9" width="13.8" height="5.6" rx="1.5" fill="#ecece6"/>
<rect x="912" y="1099.5" width="13.8" height="5.6" rx="1.5" fill="#ecece6"/>
<rect x="961" y="1099.5" width="13.8" height="5.6" rx="1.5" fill="#ecece6"/>
<rect x="912" y="1111.1" width="13.8" height="5.6" rx="1.5" fill="#ecece6"/>
<rect x="961" y="1111.1" width="13.8" height="5.6" rx="1.5" fill="#ecece6"/>
<rect x="912" y="1122.7" width="13.8" height="5.6" rx="1.5" fill="#ecece6"/>
<rect x="961" y="1122.7" width="13.8" height="5.6" rx="1.5" fill="#ecece6"/>
<rect x="913.8" y="994.7" width="22" height="9" rx="2" fill="#f0f0ea"/><rect x="920.29" y="994.7" width="9.02" height="9" fill="#1a1a1a"/>
<rect x="913.8" y="1012.8" width="22" height="9" rx="2" fill="#f0f0ea"/><rect x="920.29" y="1012.8" width="9.02" height="9" fill="#1a1a1a"/>
<rect x="913.8" y="1031" width="22" height="9" rx="2" fill="#f0f0ea"/><rect x="920.29" y="1031" width="9.02" height="9" fill="#1a1a1a"/>
<rect x="950.5" y="994.7" width="22" height="9" rx="2" fill="#f0f0ea"/><rect x="956.99" y="994.7" width="9.02" height="9" fill="#1a1a1a"/>
<rect x="950.5" y="1012.8" width="22" height="9" rx="2" fill="#f0f0ea"/><rect x="956.99" y="1012.8" width="9.02" height="9" fill="#1a1a1a"/>
<rect x="950.5" y="1031" width="22" height="9" rx="2" fill="#f0f0ea"/><rect x="956.99" y="1031" width="9.02" height="9" fill="#7a5440"/>
<rect x="872.6" y="1059" width="22" height="9" rx="2" fill="#f0f0ea"/><rect x="879.09" y="1059" width="9.02" height="9" fill="#7a5440"/>
<rect x="872.6" y="1093" width="22" height="9" rx="2" fill="#f0f0ea"/><rect x="879.09" y="1093" width="9.02" height="9" fill="#1a1a1a"/>
<rect x="913.8" y="1141.2" width="22" height="9" rx="2" fill="#f0f0ea"/><rect x="920.29" y="1141.2" width="9.02" height="9" fill="#7a5440"/>
<rect x="991.6" y="1059" width="22" height="9" rx="2" fill="#f0f0ea"/><rect x="998.09" y="1059" width="9.02" height="9" fill="#7a5440"/>
<rect x="991.6" y="1077" width="22" height="9" rx="2" fill="#f0f0ea"/><rect x="998.09" y="1077" width="9.02" height="9" fill="#1a1a1a"/>
<rect x="991.6" y="1108.1" width="22" height="9" rx="2" fill="#f0f0ea"/><rect x="998.09" y="1108.1" width="9.02" height="9" fill="#1a1a1a"/>
<rect x="817.3" y="1006.7" width="9" height="22" rx="2" fill="#f0f0ea"/><rect x="817.3" y="1013.63" width="9" height="8.14" fill="#1a1a1a"/>
<rect x="1069.8" y="1006.7" width="9" height="22" rx="2" fill="#f0f0ea"/><rect x="1069.8" y="1013.63" width="9" height="8.14" fill="#1a1a1a"/>
<text x="917.7" y="973" font-size="8.5" fill="#f4f4f0" font-family="Liberation Sans" textLength="15" lengthAdjust="spacingAndGlyphs">R36</text>
<text x="917.7" y="982" font-size="8.5" fill="#f4f4f0" font-family="Liberation Sans" textLength="15" lengthAdjust="spacingAndGlyphs">R48</text>
<text x="917.7" y="991.2" font-size="8.5" fill="#f4f4f0" font-family="Liberation Sans" textLength="15" lengthAdjust="spacingAndGlyphs">R37</text>
<text x="954.2" y="973" font-size="8.5" fill="#f4f4f0" font-family="Liberation Sans" textLength="15" lengthAdjust="spacingAndGlyphs">R41</text>
<text x="954.2" y="982" font-size="8.5" fill="#f4f4f0" font-family="Liberation Sans" textLength="15" lengthAdjust="spacingAndGlyphs">R49</text>
<text x="957" y="991.2" font-size="8.5" fill="#f4f4f0" font-family="Liberation Sans" textLength="10" lengthAdjust="spacingAndGlyphs">C7</text>
<text x="818.2" y="990.6" font-size="8.5" fill="#f4f4f0" font-family="Liberation Sans" textLength="15" lengthAdjust="spacingAndGlyphs">R39</text>
<text x="854.6" y="1066.8" font-size="8.5" fill="#f4f4f0" font-family="Liberation Sans" textLength="10" lengthAdjust="spacingAndGlyphs">C9</text>
<text x="852.7" y="1100.8" font-size="8.5" fill="#f4f4f0" font-family="Liberation Sans" textLength="15" lengthAdjust="spacingAndGlyphs">R35</text>
<text x="941.2" y="1149" font-size="8.5" fill="#f4f4f0" font-family="Liberation Sans" textLength="10" lengthAdjust="spacingAndGlyphs">C8</text>
<text x="968.7" y="1142" font-size="8.5" fill="#f4f4f0" font-family="Liberation Sans" textLength="10" lengthAdjust="spacingAndGlyphs">U4</text>
<text x="1018.6" y="1066.8" font-size="8.5" fill="#f4f4f0" font-family="Liberation Sans" textLength="15" lengthAdjust="spacingAndGlyphs">C10</text>
<text x="1018.6" y="1084.8" font-size="8.5" fill="#f4f4f0" font-family="Liberation Sans" textLength="15" lengthAdjust="spacingAndGlyphs">R42</text>
<text x="1017.5" y="1115.9" font-size="8.5" fill="#f4f4f0" font-family="Liberation Sans" textLength="15" lengthAdjust="spacingAndGlyphs">R40</text>
<text x="1062" y="991.6" font-size="8.5" fill="#f4f4f0" font-family="Liberation Sans" textLength="15" lengthAdjust="spacingAndGlyphs">R44</text>
<text x="1107.2" y="1030.4" font-size="8.5" fill="#f4f4f0" font-family="Liberation Sans" textLength="15" lengthAdjust="spacingAndGlyphs">SW1</text>
<text x="1198.2" y="1030.4" font-size="8.5" fill="#f4f4f0" font-family="Liberation Sans" textLength="15" lengthAdjust="spacingAndGlyphs">SW2</text>
<text x="1381.5" y="1030.4" font-size="8.5" fill="#f4f4f0" font-family="Liberation Sans" textLength="15" lengthAdjust="spacingAndGlyphs">SW3</text>
<text x="1604.8" y="1021.8" font-size="8.5" fill="#f4f4f0" font-family="Liberation Sans" textLength="9" lengthAdjust="spacingAndGlyphs">J1</text>
<text x="812.2" y="1017.7" font-size="8.5" fill="#f4f4f0" font-family="Liberation Sans" text-anchor="middle" textLength="15" lengthAdjust="spacingAndGlyphs" transform="rotate(-90 812.2 1017.7)">R38</text>
<text x="1091.8" y="1017.7" font-size="8.5" fill="#f4f4f0" font-family="Liberation Sans" text-anchor="middle" textLength="15" lengthAdjust="spacingAndGlyphs" transform="rotate(-90 1091.8 1017.7)">R43</text>
<text x="1604" y="1148.5" font-size="11" fill="#f4f4f0" font-family="Liberation Sans" textLength="6" lengthAdjust="spacingAndGlyphs">1</text>
<text x="861.5" y="1127.5" font-size="14" fill="#f4f4f0" font-family="Liberation Sans" text-anchor="middle" font-style="italic" textLength="67" lengthAdjust="spacingAndGlyphs" stroke="#f4f4f0" stroke-width="0.5">Frequency</text>
<text x="861.5" y="1141.5" font-size="14" fill="#f4f4f0" font-family="Liberation Sans" text-anchor="middle" font-style="italic" textLength="41" lengthAdjust="spacingAndGlyphs" stroke="#f4f4f0" stroke-width="0.5">Adjust</text>
<rect x="1116.9" y="1035.2" width="68" height="91" fill="#2b80e3" stroke="#e8f0e8" stroke-width="0.7"/>
<rect x="1132.6" y="1064" width="12.8" height="33.2" fill="#fff"/>
<rect x="1155.7" y="1064" width="12.8" height="33.2" fill="#fff"/>
<path d="M1136.8,1108.5 h4 v4.5 h3.5 l-5.5,5.5 l-5.5,-5.5 h3.5z" fill="#fff"/>
<path d="M1114.4,1115 V1128.5 H1127.9" fill="none" stroke="#d8e0d8" stroke-width="0.7"/>
<rect x="1208.5" y="1035.2" width="161.4" height="91" fill="#2b80e3" stroke="#e8f0e8" stroke-width="0.7"/>
<rect x="1224" y="1064" width="12.8" height="33.2" fill="#fff"/>
<rect x="1247.3" y="1064" width="12.8" height="33.2" fill="#fff"/>
<rect x="1270.6" y="1064" width="12.8" height="33.2" fill="#fff"/>
<rect x="1293.9" y="1064" width="12.8" height="33.2" fill="#fff"/>
<rect x="1317.2" y="1064" width="12.8" height="33.2" fill="#fff"/>
<rect x="1340.5" y="1064" width="12.8" height="33.2" fill="#fff"/>
<path d="M1228.2,1108.5 h4 v4.5 h3.5 l-5.5,5.5 l-5.5,-5.5 h3.5z" fill="#fff"/>
<path d="M1206,1115 V1128.5 H1219.5" fill="none" stroke="#d8e0d8" stroke-width="0.7"/>
<rect x="1391.4" y="1035.2" width="161.1" height="91" fill="#2b80e3" stroke="#e8f0e8" stroke-width="0.7"/>
<rect x="1406.9" y="1064" width="12.8" height="33.2" fill="#fff"/>
<rect x="1430.2" y="1064" width="12.8" height="33.2" fill="#fff"/>
<rect x="1453.5" y="1064" width="12.8" height="33.2" fill="#fff"/>
<rect x="1476.8" y="1064" width="12.8" height="33.2" fill="#fff"/>
<rect x="1500.1" y="1064" width="12.8" height="33.2" fill="#fff"/>
<rect x="1523.4" y="1064" width="12.8" height="33.2" fill="#fff"/>
<path d="M1411.1,1108.5 h4 v4.5 h3.5 l-5.5,5.5 l-5.5,-5.5 h3.5z" fill="#fff"/>
<path d="M1388.9,1115 V1128.5 H1402.4" fill="none" stroke="#d8e0d8" stroke-width="0.7"/>
<rect x="1099" y="1051.8" width="12.8" height="16.8" fill="#f4f4f0"/>
<text x="1109.4" y="1060.2" font-size="10" fill="#1d3a2b" font-family="Liberation Sans" text-anchor="middle" textLength="14" lengthAdjust="spacingAndGlyphs" transform="rotate(-90 1109.4 1060.2)">EN</text>
<rect x="1099" y="1087.4" width="12.8" height="21.7" fill="#f4f4f0"/>
<text x="1109.4" y="1098.2" font-size="10" fill="#1d3a2b" font-family="Liberation Sans" text-anchor="middle" textLength="19" lengthAdjust="spacingAndGlyphs" transform="rotate(-90 1109.4 1098.2)">DIS</text>
<rect x="1190.5" y="1051.8" width="12.8" height="16.8" fill="#f4f4f0"/>
<text x="1200.9" y="1060.2" font-size="10" fill="#1d3a2b" font-family="Liberation Sans" text-anchor="middle" textLength="14" lengthAdjust="spacingAndGlyphs" transform="rotate(-90 1200.9 1060.2)">EN</text>
<rect x="1190.5" y="1087.4" width="12.8" height="21.7" fill="#f4f4f0"/>
<text x="1200.9" y="1098.2" font-size="10" fill="#1d3a2b" font-family="Liberation Sans" text-anchor="middle" textLength="19" lengthAdjust="spacingAndGlyphs" transform="rotate(-90 1200.9 1098.2)">DIS</text>
<rect x="1373" y="1051.8" width="12.8" height="16.8" fill="#f4f4f0"/>
<text x="1383.4" y="1060.2" font-size="10" fill="#1d3a2b" font-family="Liberation Sans" text-anchor="middle" textLength="14" lengthAdjust="spacingAndGlyphs" transform="rotate(-90 1383.4 1060.2)">EN</text>
<rect x="1373" y="1087.4" width="12.8" height="21.7" fill="#f4f4f0"/>
<text x="1383.4" y="1098.2" font-size="10" fill="#1d3a2b" font-family="Liberation Sans" text-anchor="middle" textLength="19" lengthAdjust="spacingAndGlyphs" transform="rotate(-90 1383.4 1098.2)">DIS</text>
<rect x="1133" y="991.9" width="13" height="41.6" fill="#f4f4f0"/>
<text x="1144" y="1012.7" font-size="11" fill="#1d3a2b" font-family="Liberation Sans" text-anchor="middle" textLength="38" lengthAdjust="spacingAndGlyphs" transform="rotate(-90 1144 1012.7)">CLK_A</text>
<rect x="1156" y="991.9" width="13" height="41.6" fill="#f4f4f0"/>
<text x="1167" y="1012.7" font-size="11" fill="#1d3a2b" font-family="Liberation Sans" text-anchor="middle" textLength="38" lengthAdjust="spacingAndGlyphs" transform="rotate(-90 1167 1012.7)">CLK_B</text>
<rect x="1223.2" y="979" width="15.3" height="54.5" fill="#f4f4f0"/>
<text x="1235.8" y="1006.25" font-size="11" fill="#1d3a2b" font-family="Liberation Sans" text-anchor="middle" textLength="51.5" lengthAdjust="spacingAndGlyphs" transform="rotate(-90 1235.8 1006.25)">LINE #1</text>
<rect x="1246.5" y="979" width="15.3" height="54.5" fill="#f4f4f0"/>
<text x="1259.1" y="1006.25" font-size="11" fill="#1d3a2b" font-family="Liberation Sans" text-anchor="middle" textLength="51.5" lengthAdjust="spacingAndGlyphs" transform="rotate(-90 1259.1 1006.25)">LINE #2</text>
<rect x="1269.8" y="979" width="15.3" height="54.5" fill="#f4f4f0"/>
<text x="1282.4" y="1006.25" font-size="11" fill="#1d3a2b" font-family="Liberation Sans" text-anchor="middle" textLength="51.5" lengthAdjust="spacingAndGlyphs" transform="rotate(-90 1282.4 1006.25)">LINE #3</text>
<rect x="1293.1" y="979" width="15.3" height="54.5" fill="#f4f4f0"/>
<text x="1305.7" y="1006.25" font-size="11" fill="#1d3a2b" font-family="Liberation Sans" text-anchor="middle" textLength="51.5" lengthAdjust="spacingAndGlyphs" transform="rotate(-90 1305.7 1006.25)">LINE #4</text>
<rect x="1316.4" y="979" width="15.3" height="54.5" fill="#f4f4f0"/>
<text x="1329" y="1006.25" font-size="11" fill="#1d3a2b" font-family="Liberation Sans" text-anchor="middle" textLength="51.5" lengthAdjust="spacingAndGlyphs" transform="rotate(-90 1329 1006.25)">LINE #5</text>
<rect x="1339.7" y="979" width="15.3" height="54.5" fill="#f4f4f0"/>
<text x="1352.3" y="1006.25" font-size="11" fill="#1d3a2b" font-family="Liberation Sans" text-anchor="middle" textLength="51.5" lengthAdjust="spacingAndGlyphs" transform="rotate(-90 1352.3 1006.25)">LINE #6</text>
<rect x="1406.1" y="979" width="15.3" height="54.5" fill="#f4f4f0"/>
<text x="1418.7" y="1006.25" font-size="11" fill="#1d3a2b" font-family="Liberation Sans" text-anchor="middle" textLength="51.5" lengthAdjust="spacingAndGlyphs" transform="rotate(-90 1418.7 1006.25)">LINE #7</text>
<rect x="1429.4" y="979" width="15.3" height="54.5" fill="#f4f4f0"/>
<text x="1442" y="1006.25" font-size="11" fill="#1d3a2b" font-family="Liberation Sans" text-anchor="middle" textLength="51.5" lengthAdjust="spacingAndGlyphs" transform="rotate(-90 1442 1006.25)">LINE #8</text>
<rect x="1452.7" y="979" width="15.3" height="54.5" fill="#f4f4f0"/>
<text x="1465.3" y="1006.25" font-size="11" fill="#1d3a2b" font-family="Liberation Sans" text-anchor="middle" textLength="51.5" lengthAdjust="spacingAndGlyphs" transform="rotate(-90 1465.3 1006.25)">LINE #9</text>
<rect x="1476" y="970.3" width="15.3" height="63.2" fill="#f4f4f0"/>
<text x="1488.6" y="1001.9" font-size="11" fill="#1d3a2b" font-family="Liberation Sans" text-anchor="middle" textLength="60.2" lengthAdjust="spacingAndGlyphs" transform="rotate(-90 1488.6 1001.9)">LINE #10</text>
<rect x="1499.3" y="970.3" width="15.3" height="63.2" fill="#f4f4f0"/>
<text x="1511.9" y="1001.9" font-size="11" fill="#1d3a2b" font-family="Liberation Sans" text-anchor="middle" textLength="60.2" lengthAdjust="spacingAndGlyphs" transform="rotate(-90 1511.9 1001.9)">LINE #11</text>
<rect x="1522.6" y="970.3" width="15.3" height="63.2" fill="#f4f4f0"/>
<text x="1535.2" y="1001.9" font-size="11" fill="#1d3a2b" font-family="Liberation Sans" text-anchor="middle" textLength="60.2" lengthAdjust="spacingAndGlyphs" transform="rotate(-90 1535.2 1001.9)">LINE #12</text>
<path d="M1230.6,1151 V1133 M1225.1,1138.5 L1230.6,1133 L1236.1,1138.5 M1253.9,1151 V1133 M1248.4,1138.5 L1253.9,1133 L1259.4,1138.5 M1277.2,1151 V1133 M1271.7,1138.5 L1277.2,1133 L1282.7,1138.5 M1300.5,1151 V1133 M1295,1138.5 L1300.5,1133 L1306,1138.5 M1323.8,1151 V1133 M1318.3,1138.5 L1323.8,1133 L1329.3,1138.5 M1347.1,1151 V1133 M1341.6,1138.5 L1347.1,1133 L1352.6,1138.5 M1413.8,1151 V1133 M1408.3,1138.5 L1413.8,1133 L1419.3,1138.5 M1437.1,1151 V1133 M1431.6,1138.5 L1437.1,1133 L1442.6,1138.5 M1460.4,1151 V1133 M1454.9,1138.5 L1460.4,1133 L1465.9,1138.5 M1483.7,1151 V1133 M1478.2,1138.5 L1483.7,1133 L1489.2,1138.5 M1507,1151 V1133 M1501.5,1138.5 L1507,1133 L1512.5,1138.5 M1530.3,1151 V1133 M1524.8,1138.5 L1530.3,1133 L1535.8,1138.5 M1347.1,1151 H1413.8 M1437.1,1151 H1483.7" fill="none" stroke="#dfe6dc" stroke-width="0.9"/>
<rect x="1600.8" y="1024.1" width="110.2" height="113.2" fill="#6ed88c"/>
<rect x="1697" y="1024.1" width="14" height="113.2" fill="#68cf86"/>
<path d="M1600.8,1137.6 V1024.1 H1698 M1600.8,1137.6 H1698" fill="none" stroke="#f4f4f0" stroke-width="1.1"/>
<text x="1594.7" y="1059.8" font-size="13.5" fill="#f4f4f0" font-family="Liberation Sans" text-anchor="middle" font-weight="bold" textLength="27" lengthAdjust="spacingAndGlyphs" transform="rotate(-90 1594.7 1059.8)">GND</text>
<text x="1594.7" y="1106.8" font-size="13.5" fill="#f4f4f0" font-family="Liberation Sans" text-anchor="middle" font-weight="bold" textLength="24.5" lengthAdjust="spacingAndGlyphs" transform="rotate(-90 1594.7 1106.8)">3V3</text>
<circle cx="823.4" cy="1166.4" r="3.2" fill="#1d3a2b"/><circle cx="823.4" cy="1166.4" r="1.3" fill="#b8b8d8"/>
<circle cx="939.6" cy="1166.4" r="3.2" fill="#1d3a2b"/><circle cx="939.6" cy="1166.4" r="1.3" fill="#b8b8d8"/>
<circle cx="1055.7" cy="1166.4" r="3.2" fill="#1d3a2b"/><circle cx="1055.7" cy="1166.4" r="1.3" fill="#b8b8d8"/>
<circle cx="1171.2" cy="1166.4" r="3.2" fill="#1d3a2b"/><circle cx="1171.2" cy="1166.4" r="1.3" fill="#b8b8d8"/>
<circle cx="1288" cy="1166.4" r="3.2" fill="#1d3a2b"/><circle cx="1288" cy="1166.4" r="1.3" fill="#b8b8d8"/>
<circle cx="1404.5" cy="1166.4" r="3.2" fill="#1d3a2b"/><circle cx="1404.5" cy="1166.4" r="1.3" fill="#b8b8d8"/>
<circle cx="1520.1" cy="1166.4" r="3.2" fill="#1d3a2b"/><circle cx="1520.1" cy="1166.4" r="1.3" fill="#b8b8d8"/>
<circle cx="1635.5" cy="1166.4" r="3.2" fill="#1d3a2b"/><circle cx="1635.5" cy="1166.4" r="1.3" fill="#b8b8d8"/>
<circle cx="1362.3" cy="971.4" r="3.2" fill="#1d3a2b"/><circle cx="1362.3" cy="971.4" r="1.3" fill="#b8b8d8"/>
<circle cx="1571.5" cy="971.4" r="3.2" fill="#1d3a2b"/><circle cx="1571.5" cy="971.4" r="1.3" fill="#b8b8d8"/>
<circle cx="1571.5" cy="1076.4" r="3.2" fill="#1d3a2b"/><circle cx="1571.5" cy="1076.4" r="1.3" fill="#b8b8d8"/>
</svg>
</body></html>
